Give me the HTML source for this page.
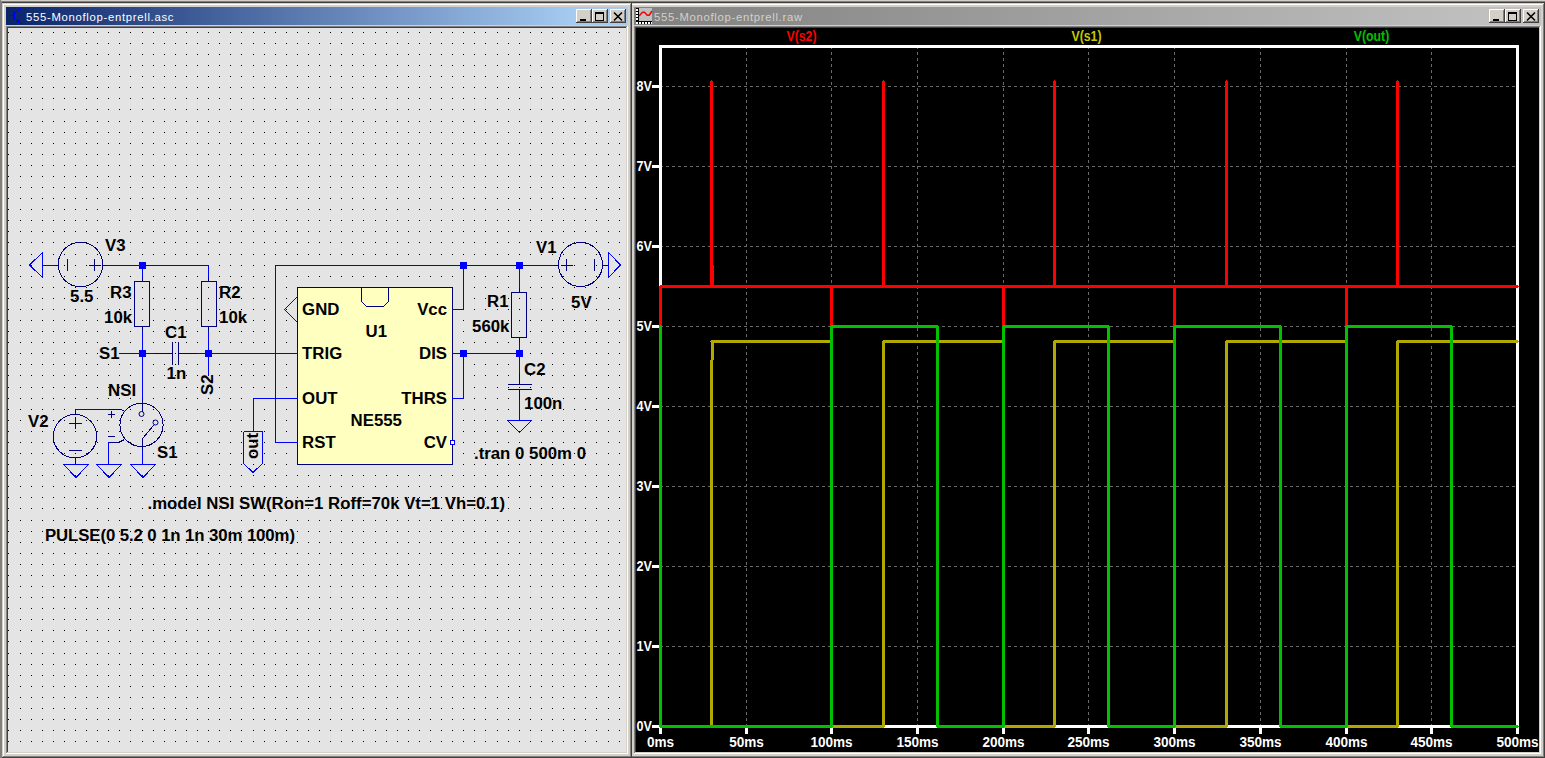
<!DOCTYPE html>
<html><head><meta charset="utf-8"><title>LTspice</title>
<style>html,body{margin:0;padding:0;background:#d4d0c8;overflow:hidden}svg{display:block}text{font-family:"Liberation Sans",sans-serif}</style>
</head><body>
<svg width="1545" height="758" viewBox="0 0 1545 758"><defs></defs><rect x="0" y="0" width="1545" height="758" fill="#d4d0c8"/><rect x="0" y="1" width="1545" height="1" fill="#808080"/><rect x="0" y="2" width="1545" height="1" fill="#404040"/><rect x="0" y="0" width="1" height="758" fill="#808080"/><rect x="1" y="1" width="1" height="757" fill="#808080"/><rect x="630" y="3" width="915" height="755" fill="#d4d0c8"/><rect x="630" y="3" width="915" height="1" fill="#d4d0c8"/><rect x="630" y="3" width="1" height="755" fill="#d4d0c8"/><rect x="631" y="4" width="913" height="1" fill="#ffffff"/><rect x="631" y="4" width="1" height="753" fill="#ffffff"/><rect x="630" y="757" width="915" height="1" fill="#404040"/><rect x="1544" y="3" width="1" height="755" fill="#404040"/><rect x="631" y="756" width="913" height="1" fill="#808080"/><rect x="1543" y="4" width="1" height="753" fill="#808080"/><linearGradient id="gi" gradientUnits="userSpaceOnUse" x1="634" x2="1487" y1="0" y2="0"><stop offset="0" stop-color="#808080"/><stop offset="1" stop-color="#c0c0c0"/></linearGradient><rect x="634" y="7" width="907" height="18" fill="url(#gi)"/><rect x="634" y="26" width="907" height="1" fill="#808080"/><rect x="634" y="26" width="1" height="728" fill="#808080"/><rect x="635" y="27" width="905" height="1" fill="#404040"/><rect x="635" y="27" width="1" height="726" fill="#404040"/><rect x="634" y="753" width="907" height="1" fill="#ffffff"/><rect x="1540" y="26" width="1" height="728" fill="#ffffff"/><rect x="635" y="752" width="905" height="1" fill="#d4d0c8"/><rect x="1539" y="27" width="1" height="726" fill="#d4d0c8"/><rect x="636" y="28" width="903" height="724" fill="#000000"/><rect x="1523" y="9" width="16" height="14" fill="#d4d0c8"/><rect x="1523" y="9" width="16" height="1" fill="#ffffff"/><rect x="1523" y="9" width="1" height="14" fill="#ffffff"/><rect x="1523" y="22" width="16" height="1" fill="#404040"/><rect x="1538" y="9" width="1" height="14" fill="#404040"/><rect x="1524" y="21" width="14" height="1" fill="#808080"/><rect x="1537" y="10" width="1" height="12" fill="#808080"/><path d="M1527,12.5 L1535,20.5 M1535,12.5 L1527,20.5" stroke="#000" stroke-width="1.6" fill="none"/><rect x="1505" y="9" width="16" height="14" fill="#d4d0c8"/><rect x="1505" y="9" width="16" height="1" fill="#ffffff"/><rect x="1505" y="9" width="1" height="14" fill="#ffffff"/><rect x="1505" y="22" width="16" height="1" fill="#404040"/><rect x="1520" y="9" width="1" height="14" fill="#404040"/><rect x="1506" y="21" width="14" height="1" fill="#808080"/><rect x="1519" y="10" width="1" height="12" fill="#808080"/><rect x="1508" y="12" width="9" height="2" fill="#000"/><rect x="1508" y="12" width="1" height="9" fill="#000"/><rect x="1516" y="12" width="1" height="9" fill="#000"/><rect x="1508" y="20" width="9" height="1" fill="#000"/><rect x="1489" y="9" width="16" height="14" fill="#d4d0c8"/><rect x="1489" y="9" width="16" height="1" fill="#ffffff"/><rect x="1489" y="9" width="1" height="14" fill="#ffffff"/><rect x="1489" y="22" width="16" height="1" fill="#404040"/><rect x="1504" y="9" width="1" height="14" fill="#404040"/><rect x="1490" y="21" width="14" height="1" fill="#808080"/><rect x="1503" y="10" width="1" height="12" fill="#808080"/><rect x="1493" y="19" width="6" height="2" fill="#000"/><rect x="2" y="3" width="630" height="755" fill="#d4d0c8"/><rect x="2" y="3" width="630" height="1" fill="#d4d0c8"/><rect x="2" y="3" width="1" height="755" fill="#d4d0c8"/><rect x="3" y="4" width="628" height="1" fill="#ffffff"/><rect x="3" y="4" width="1" height="753" fill="#ffffff"/><rect x="2" y="757" width="630" height="1" fill="#404040"/><rect x="631" y="3" width="1" height="755" fill="#404040"/><rect x="3" y="756" width="628" height="1" fill="#808080"/><rect x="630" y="4" width="1" height="753" fill="#808080"/><linearGradient id="ga" gradientUnits="userSpaceOnUse" x1="6" x2="574" y1="0" y2="0"><stop offset="0" stop-color="#0a246a"/><stop offset="1" stop-color="#a6caf0"/></linearGradient><rect x="6" y="7" width="622" height="18" fill="url(#ga)"/><rect x="6" y="26" width="622" height="1" fill="#808080"/><rect x="6" y="26" width="1" height="728" fill="#808080"/><rect x="7" y="27" width="620" height="1" fill="#404040"/><rect x="7" y="27" width="1" height="726" fill="#404040"/><rect x="6" y="753" width="622" height="1" fill="#ffffff"/><rect x="627" y="26" width="1" height="728" fill="#ffffff"/><rect x="7" y="752" width="620" height="1" fill="#d4d0c8"/><rect x="626" y="27" width="1" height="726" fill="#d4d0c8"/><rect x="8" y="28" width="618" height="724" fill="#e4e4e4"/><rect x="610" y="9" width="16" height="14" fill="#d4d0c8"/><rect x="610" y="9" width="16" height="1" fill="#ffffff"/><rect x="610" y="9" width="1" height="14" fill="#ffffff"/><rect x="610" y="22" width="16" height="1" fill="#404040"/><rect x="625" y="9" width="1" height="14" fill="#404040"/><rect x="611" y="21" width="14" height="1" fill="#808080"/><rect x="624" y="10" width="1" height="12" fill="#808080"/><path d="M614,12.5 L622,20.5 M622,12.5 L614,20.5" stroke="#000" stroke-width="1.6" fill="none"/><rect x="592" y="9" width="16" height="14" fill="#d4d0c8"/><rect x="592" y="9" width="16" height="1" fill="#ffffff"/><rect x="592" y="9" width="1" height="14" fill="#ffffff"/><rect x="592" y="22" width="16" height="1" fill="#404040"/><rect x="607" y="9" width="1" height="14" fill="#404040"/><rect x="593" y="21" width="14" height="1" fill="#808080"/><rect x="606" y="10" width="1" height="12" fill="#808080"/><rect x="595" y="12" width="9" height="2" fill="#000"/><rect x="595" y="12" width="1" height="9" fill="#000"/><rect x="603" y="12" width="1" height="9" fill="#000"/><rect x="595" y="20" width="9" height="1" fill="#000"/><rect x="576" y="9" width="16" height="14" fill="#d4d0c8"/><rect x="576" y="9" width="16" height="1" fill="#ffffff"/><rect x="576" y="9" width="1" height="14" fill="#ffffff"/><rect x="576" y="22" width="16" height="1" fill="#404040"/><rect x="591" y="9" width="1" height="14" fill="#404040"/><rect x="577" y="21" width="14" height="1" fill="#808080"/><rect x="590" y="10" width="1" height="12" fill="#808080"/><rect x="580" y="19" width="6" height="2" fill="#000"/><path d="M8 32h1v1h-1zM20 32h1v1h-1zM31 32h1v1h-1zM42 32h1v1h-1zM53 32h1v1h-1zM64 32h1v1h-1zM75 32h1v1h-1zM86 32h1v1h-1zM97 32h1v1h-1zM108 32h1v1h-1zM119 32h1v1h-1zM130 32h1v1h-1zM142 32h1v1h-1zM153 32h1v1h-1zM164 32h1v1h-1zM175 32h1v1h-1zM186 32h1v1h-1zM197 32h1v1h-1zM208 32h1v1h-1zM219 32h1v1h-1zM230 32h1v1h-1zM241 32h1v1h-1zM253 32h1v1h-1zM264 32h1v1h-1zM275 32h1v1h-1zM286 32h1v1h-1zM297 32h1v1h-1zM308 32h1v1h-1zM319 32h1v1h-1zM330 32h1v1h-1zM341 32h1v1h-1zM352 32h1v1h-1zM363 32h1v1h-1zM375 32h1v1h-1zM386 32h1v1h-1zM397 32h1v1h-1zM408 32h1v1h-1zM419 32h1v1h-1zM430 32h1v1h-1zM441 32h1v1h-1zM452 32h1v1h-1zM463 32h1v1h-1zM474 32h1v1h-1zM485 32h1v1h-1zM497 32h1v1h-1zM508 32h1v1h-1zM519 32h1v1h-1zM530 32h1v1h-1zM541 32h1v1h-1zM552 32h1v1h-1zM563 32h1v1h-1zM574 32h1v1h-1zM585 32h1v1h-1zM596 32h1v1h-1zM608 32h1v1h-1zM619 32h1v1h-1zM8 43h1v1h-1zM20 43h1v1h-1zM31 43h1v1h-1zM42 43h1v1h-1zM53 43h1v1h-1zM64 43h1v1h-1zM75 43h1v1h-1zM86 43h1v1h-1zM97 43h1v1h-1zM108 43h1v1h-1zM119 43h1v1h-1zM130 43h1v1h-1zM142 43h1v1h-1zM153 43h1v1h-1zM164 43h1v1h-1zM175 43h1v1h-1zM186 43h1v1h-1zM197 43h1v1h-1zM208 43h1v1h-1zM219 43h1v1h-1zM230 43h1v1h-1zM241 43h1v1h-1zM253 43h1v1h-1zM264 43h1v1h-1zM275 43h1v1h-1zM286 43h1v1h-1zM297 43h1v1h-1zM308 43h1v1h-1zM319 43h1v1h-1zM330 43h1v1h-1zM341 43h1v1h-1zM352 43h1v1h-1zM363 43h1v1h-1zM375 43h1v1h-1zM386 43h1v1h-1zM397 43h1v1h-1zM408 43h1v1h-1zM419 43h1v1h-1zM430 43h1v1h-1zM441 43h1v1h-1zM452 43h1v1h-1zM463 43h1v1h-1zM474 43h1v1h-1zM485 43h1v1h-1zM497 43h1v1h-1zM508 43h1v1h-1zM519 43h1v1h-1zM530 43h1v1h-1zM541 43h1v1h-1zM552 43h1v1h-1zM563 43h1v1h-1zM574 43h1v1h-1zM585 43h1v1h-1zM596 43h1v1h-1zM608 43h1v1h-1zM619 43h1v1h-1zM8 54h1v1h-1zM20 54h1v1h-1zM31 54h1v1h-1zM42 54h1v1h-1zM53 54h1v1h-1zM64 54h1v1h-1zM75 54h1v1h-1zM86 54h1v1h-1zM97 54h1v1h-1zM108 54h1v1h-1zM119 54h1v1h-1zM130 54h1v1h-1zM142 54h1v1h-1zM153 54h1v1h-1zM164 54h1v1h-1zM175 54h1v1h-1zM186 54h1v1h-1zM197 54h1v1h-1zM208 54h1v1h-1zM219 54h1v1h-1zM230 54h1v1h-1zM241 54h1v1h-1zM253 54h1v1h-1zM264 54h1v1h-1zM275 54h1v1h-1zM286 54h1v1h-1zM297 54h1v1h-1zM308 54h1v1h-1zM319 54h1v1h-1zM330 54h1v1h-1zM341 54h1v1h-1zM352 54h1v1h-1zM363 54h1v1h-1zM375 54h1v1h-1zM386 54h1v1h-1zM397 54h1v1h-1zM408 54h1v1h-1zM419 54h1v1h-1zM430 54h1v1h-1zM441 54h1v1h-1zM452 54h1v1h-1zM463 54h1v1h-1zM474 54h1v1h-1zM485 54h1v1h-1zM497 54h1v1h-1zM508 54h1v1h-1zM519 54h1v1h-1zM530 54h1v1h-1zM541 54h1v1h-1zM552 54h1v1h-1zM563 54h1v1h-1zM574 54h1v1h-1zM585 54h1v1h-1zM596 54h1v1h-1zM608 54h1v1h-1zM619 54h1v1h-1zM8 65h1v1h-1zM20 65h1v1h-1zM31 65h1v1h-1zM42 65h1v1h-1zM53 65h1v1h-1zM64 65h1v1h-1zM75 65h1v1h-1zM86 65h1v1h-1zM97 65h1v1h-1zM108 65h1v1h-1zM119 65h1v1h-1zM130 65h1v1h-1zM142 65h1v1h-1zM153 65h1v1h-1zM164 65h1v1h-1zM175 65h1v1h-1zM186 65h1v1h-1zM197 65h1v1h-1zM208 65h1v1h-1zM219 65h1v1h-1zM230 65h1v1h-1zM241 65h1v1h-1zM253 65h1v1h-1zM264 65h1v1h-1zM275 65h1v1h-1zM286 65h1v1h-1zM297 65h1v1h-1zM308 65h1v1h-1zM319 65h1v1h-1zM330 65h1v1h-1zM341 65h1v1h-1zM352 65h1v1h-1zM363 65h1v1h-1zM375 65h1v1h-1zM386 65h1v1h-1zM397 65h1v1h-1zM408 65h1v1h-1zM419 65h1v1h-1zM430 65h1v1h-1zM441 65h1v1h-1zM452 65h1v1h-1zM463 65h1v1h-1zM474 65h1v1h-1zM485 65h1v1h-1zM497 65h1v1h-1zM508 65h1v1h-1zM519 65h1v1h-1zM530 65h1v1h-1zM541 65h1v1h-1zM552 65h1v1h-1zM563 65h1v1h-1zM574 65h1v1h-1zM585 65h1v1h-1zM596 65h1v1h-1zM608 65h1v1h-1zM619 65h1v1h-1zM8 76h1v1h-1zM20 76h1v1h-1zM31 76h1v1h-1zM42 76h1v1h-1zM53 76h1v1h-1zM64 76h1v1h-1zM75 76h1v1h-1zM86 76h1v1h-1zM97 76h1v1h-1zM108 76h1v1h-1zM119 76h1v1h-1zM130 76h1v1h-1zM142 76h1v1h-1zM153 76h1v1h-1zM164 76h1v1h-1zM175 76h1v1h-1zM186 76h1v1h-1zM197 76h1v1h-1zM208 76h1v1h-1zM219 76h1v1h-1zM230 76h1v1h-1zM241 76h1v1h-1zM253 76h1v1h-1zM264 76h1v1h-1zM275 76h1v1h-1zM286 76h1v1h-1zM297 76h1v1h-1zM308 76h1v1h-1zM319 76h1v1h-1zM330 76h1v1h-1zM341 76h1v1h-1zM352 76h1v1h-1zM363 76h1v1h-1zM375 76h1v1h-1zM386 76h1v1h-1zM397 76h1v1h-1zM408 76h1v1h-1zM419 76h1v1h-1zM430 76h1v1h-1zM441 76h1v1h-1zM452 76h1v1h-1zM463 76h1v1h-1zM474 76h1v1h-1zM485 76h1v1h-1zM497 76h1v1h-1zM508 76h1v1h-1zM519 76h1v1h-1zM530 76h1v1h-1zM541 76h1v1h-1zM552 76h1v1h-1zM563 76h1v1h-1zM574 76h1v1h-1zM585 76h1v1h-1zM596 76h1v1h-1zM608 76h1v1h-1zM619 76h1v1h-1zM8 87h1v1h-1zM20 87h1v1h-1zM31 87h1v1h-1zM42 87h1v1h-1zM53 87h1v1h-1zM64 87h1v1h-1zM75 87h1v1h-1zM86 87h1v1h-1zM97 87h1v1h-1zM108 87h1v1h-1zM119 87h1v1h-1zM130 87h1v1h-1zM142 87h1v1h-1zM153 87h1v1h-1zM164 87h1v1h-1zM175 87h1v1h-1zM186 87h1v1h-1zM197 87h1v1h-1zM208 87h1v1h-1zM219 87h1v1h-1zM230 87h1v1h-1zM241 87h1v1h-1zM253 87h1v1h-1zM264 87h1v1h-1zM275 87h1v1h-1zM286 87h1v1h-1zM297 87h1v1h-1zM308 87h1v1h-1zM319 87h1v1h-1zM330 87h1v1h-1zM341 87h1v1h-1zM352 87h1v1h-1zM363 87h1v1h-1zM375 87h1v1h-1zM386 87h1v1h-1zM397 87h1v1h-1zM408 87h1v1h-1zM419 87h1v1h-1zM430 87h1v1h-1zM441 87h1v1h-1zM452 87h1v1h-1zM463 87h1v1h-1zM474 87h1v1h-1zM485 87h1v1h-1zM497 87h1v1h-1zM508 87h1v1h-1zM519 87h1v1h-1zM530 87h1v1h-1zM541 87h1v1h-1zM552 87h1v1h-1zM563 87h1v1h-1zM574 87h1v1h-1zM585 87h1v1h-1zM596 87h1v1h-1zM608 87h1v1h-1zM619 87h1v1h-1zM8 98h1v1h-1zM20 98h1v1h-1zM31 98h1v1h-1zM42 98h1v1h-1zM53 98h1v1h-1zM64 98h1v1h-1zM75 98h1v1h-1zM86 98h1v1h-1zM97 98h1v1h-1zM108 98h1v1h-1zM119 98h1v1h-1zM130 98h1v1h-1zM142 98h1v1h-1zM153 98h1v1h-1zM164 98h1v1h-1zM175 98h1v1h-1zM186 98h1v1h-1zM197 98h1v1h-1zM208 98h1v1h-1zM219 98h1v1h-1zM230 98h1v1h-1zM241 98h1v1h-1zM253 98h1v1h-1zM264 98h1v1h-1zM275 98h1v1h-1zM286 98h1v1h-1zM297 98h1v1h-1zM308 98h1v1h-1zM319 98h1v1h-1zM330 98h1v1h-1zM341 98h1v1h-1zM352 98h1v1h-1zM363 98h1v1h-1zM375 98h1v1h-1zM386 98h1v1h-1zM397 98h1v1h-1zM408 98h1v1h-1zM419 98h1v1h-1zM430 98h1v1h-1zM441 98h1v1h-1zM452 98h1v1h-1zM463 98h1v1h-1zM474 98h1v1h-1zM485 98h1v1h-1zM497 98h1v1h-1zM508 98h1v1h-1zM519 98h1v1h-1zM530 98h1v1h-1zM541 98h1v1h-1zM552 98h1v1h-1zM563 98h1v1h-1zM574 98h1v1h-1zM585 98h1v1h-1zM596 98h1v1h-1zM608 98h1v1h-1zM619 98h1v1h-1zM8 109h1v1h-1zM20 109h1v1h-1zM31 109h1v1h-1zM42 109h1v1h-1zM53 109h1v1h-1zM64 109h1v1h-1zM75 109h1v1h-1zM86 109h1v1h-1zM97 109h1v1h-1zM108 109h1v1h-1zM119 109h1v1h-1zM130 109h1v1h-1zM142 109h1v1h-1zM153 109h1v1h-1zM164 109h1v1h-1zM175 109h1v1h-1zM186 109h1v1h-1zM197 109h1v1h-1zM208 109h1v1h-1zM219 109h1v1h-1zM230 109h1v1h-1zM241 109h1v1h-1zM253 109h1v1h-1zM264 109h1v1h-1zM275 109h1v1h-1zM286 109h1v1h-1zM297 109h1v1h-1zM308 109h1v1h-1zM319 109h1v1h-1zM330 109h1v1h-1zM341 109h1v1h-1zM352 109h1v1h-1zM363 109h1v1h-1zM375 109h1v1h-1zM386 109h1v1h-1zM397 109h1v1h-1zM408 109h1v1h-1zM419 109h1v1h-1zM430 109h1v1h-1zM441 109h1v1h-1zM452 109h1v1h-1zM463 109h1v1h-1zM474 109h1v1h-1zM485 109h1v1h-1zM497 109h1v1h-1zM508 109h1v1h-1zM519 109h1v1h-1zM530 109h1v1h-1zM541 109h1v1h-1zM552 109h1v1h-1zM563 109h1v1h-1zM574 109h1v1h-1zM585 109h1v1h-1zM596 109h1v1h-1zM608 109h1v1h-1zM619 109h1v1h-1zM8 121h1v1h-1zM20 121h1v1h-1zM31 121h1v1h-1zM42 121h1v1h-1zM53 121h1v1h-1zM64 121h1v1h-1zM75 121h1v1h-1zM86 121h1v1h-1zM97 121h1v1h-1zM108 121h1v1h-1zM119 121h1v1h-1zM130 121h1v1h-1zM142 121h1v1h-1zM153 121h1v1h-1zM164 121h1v1h-1zM175 121h1v1h-1zM186 121h1v1h-1zM197 121h1v1h-1zM208 121h1v1h-1zM219 121h1v1h-1zM230 121h1v1h-1zM241 121h1v1h-1zM253 121h1v1h-1zM264 121h1v1h-1zM275 121h1v1h-1zM286 121h1v1h-1zM297 121h1v1h-1zM308 121h1v1h-1zM319 121h1v1h-1zM330 121h1v1h-1zM341 121h1v1h-1zM352 121h1v1h-1zM363 121h1v1h-1zM375 121h1v1h-1zM386 121h1v1h-1zM397 121h1v1h-1zM408 121h1v1h-1zM419 121h1v1h-1zM430 121h1v1h-1zM441 121h1v1h-1zM452 121h1v1h-1zM463 121h1v1h-1zM474 121h1v1h-1zM485 121h1v1h-1zM497 121h1v1h-1zM508 121h1v1h-1zM519 121h1v1h-1zM530 121h1v1h-1zM541 121h1v1h-1zM552 121h1v1h-1zM563 121h1v1h-1zM574 121h1v1h-1zM585 121h1v1h-1zM596 121h1v1h-1zM608 121h1v1h-1zM619 121h1v1h-1zM8 132h1v1h-1zM20 132h1v1h-1zM31 132h1v1h-1zM42 132h1v1h-1zM53 132h1v1h-1zM64 132h1v1h-1zM75 132h1v1h-1zM86 132h1v1h-1zM97 132h1v1h-1zM108 132h1v1h-1zM119 132h1v1h-1zM130 132h1v1h-1zM142 132h1v1h-1zM153 132h1v1h-1zM164 132h1v1h-1zM175 132h1v1h-1zM186 132h1v1h-1zM197 132h1v1h-1zM208 132h1v1h-1zM219 132h1v1h-1zM230 132h1v1h-1zM241 132h1v1h-1zM253 132h1v1h-1zM264 132h1v1h-1zM275 132h1v1h-1zM286 132h1v1h-1zM297 132h1v1h-1zM308 132h1v1h-1zM319 132h1v1h-1zM330 132h1v1h-1zM341 132h1v1h-1zM352 132h1v1h-1zM363 132h1v1h-1zM375 132h1v1h-1zM386 132h1v1h-1zM397 132h1v1h-1zM408 132h1v1h-1zM419 132h1v1h-1zM430 132h1v1h-1zM441 132h1v1h-1zM452 132h1v1h-1zM463 132h1v1h-1zM474 132h1v1h-1zM485 132h1v1h-1zM497 132h1v1h-1zM508 132h1v1h-1zM519 132h1v1h-1zM530 132h1v1h-1zM541 132h1v1h-1zM552 132h1v1h-1zM563 132h1v1h-1zM574 132h1v1h-1zM585 132h1v1h-1zM596 132h1v1h-1zM608 132h1v1h-1zM619 132h1v1h-1zM8 143h1v1h-1zM20 143h1v1h-1zM31 143h1v1h-1zM42 143h1v1h-1zM53 143h1v1h-1zM64 143h1v1h-1zM75 143h1v1h-1zM86 143h1v1h-1zM97 143h1v1h-1zM108 143h1v1h-1zM119 143h1v1h-1zM130 143h1v1h-1zM142 143h1v1h-1zM153 143h1v1h-1zM164 143h1v1h-1zM175 143h1v1h-1zM186 143h1v1h-1zM197 143h1v1h-1zM208 143h1v1h-1zM219 143h1v1h-1zM230 143h1v1h-1zM241 143h1v1h-1zM253 143h1v1h-1zM264 143h1v1h-1zM275 143h1v1h-1zM286 143h1v1h-1zM297 143h1v1h-1zM308 143h1v1h-1zM319 143h1v1h-1zM330 143h1v1h-1zM341 143h1v1h-1zM352 143h1v1h-1zM363 143h1v1h-1zM375 143h1v1h-1zM386 143h1v1h-1zM397 143h1v1h-1zM408 143h1v1h-1zM419 143h1v1h-1zM430 143h1v1h-1zM441 143h1v1h-1zM452 143h1v1h-1zM463 143h1v1h-1zM474 143h1v1h-1zM485 143h1v1h-1zM497 143h1v1h-1zM508 143h1v1h-1zM519 143h1v1h-1zM530 143h1v1h-1zM541 143h1v1h-1zM552 143h1v1h-1zM563 143h1v1h-1zM574 143h1v1h-1zM585 143h1v1h-1zM596 143h1v1h-1zM608 143h1v1h-1zM619 143h1v1h-1zM8 154h1v1h-1zM20 154h1v1h-1zM31 154h1v1h-1zM42 154h1v1h-1zM53 154h1v1h-1zM64 154h1v1h-1zM75 154h1v1h-1zM86 154h1v1h-1zM97 154h1v1h-1zM108 154h1v1h-1zM119 154h1v1h-1zM130 154h1v1h-1zM142 154h1v1h-1zM153 154h1v1h-1zM164 154h1v1h-1zM175 154h1v1h-1zM186 154h1v1h-1zM197 154h1v1h-1zM208 154h1v1h-1zM219 154h1v1h-1zM230 154h1v1h-1zM241 154h1v1h-1zM253 154h1v1h-1zM264 154h1v1h-1zM275 154h1v1h-1zM286 154h1v1h-1zM297 154h1v1h-1zM308 154h1v1h-1zM319 154h1v1h-1zM330 154h1v1h-1zM341 154h1v1h-1zM352 154h1v1h-1zM363 154h1v1h-1zM375 154h1v1h-1zM386 154h1v1h-1zM397 154h1v1h-1zM408 154h1v1h-1zM419 154h1v1h-1zM430 154h1v1h-1zM441 154h1v1h-1zM452 154h1v1h-1zM463 154h1v1h-1zM474 154h1v1h-1zM485 154h1v1h-1zM497 154h1v1h-1zM508 154h1v1h-1zM519 154h1v1h-1zM530 154h1v1h-1zM541 154h1v1h-1zM552 154h1v1h-1zM563 154h1v1h-1zM574 154h1v1h-1zM585 154h1v1h-1zM596 154h1v1h-1zM608 154h1v1h-1zM619 154h1v1h-1zM8 165h1v1h-1zM20 165h1v1h-1zM31 165h1v1h-1zM42 165h1v1h-1zM53 165h1v1h-1zM64 165h1v1h-1zM75 165h1v1h-1zM86 165h1v1h-1zM97 165h1v1h-1zM108 165h1v1h-1zM119 165h1v1h-1zM130 165h1v1h-1zM142 165h1v1h-1zM153 165h1v1h-1zM164 165h1v1h-1zM175 165h1v1h-1zM186 165h1v1h-1zM197 165h1v1h-1zM208 165h1v1h-1zM219 165h1v1h-1zM230 165h1v1h-1zM241 165h1v1h-1zM253 165h1v1h-1zM264 165h1v1h-1zM275 165h1v1h-1zM286 165h1v1h-1zM297 165h1v1h-1zM308 165h1v1h-1zM319 165h1v1h-1zM330 165h1v1h-1zM341 165h1v1h-1zM352 165h1v1h-1zM363 165h1v1h-1zM375 165h1v1h-1zM386 165h1v1h-1zM397 165h1v1h-1zM408 165h1v1h-1zM419 165h1v1h-1zM430 165h1v1h-1zM441 165h1v1h-1zM452 165h1v1h-1zM463 165h1v1h-1zM474 165h1v1h-1zM485 165h1v1h-1zM497 165h1v1h-1zM508 165h1v1h-1zM519 165h1v1h-1zM530 165h1v1h-1zM541 165h1v1h-1zM552 165h1v1h-1zM563 165h1v1h-1zM574 165h1v1h-1zM585 165h1v1h-1zM596 165h1v1h-1zM608 165h1v1h-1zM619 165h1v1h-1zM8 176h1v1h-1zM20 176h1v1h-1zM31 176h1v1h-1zM42 176h1v1h-1zM53 176h1v1h-1zM64 176h1v1h-1zM75 176h1v1h-1zM86 176h1v1h-1zM97 176h1v1h-1zM108 176h1v1h-1zM119 176h1v1h-1zM130 176h1v1h-1zM142 176h1v1h-1zM153 176h1v1h-1zM164 176h1v1h-1zM175 176h1v1h-1zM186 176h1v1h-1zM197 176h1v1h-1zM208 176h1v1h-1zM219 176h1v1h-1zM230 176h1v1h-1zM241 176h1v1h-1zM253 176h1v1h-1zM264 176h1v1h-1zM275 176h1v1h-1zM286 176h1v1h-1zM297 176h1v1h-1zM308 176h1v1h-1zM319 176h1v1h-1zM330 176h1v1h-1zM341 176h1v1h-1zM352 176h1v1h-1zM363 176h1v1h-1zM375 176h1v1h-1zM386 176h1v1h-1zM397 176h1v1h-1zM408 176h1v1h-1zM419 176h1v1h-1zM430 176h1v1h-1zM441 176h1v1h-1zM452 176h1v1h-1zM463 176h1v1h-1zM474 176h1v1h-1zM485 176h1v1h-1zM497 176h1v1h-1zM508 176h1v1h-1zM519 176h1v1h-1zM530 176h1v1h-1zM541 176h1v1h-1zM552 176h1v1h-1zM563 176h1v1h-1zM574 176h1v1h-1zM585 176h1v1h-1zM596 176h1v1h-1zM608 176h1v1h-1zM619 176h1v1h-1zM8 187h1v1h-1zM20 187h1v1h-1zM31 187h1v1h-1zM42 187h1v1h-1zM53 187h1v1h-1zM64 187h1v1h-1zM75 187h1v1h-1zM86 187h1v1h-1zM97 187h1v1h-1zM108 187h1v1h-1zM119 187h1v1h-1zM130 187h1v1h-1zM142 187h1v1h-1zM153 187h1v1h-1zM164 187h1v1h-1zM175 187h1v1h-1zM186 187h1v1h-1zM197 187h1v1h-1zM208 187h1v1h-1zM219 187h1v1h-1zM230 187h1v1h-1zM241 187h1v1h-1zM253 187h1v1h-1zM264 187h1v1h-1zM275 187h1v1h-1zM286 187h1v1h-1zM297 187h1v1h-1zM308 187h1v1h-1zM319 187h1v1h-1zM330 187h1v1h-1zM341 187h1v1h-1zM352 187h1v1h-1zM363 187h1v1h-1zM375 187h1v1h-1zM386 187h1v1h-1zM397 187h1v1h-1zM408 187h1v1h-1zM419 187h1v1h-1zM430 187h1v1h-1zM441 187h1v1h-1zM452 187h1v1h-1zM463 187h1v1h-1zM474 187h1v1h-1zM485 187h1v1h-1zM497 187h1v1h-1zM508 187h1v1h-1zM519 187h1v1h-1zM530 187h1v1h-1zM541 187h1v1h-1zM552 187h1v1h-1zM563 187h1v1h-1zM574 187h1v1h-1zM585 187h1v1h-1zM596 187h1v1h-1zM608 187h1v1h-1zM619 187h1v1h-1zM8 198h1v1h-1zM20 198h1v1h-1zM31 198h1v1h-1zM42 198h1v1h-1zM53 198h1v1h-1zM64 198h1v1h-1zM75 198h1v1h-1zM86 198h1v1h-1zM97 198h1v1h-1zM108 198h1v1h-1zM119 198h1v1h-1zM130 198h1v1h-1zM142 198h1v1h-1zM153 198h1v1h-1zM164 198h1v1h-1zM175 198h1v1h-1zM186 198h1v1h-1zM197 198h1v1h-1zM208 198h1v1h-1zM219 198h1v1h-1zM230 198h1v1h-1zM241 198h1v1h-1zM253 198h1v1h-1zM264 198h1v1h-1zM275 198h1v1h-1zM286 198h1v1h-1zM297 198h1v1h-1zM308 198h1v1h-1zM319 198h1v1h-1zM330 198h1v1h-1zM341 198h1v1h-1zM352 198h1v1h-1zM363 198h1v1h-1zM375 198h1v1h-1zM386 198h1v1h-1zM397 198h1v1h-1zM408 198h1v1h-1zM419 198h1v1h-1zM430 198h1v1h-1zM441 198h1v1h-1zM452 198h1v1h-1zM463 198h1v1h-1zM474 198h1v1h-1zM485 198h1v1h-1zM497 198h1v1h-1zM508 198h1v1h-1zM519 198h1v1h-1zM530 198h1v1h-1zM541 198h1v1h-1zM552 198h1v1h-1zM563 198h1v1h-1zM574 198h1v1h-1zM585 198h1v1h-1zM596 198h1v1h-1zM608 198h1v1h-1zM619 198h1v1h-1zM8 209h1v1h-1zM20 209h1v1h-1zM31 209h1v1h-1zM42 209h1v1h-1zM53 209h1v1h-1zM64 209h1v1h-1zM75 209h1v1h-1zM86 209h1v1h-1zM97 209h1v1h-1zM108 209h1v1h-1zM119 209h1v1h-1zM130 209h1v1h-1zM142 209h1v1h-1zM153 209h1v1h-1zM164 209h1v1h-1zM175 209h1v1h-1zM186 209h1v1h-1zM197 209h1v1h-1zM208 209h1v1h-1zM219 209h1v1h-1zM230 209h1v1h-1zM241 209h1v1h-1zM253 209h1v1h-1zM264 209h1v1h-1zM275 209h1v1h-1zM286 209h1v1h-1zM297 209h1v1h-1zM308 209h1v1h-1zM319 209h1v1h-1zM330 209h1v1h-1zM341 209h1v1h-1zM352 209h1v1h-1zM363 209h1v1h-1zM375 209h1v1h-1zM386 209h1v1h-1zM397 209h1v1h-1zM408 209h1v1h-1zM419 209h1v1h-1zM430 209h1v1h-1zM441 209h1v1h-1zM452 209h1v1h-1zM463 209h1v1h-1zM474 209h1v1h-1zM485 209h1v1h-1zM497 209h1v1h-1zM508 209h1v1h-1zM519 209h1v1h-1zM530 209h1v1h-1zM541 209h1v1h-1zM552 209h1v1h-1zM563 209h1v1h-1zM574 209h1v1h-1zM585 209h1v1h-1zM596 209h1v1h-1zM608 209h1v1h-1zM619 209h1v1h-1zM8 220h1v1h-1zM20 220h1v1h-1zM31 220h1v1h-1zM42 220h1v1h-1zM53 220h1v1h-1zM64 220h1v1h-1zM75 220h1v1h-1zM86 220h1v1h-1zM97 220h1v1h-1zM108 220h1v1h-1zM119 220h1v1h-1zM130 220h1v1h-1zM142 220h1v1h-1zM153 220h1v1h-1zM164 220h1v1h-1zM175 220h1v1h-1zM186 220h1v1h-1zM197 220h1v1h-1zM208 220h1v1h-1zM219 220h1v1h-1zM230 220h1v1h-1zM241 220h1v1h-1zM253 220h1v1h-1zM264 220h1v1h-1zM275 220h1v1h-1zM286 220h1v1h-1zM297 220h1v1h-1zM308 220h1v1h-1zM319 220h1v1h-1zM330 220h1v1h-1zM341 220h1v1h-1zM352 220h1v1h-1zM363 220h1v1h-1zM375 220h1v1h-1zM386 220h1v1h-1zM397 220h1v1h-1zM408 220h1v1h-1zM419 220h1v1h-1zM430 220h1v1h-1zM441 220h1v1h-1zM452 220h1v1h-1zM463 220h1v1h-1zM474 220h1v1h-1zM485 220h1v1h-1zM497 220h1v1h-1zM508 220h1v1h-1zM519 220h1v1h-1zM530 220h1v1h-1zM541 220h1v1h-1zM552 220h1v1h-1zM563 220h1v1h-1zM574 220h1v1h-1zM585 220h1v1h-1zM596 220h1v1h-1zM608 220h1v1h-1zM619 220h1v1h-1zM8 231h1v1h-1zM20 231h1v1h-1zM31 231h1v1h-1zM42 231h1v1h-1zM53 231h1v1h-1zM64 231h1v1h-1zM75 231h1v1h-1zM86 231h1v1h-1zM97 231h1v1h-1zM108 231h1v1h-1zM119 231h1v1h-1zM130 231h1v1h-1zM142 231h1v1h-1zM153 231h1v1h-1zM164 231h1v1h-1zM175 231h1v1h-1zM186 231h1v1h-1zM197 231h1v1h-1zM208 231h1v1h-1zM219 231h1v1h-1zM230 231h1v1h-1zM241 231h1v1h-1zM253 231h1v1h-1zM264 231h1v1h-1zM275 231h1v1h-1zM286 231h1v1h-1zM297 231h1v1h-1zM308 231h1v1h-1zM319 231h1v1h-1zM330 231h1v1h-1zM341 231h1v1h-1zM352 231h1v1h-1zM363 231h1v1h-1zM375 231h1v1h-1zM386 231h1v1h-1zM397 231h1v1h-1zM408 231h1v1h-1zM419 231h1v1h-1zM430 231h1v1h-1zM441 231h1v1h-1zM452 231h1v1h-1zM463 231h1v1h-1zM474 231h1v1h-1zM485 231h1v1h-1zM497 231h1v1h-1zM508 231h1v1h-1zM519 231h1v1h-1zM530 231h1v1h-1zM541 231h1v1h-1zM552 231h1v1h-1zM563 231h1v1h-1zM574 231h1v1h-1zM585 231h1v1h-1zM596 231h1v1h-1zM608 231h1v1h-1zM619 231h1v1h-1zM8 242h1v1h-1zM20 242h1v1h-1zM31 242h1v1h-1zM42 242h1v1h-1zM53 242h1v1h-1zM64 242h1v1h-1zM75 242h1v1h-1zM86 242h1v1h-1zM97 242h1v1h-1zM108 242h1v1h-1zM119 242h1v1h-1zM130 242h1v1h-1zM142 242h1v1h-1zM153 242h1v1h-1zM164 242h1v1h-1zM175 242h1v1h-1zM186 242h1v1h-1zM197 242h1v1h-1zM208 242h1v1h-1zM219 242h1v1h-1zM230 242h1v1h-1zM241 242h1v1h-1zM253 242h1v1h-1zM264 242h1v1h-1zM275 242h1v1h-1zM286 242h1v1h-1zM297 242h1v1h-1zM308 242h1v1h-1zM319 242h1v1h-1zM330 242h1v1h-1zM341 242h1v1h-1zM352 242h1v1h-1zM363 242h1v1h-1zM375 242h1v1h-1zM386 242h1v1h-1zM397 242h1v1h-1zM408 242h1v1h-1zM419 242h1v1h-1zM430 242h1v1h-1zM441 242h1v1h-1zM452 242h1v1h-1zM463 242h1v1h-1zM474 242h1v1h-1zM485 242h1v1h-1zM497 242h1v1h-1zM508 242h1v1h-1zM519 242h1v1h-1zM530 242h1v1h-1zM541 242h1v1h-1zM552 242h1v1h-1zM563 242h1v1h-1zM574 242h1v1h-1zM585 242h1v1h-1zM596 242h1v1h-1zM608 242h1v1h-1zM619 242h1v1h-1zM8 254h1v1h-1zM20 254h1v1h-1zM31 254h1v1h-1zM42 254h1v1h-1zM53 254h1v1h-1zM64 254h1v1h-1zM75 254h1v1h-1zM86 254h1v1h-1zM97 254h1v1h-1zM108 254h1v1h-1zM119 254h1v1h-1zM130 254h1v1h-1zM142 254h1v1h-1zM153 254h1v1h-1zM164 254h1v1h-1zM175 254h1v1h-1zM186 254h1v1h-1zM197 254h1v1h-1zM208 254h1v1h-1zM219 254h1v1h-1zM230 254h1v1h-1zM241 254h1v1h-1zM253 254h1v1h-1zM264 254h1v1h-1zM275 254h1v1h-1zM286 254h1v1h-1zM297 254h1v1h-1zM308 254h1v1h-1zM319 254h1v1h-1zM330 254h1v1h-1zM341 254h1v1h-1zM352 254h1v1h-1zM363 254h1v1h-1zM375 254h1v1h-1zM386 254h1v1h-1zM397 254h1v1h-1zM408 254h1v1h-1zM419 254h1v1h-1zM430 254h1v1h-1zM441 254h1v1h-1zM452 254h1v1h-1zM463 254h1v1h-1zM474 254h1v1h-1zM485 254h1v1h-1zM497 254h1v1h-1zM508 254h1v1h-1zM519 254h1v1h-1zM530 254h1v1h-1zM541 254h1v1h-1zM552 254h1v1h-1zM563 254h1v1h-1zM574 254h1v1h-1zM585 254h1v1h-1zM596 254h1v1h-1zM608 254h1v1h-1zM619 254h1v1h-1zM8 265h1v1h-1zM20 265h1v1h-1zM31 265h1v1h-1zM42 265h1v1h-1zM53 265h1v1h-1zM64 265h1v1h-1zM75 265h1v1h-1zM86 265h1v1h-1zM97 265h1v1h-1zM108 265h1v1h-1zM119 265h1v1h-1zM130 265h1v1h-1zM142 265h1v1h-1zM153 265h1v1h-1zM164 265h1v1h-1zM175 265h1v1h-1zM186 265h1v1h-1zM197 265h1v1h-1zM208 265h1v1h-1zM219 265h1v1h-1zM230 265h1v1h-1zM241 265h1v1h-1zM253 265h1v1h-1zM264 265h1v1h-1zM275 265h1v1h-1zM286 265h1v1h-1zM297 265h1v1h-1zM308 265h1v1h-1zM319 265h1v1h-1zM330 265h1v1h-1zM341 265h1v1h-1zM352 265h1v1h-1zM363 265h1v1h-1zM375 265h1v1h-1zM386 265h1v1h-1zM397 265h1v1h-1zM408 265h1v1h-1zM419 265h1v1h-1zM430 265h1v1h-1zM441 265h1v1h-1zM452 265h1v1h-1zM463 265h1v1h-1zM474 265h1v1h-1zM485 265h1v1h-1zM497 265h1v1h-1zM508 265h1v1h-1zM519 265h1v1h-1zM530 265h1v1h-1zM541 265h1v1h-1zM552 265h1v1h-1zM563 265h1v1h-1zM574 265h1v1h-1zM585 265h1v1h-1zM596 265h1v1h-1zM608 265h1v1h-1zM619 265h1v1h-1zM8 276h1v1h-1zM20 276h1v1h-1zM31 276h1v1h-1zM42 276h1v1h-1zM53 276h1v1h-1zM64 276h1v1h-1zM75 276h1v1h-1zM86 276h1v1h-1zM97 276h1v1h-1zM108 276h1v1h-1zM119 276h1v1h-1zM130 276h1v1h-1zM142 276h1v1h-1zM153 276h1v1h-1zM164 276h1v1h-1zM175 276h1v1h-1zM186 276h1v1h-1zM197 276h1v1h-1zM208 276h1v1h-1zM219 276h1v1h-1zM230 276h1v1h-1zM241 276h1v1h-1zM253 276h1v1h-1zM264 276h1v1h-1zM275 276h1v1h-1zM286 276h1v1h-1zM297 276h1v1h-1zM308 276h1v1h-1zM319 276h1v1h-1zM330 276h1v1h-1zM341 276h1v1h-1zM352 276h1v1h-1zM363 276h1v1h-1zM375 276h1v1h-1zM386 276h1v1h-1zM397 276h1v1h-1zM408 276h1v1h-1zM419 276h1v1h-1zM430 276h1v1h-1zM441 276h1v1h-1zM452 276h1v1h-1zM463 276h1v1h-1zM474 276h1v1h-1zM485 276h1v1h-1zM497 276h1v1h-1zM508 276h1v1h-1zM519 276h1v1h-1zM530 276h1v1h-1zM541 276h1v1h-1zM552 276h1v1h-1zM563 276h1v1h-1zM574 276h1v1h-1zM585 276h1v1h-1zM596 276h1v1h-1zM608 276h1v1h-1zM619 276h1v1h-1zM8 287h1v1h-1zM20 287h1v1h-1zM31 287h1v1h-1zM42 287h1v1h-1zM53 287h1v1h-1zM64 287h1v1h-1zM75 287h1v1h-1zM86 287h1v1h-1zM97 287h1v1h-1zM108 287h1v1h-1zM119 287h1v1h-1zM130 287h1v1h-1zM142 287h1v1h-1zM153 287h1v1h-1zM164 287h1v1h-1zM175 287h1v1h-1zM186 287h1v1h-1zM197 287h1v1h-1zM208 287h1v1h-1zM219 287h1v1h-1zM230 287h1v1h-1zM241 287h1v1h-1zM253 287h1v1h-1zM264 287h1v1h-1zM275 287h1v1h-1zM286 287h1v1h-1zM297 287h1v1h-1zM308 287h1v1h-1zM319 287h1v1h-1zM330 287h1v1h-1zM341 287h1v1h-1zM352 287h1v1h-1zM363 287h1v1h-1zM375 287h1v1h-1zM386 287h1v1h-1zM397 287h1v1h-1zM408 287h1v1h-1zM419 287h1v1h-1zM430 287h1v1h-1zM441 287h1v1h-1zM452 287h1v1h-1zM463 287h1v1h-1zM474 287h1v1h-1zM485 287h1v1h-1zM497 287h1v1h-1zM508 287h1v1h-1zM519 287h1v1h-1zM530 287h1v1h-1zM541 287h1v1h-1zM552 287h1v1h-1zM563 287h1v1h-1zM574 287h1v1h-1zM585 287h1v1h-1zM596 287h1v1h-1zM608 287h1v1h-1zM619 287h1v1h-1zM8 298h1v1h-1zM20 298h1v1h-1zM31 298h1v1h-1zM42 298h1v1h-1zM53 298h1v1h-1zM64 298h1v1h-1zM75 298h1v1h-1zM86 298h1v1h-1zM97 298h1v1h-1zM108 298h1v1h-1zM119 298h1v1h-1zM130 298h1v1h-1zM142 298h1v1h-1zM153 298h1v1h-1zM164 298h1v1h-1zM175 298h1v1h-1zM186 298h1v1h-1zM197 298h1v1h-1zM208 298h1v1h-1zM219 298h1v1h-1zM230 298h1v1h-1zM241 298h1v1h-1zM253 298h1v1h-1zM264 298h1v1h-1zM275 298h1v1h-1zM286 298h1v1h-1zM297 298h1v1h-1zM308 298h1v1h-1zM319 298h1v1h-1zM330 298h1v1h-1zM341 298h1v1h-1zM352 298h1v1h-1zM363 298h1v1h-1zM375 298h1v1h-1zM386 298h1v1h-1zM397 298h1v1h-1zM408 298h1v1h-1zM419 298h1v1h-1zM430 298h1v1h-1zM441 298h1v1h-1zM452 298h1v1h-1zM463 298h1v1h-1zM474 298h1v1h-1zM485 298h1v1h-1zM497 298h1v1h-1zM508 298h1v1h-1zM519 298h1v1h-1zM530 298h1v1h-1zM541 298h1v1h-1zM552 298h1v1h-1zM563 298h1v1h-1zM574 298h1v1h-1zM585 298h1v1h-1zM596 298h1v1h-1zM608 298h1v1h-1zM619 298h1v1h-1zM8 309h1v1h-1zM20 309h1v1h-1zM31 309h1v1h-1zM42 309h1v1h-1zM53 309h1v1h-1zM64 309h1v1h-1zM75 309h1v1h-1zM86 309h1v1h-1zM97 309h1v1h-1zM108 309h1v1h-1zM119 309h1v1h-1zM130 309h1v1h-1zM142 309h1v1h-1zM153 309h1v1h-1zM164 309h1v1h-1zM175 309h1v1h-1zM186 309h1v1h-1zM197 309h1v1h-1zM208 309h1v1h-1zM219 309h1v1h-1zM230 309h1v1h-1zM241 309h1v1h-1zM253 309h1v1h-1zM264 309h1v1h-1zM275 309h1v1h-1zM286 309h1v1h-1zM297 309h1v1h-1zM308 309h1v1h-1zM319 309h1v1h-1zM330 309h1v1h-1zM341 309h1v1h-1zM352 309h1v1h-1zM363 309h1v1h-1zM375 309h1v1h-1zM386 309h1v1h-1zM397 309h1v1h-1zM408 309h1v1h-1zM419 309h1v1h-1zM430 309h1v1h-1zM441 309h1v1h-1zM452 309h1v1h-1zM463 309h1v1h-1zM474 309h1v1h-1zM485 309h1v1h-1zM497 309h1v1h-1zM508 309h1v1h-1zM519 309h1v1h-1zM530 309h1v1h-1zM541 309h1v1h-1zM552 309h1v1h-1zM563 309h1v1h-1zM574 309h1v1h-1zM585 309h1v1h-1zM596 309h1v1h-1zM608 309h1v1h-1zM619 309h1v1h-1zM8 320h1v1h-1zM20 320h1v1h-1zM31 320h1v1h-1zM42 320h1v1h-1zM53 320h1v1h-1zM64 320h1v1h-1zM75 320h1v1h-1zM86 320h1v1h-1zM97 320h1v1h-1zM108 320h1v1h-1zM119 320h1v1h-1zM130 320h1v1h-1zM142 320h1v1h-1zM153 320h1v1h-1zM164 320h1v1h-1zM175 320h1v1h-1zM186 320h1v1h-1zM197 320h1v1h-1zM208 320h1v1h-1zM219 320h1v1h-1zM230 320h1v1h-1zM241 320h1v1h-1zM253 320h1v1h-1zM264 320h1v1h-1zM275 320h1v1h-1zM286 320h1v1h-1zM297 320h1v1h-1zM308 320h1v1h-1zM319 320h1v1h-1zM330 320h1v1h-1zM341 320h1v1h-1zM352 320h1v1h-1zM363 320h1v1h-1zM375 320h1v1h-1zM386 320h1v1h-1zM397 320h1v1h-1zM408 320h1v1h-1zM419 320h1v1h-1zM430 320h1v1h-1zM441 320h1v1h-1zM452 320h1v1h-1zM463 320h1v1h-1zM474 320h1v1h-1zM485 320h1v1h-1zM497 320h1v1h-1zM508 320h1v1h-1zM519 320h1v1h-1zM530 320h1v1h-1zM541 320h1v1h-1zM552 320h1v1h-1zM563 320h1v1h-1zM574 320h1v1h-1zM585 320h1v1h-1zM596 320h1v1h-1zM608 320h1v1h-1zM619 320h1v1h-1zM8 331h1v1h-1zM20 331h1v1h-1zM31 331h1v1h-1zM42 331h1v1h-1zM53 331h1v1h-1zM64 331h1v1h-1zM75 331h1v1h-1zM86 331h1v1h-1zM97 331h1v1h-1zM108 331h1v1h-1zM119 331h1v1h-1zM130 331h1v1h-1zM142 331h1v1h-1zM153 331h1v1h-1zM164 331h1v1h-1zM175 331h1v1h-1zM186 331h1v1h-1zM197 331h1v1h-1zM208 331h1v1h-1zM219 331h1v1h-1zM230 331h1v1h-1zM241 331h1v1h-1zM253 331h1v1h-1zM264 331h1v1h-1zM275 331h1v1h-1zM286 331h1v1h-1zM297 331h1v1h-1zM308 331h1v1h-1zM319 331h1v1h-1zM330 331h1v1h-1zM341 331h1v1h-1zM352 331h1v1h-1zM363 331h1v1h-1zM375 331h1v1h-1zM386 331h1v1h-1zM397 331h1v1h-1zM408 331h1v1h-1zM419 331h1v1h-1zM430 331h1v1h-1zM441 331h1v1h-1zM452 331h1v1h-1zM463 331h1v1h-1zM474 331h1v1h-1zM485 331h1v1h-1zM497 331h1v1h-1zM508 331h1v1h-1zM519 331h1v1h-1zM530 331h1v1h-1zM541 331h1v1h-1zM552 331h1v1h-1zM563 331h1v1h-1zM574 331h1v1h-1zM585 331h1v1h-1zM596 331h1v1h-1zM608 331h1v1h-1zM619 331h1v1h-1zM8 342h1v1h-1zM20 342h1v1h-1zM31 342h1v1h-1zM42 342h1v1h-1zM53 342h1v1h-1zM64 342h1v1h-1zM75 342h1v1h-1zM86 342h1v1h-1zM97 342h1v1h-1zM108 342h1v1h-1zM119 342h1v1h-1zM130 342h1v1h-1zM142 342h1v1h-1zM153 342h1v1h-1zM164 342h1v1h-1zM175 342h1v1h-1zM186 342h1v1h-1zM197 342h1v1h-1zM208 342h1v1h-1zM219 342h1v1h-1zM230 342h1v1h-1zM241 342h1v1h-1zM253 342h1v1h-1zM264 342h1v1h-1zM275 342h1v1h-1zM286 342h1v1h-1zM297 342h1v1h-1zM308 342h1v1h-1zM319 342h1v1h-1zM330 342h1v1h-1zM341 342h1v1h-1zM352 342h1v1h-1zM363 342h1v1h-1zM375 342h1v1h-1zM386 342h1v1h-1zM397 342h1v1h-1zM408 342h1v1h-1zM419 342h1v1h-1zM430 342h1v1h-1zM441 342h1v1h-1zM452 342h1v1h-1zM463 342h1v1h-1zM474 342h1v1h-1zM485 342h1v1h-1zM497 342h1v1h-1zM508 342h1v1h-1zM519 342h1v1h-1zM530 342h1v1h-1zM541 342h1v1h-1zM552 342h1v1h-1zM563 342h1v1h-1zM574 342h1v1h-1zM585 342h1v1h-1zM596 342h1v1h-1zM608 342h1v1h-1zM619 342h1v1h-1zM8 353h1v1h-1zM20 353h1v1h-1zM31 353h1v1h-1zM42 353h1v1h-1zM53 353h1v1h-1zM64 353h1v1h-1zM75 353h1v1h-1zM86 353h1v1h-1zM97 353h1v1h-1zM108 353h1v1h-1zM119 353h1v1h-1zM130 353h1v1h-1zM142 353h1v1h-1zM153 353h1v1h-1zM164 353h1v1h-1zM175 353h1v1h-1zM186 353h1v1h-1zM197 353h1v1h-1zM208 353h1v1h-1zM219 353h1v1h-1zM230 353h1v1h-1zM241 353h1v1h-1zM253 353h1v1h-1zM264 353h1v1h-1zM275 353h1v1h-1zM286 353h1v1h-1zM297 353h1v1h-1zM308 353h1v1h-1zM319 353h1v1h-1zM330 353h1v1h-1zM341 353h1v1h-1zM352 353h1v1h-1zM363 353h1v1h-1zM375 353h1v1h-1zM386 353h1v1h-1zM397 353h1v1h-1zM408 353h1v1h-1zM419 353h1v1h-1zM430 353h1v1h-1zM441 353h1v1h-1zM452 353h1v1h-1zM463 353h1v1h-1zM474 353h1v1h-1zM485 353h1v1h-1zM497 353h1v1h-1zM508 353h1v1h-1zM519 353h1v1h-1zM530 353h1v1h-1zM541 353h1v1h-1zM552 353h1v1h-1zM563 353h1v1h-1zM574 353h1v1h-1zM585 353h1v1h-1zM596 353h1v1h-1zM608 353h1v1h-1zM619 353h1v1h-1zM8 364h1v1h-1zM20 364h1v1h-1zM31 364h1v1h-1zM42 364h1v1h-1zM53 364h1v1h-1zM64 364h1v1h-1zM75 364h1v1h-1zM86 364h1v1h-1zM97 364h1v1h-1zM108 364h1v1h-1zM119 364h1v1h-1zM130 364h1v1h-1zM142 364h1v1h-1zM153 364h1v1h-1zM164 364h1v1h-1zM175 364h1v1h-1zM186 364h1v1h-1zM197 364h1v1h-1zM208 364h1v1h-1zM219 364h1v1h-1zM230 364h1v1h-1zM241 364h1v1h-1zM253 364h1v1h-1zM264 364h1v1h-1zM275 364h1v1h-1zM286 364h1v1h-1zM297 364h1v1h-1zM308 364h1v1h-1zM319 364h1v1h-1zM330 364h1v1h-1zM341 364h1v1h-1zM352 364h1v1h-1zM363 364h1v1h-1zM375 364h1v1h-1zM386 364h1v1h-1zM397 364h1v1h-1zM408 364h1v1h-1zM419 364h1v1h-1zM430 364h1v1h-1zM441 364h1v1h-1zM452 364h1v1h-1zM463 364h1v1h-1zM474 364h1v1h-1zM485 364h1v1h-1zM497 364h1v1h-1zM508 364h1v1h-1zM519 364h1v1h-1zM530 364h1v1h-1zM541 364h1v1h-1zM552 364h1v1h-1zM563 364h1v1h-1zM574 364h1v1h-1zM585 364h1v1h-1zM596 364h1v1h-1zM608 364h1v1h-1zM619 364h1v1h-1zM8 375h1v1h-1zM20 375h1v1h-1zM31 375h1v1h-1zM42 375h1v1h-1zM53 375h1v1h-1zM64 375h1v1h-1zM75 375h1v1h-1zM86 375h1v1h-1zM97 375h1v1h-1zM108 375h1v1h-1zM119 375h1v1h-1zM130 375h1v1h-1zM142 375h1v1h-1zM153 375h1v1h-1zM164 375h1v1h-1zM175 375h1v1h-1zM186 375h1v1h-1zM197 375h1v1h-1zM208 375h1v1h-1zM219 375h1v1h-1zM230 375h1v1h-1zM241 375h1v1h-1zM253 375h1v1h-1zM264 375h1v1h-1zM275 375h1v1h-1zM286 375h1v1h-1zM297 375h1v1h-1zM308 375h1v1h-1zM319 375h1v1h-1zM330 375h1v1h-1zM341 375h1v1h-1zM352 375h1v1h-1zM363 375h1v1h-1zM375 375h1v1h-1zM386 375h1v1h-1zM397 375h1v1h-1zM408 375h1v1h-1zM419 375h1v1h-1zM430 375h1v1h-1zM441 375h1v1h-1zM452 375h1v1h-1zM463 375h1v1h-1zM474 375h1v1h-1zM485 375h1v1h-1zM497 375h1v1h-1zM508 375h1v1h-1zM519 375h1v1h-1zM530 375h1v1h-1zM541 375h1v1h-1zM552 375h1v1h-1zM563 375h1v1h-1zM574 375h1v1h-1zM585 375h1v1h-1zM596 375h1v1h-1zM608 375h1v1h-1zM619 375h1v1h-1zM8 387h1v1h-1zM20 387h1v1h-1zM31 387h1v1h-1zM42 387h1v1h-1zM53 387h1v1h-1zM64 387h1v1h-1zM75 387h1v1h-1zM86 387h1v1h-1zM97 387h1v1h-1zM108 387h1v1h-1zM119 387h1v1h-1zM130 387h1v1h-1zM142 387h1v1h-1zM153 387h1v1h-1zM164 387h1v1h-1zM175 387h1v1h-1zM186 387h1v1h-1zM197 387h1v1h-1zM208 387h1v1h-1zM219 387h1v1h-1zM230 387h1v1h-1zM241 387h1v1h-1zM253 387h1v1h-1zM264 387h1v1h-1zM275 387h1v1h-1zM286 387h1v1h-1zM297 387h1v1h-1zM308 387h1v1h-1zM319 387h1v1h-1zM330 387h1v1h-1zM341 387h1v1h-1zM352 387h1v1h-1zM363 387h1v1h-1zM375 387h1v1h-1zM386 387h1v1h-1zM397 387h1v1h-1zM408 387h1v1h-1zM419 387h1v1h-1zM430 387h1v1h-1zM441 387h1v1h-1zM452 387h1v1h-1zM463 387h1v1h-1zM474 387h1v1h-1zM485 387h1v1h-1zM497 387h1v1h-1zM508 387h1v1h-1zM519 387h1v1h-1zM530 387h1v1h-1zM541 387h1v1h-1zM552 387h1v1h-1zM563 387h1v1h-1zM574 387h1v1h-1zM585 387h1v1h-1zM596 387h1v1h-1zM608 387h1v1h-1zM619 387h1v1h-1zM8 398h1v1h-1zM20 398h1v1h-1zM31 398h1v1h-1zM42 398h1v1h-1zM53 398h1v1h-1zM64 398h1v1h-1zM75 398h1v1h-1zM86 398h1v1h-1zM97 398h1v1h-1zM108 398h1v1h-1zM119 398h1v1h-1zM130 398h1v1h-1zM142 398h1v1h-1zM153 398h1v1h-1zM164 398h1v1h-1zM175 398h1v1h-1zM186 398h1v1h-1zM197 398h1v1h-1zM208 398h1v1h-1zM219 398h1v1h-1zM230 398h1v1h-1zM241 398h1v1h-1zM253 398h1v1h-1zM264 398h1v1h-1zM275 398h1v1h-1zM286 398h1v1h-1zM297 398h1v1h-1zM308 398h1v1h-1zM319 398h1v1h-1zM330 398h1v1h-1zM341 398h1v1h-1zM352 398h1v1h-1zM363 398h1v1h-1zM375 398h1v1h-1zM386 398h1v1h-1zM397 398h1v1h-1zM408 398h1v1h-1zM419 398h1v1h-1zM430 398h1v1h-1zM441 398h1v1h-1zM452 398h1v1h-1zM463 398h1v1h-1zM474 398h1v1h-1zM485 398h1v1h-1zM497 398h1v1h-1zM508 398h1v1h-1zM519 398h1v1h-1zM530 398h1v1h-1zM541 398h1v1h-1zM552 398h1v1h-1zM563 398h1v1h-1zM574 398h1v1h-1zM585 398h1v1h-1zM596 398h1v1h-1zM608 398h1v1h-1zM619 398h1v1h-1zM8 409h1v1h-1zM20 409h1v1h-1zM31 409h1v1h-1zM42 409h1v1h-1zM53 409h1v1h-1zM64 409h1v1h-1zM75 409h1v1h-1zM86 409h1v1h-1zM97 409h1v1h-1zM108 409h1v1h-1zM119 409h1v1h-1zM130 409h1v1h-1zM142 409h1v1h-1zM153 409h1v1h-1zM164 409h1v1h-1zM175 409h1v1h-1zM186 409h1v1h-1zM197 409h1v1h-1zM208 409h1v1h-1zM219 409h1v1h-1zM230 409h1v1h-1zM241 409h1v1h-1zM253 409h1v1h-1zM264 409h1v1h-1zM275 409h1v1h-1zM286 409h1v1h-1zM297 409h1v1h-1zM308 409h1v1h-1zM319 409h1v1h-1zM330 409h1v1h-1zM341 409h1v1h-1zM352 409h1v1h-1zM363 409h1v1h-1zM375 409h1v1h-1zM386 409h1v1h-1zM397 409h1v1h-1zM408 409h1v1h-1zM419 409h1v1h-1zM430 409h1v1h-1zM441 409h1v1h-1zM452 409h1v1h-1zM463 409h1v1h-1zM474 409h1v1h-1zM485 409h1v1h-1zM497 409h1v1h-1zM508 409h1v1h-1zM519 409h1v1h-1zM530 409h1v1h-1zM541 409h1v1h-1zM552 409h1v1h-1zM563 409h1v1h-1zM574 409h1v1h-1zM585 409h1v1h-1zM596 409h1v1h-1zM608 409h1v1h-1zM619 409h1v1h-1zM8 420h1v1h-1zM20 420h1v1h-1zM31 420h1v1h-1zM42 420h1v1h-1zM53 420h1v1h-1zM64 420h1v1h-1zM75 420h1v1h-1zM86 420h1v1h-1zM97 420h1v1h-1zM108 420h1v1h-1zM119 420h1v1h-1zM130 420h1v1h-1zM142 420h1v1h-1zM153 420h1v1h-1zM164 420h1v1h-1zM175 420h1v1h-1zM186 420h1v1h-1zM197 420h1v1h-1zM208 420h1v1h-1zM219 420h1v1h-1zM230 420h1v1h-1zM241 420h1v1h-1zM253 420h1v1h-1zM264 420h1v1h-1zM275 420h1v1h-1zM286 420h1v1h-1zM297 420h1v1h-1zM308 420h1v1h-1zM319 420h1v1h-1zM330 420h1v1h-1zM341 420h1v1h-1zM352 420h1v1h-1zM363 420h1v1h-1zM375 420h1v1h-1zM386 420h1v1h-1zM397 420h1v1h-1zM408 420h1v1h-1zM419 420h1v1h-1zM430 420h1v1h-1zM441 420h1v1h-1zM452 420h1v1h-1zM463 420h1v1h-1zM474 420h1v1h-1zM485 420h1v1h-1zM497 420h1v1h-1zM508 420h1v1h-1zM519 420h1v1h-1zM530 420h1v1h-1zM541 420h1v1h-1zM552 420h1v1h-1zM563 420h1v1h-1zM574 420h1v1h-1zM585 420h1v1h-1zM596 420h1v1h-1zM608 420h1v1h-1zM619 420h1v1h-1zM8 431h1v1h-1zM20 431h1v1h-1zM31 431h1v1h-1zM42 431h1v1h-1zM53 431h1v1h-1zM64 431h1v1h-1zM75 431h1v1h-1zM86 431h1v1h-1zM97 431h1v1h-1zM108 431h1v1h-1zM119 431h1v1h-1zM130 431h1v1h-1zM142 431h1v1h-1zM153 431h1v1h-1zM164 431h1v1h-1zM175 431h1v1h-1zM186 431h1v1h-1zM197 431h1v1h-1zM208 431h1v1h-1zM219 431h1v1h-1zM230 431h1v1h-1zM241 431h1v1h-1zM253 431h1v1h-1zM264 431h1v1h-1zM275 431h1v1h-1zM286 431h1v1h-1zM297 431h1v1h-1zM308 431h1v1h-1zM319 431h1v1h-1zM330 431h1v1h-1zM341 431h1v1h-1zM352 431h1v1h-1zM363 431h1v1h-1zM375 431h1v1h-1zM386 431h1v1h-1zM397 431h1v1h-1zM408 431h1v1h-1zM419 431h1v1h-1zM430 431h1v1h-1zM441 431h1v1h-1zM452 431h1v1h-1zM463 431h1v1h-1zM474 431h1v1h-1zM485 431h1v1h-1zM497 431h1v1h-1zM508 431h1v1h-1zM519 431h1v1h-1zM530 431h1v1h-1zM541 431h1v1h-1zM552 431h1v1h-1zM563 431h1v1h-1zM574 431h1v1h-1zM585 431h1v1h-1zM596 431h1v1h-1zM608 431h1v1h-1zM619 431h1v1h-1zM8 442h1v1h-1zM20 442h1v1h-1zM31 442h1v1h-1zM42 442h1v1h-1zM53 442h1v1h-1zM64 442h1v1h-1zM75 442h1v1h-1zM86 442h1v1h-1zM97 442h1v1h-1zM108 442h1v1h-1zM119 442h1v1h-1zM130 442h1v1h-1zM142 442h1v1h-1zM153 442h1v1h-1zM164 442h1v1h-1zM175 442h1v1h-1zM186 442h1v1h-1zM197 442h1v1h-1zM208 442h1v1h-1zM219 442h1v1h-1zM230 442h1v1h-1zM241 442h1v1h-1zM253 442h1v1h-1zM264 442h1v1h-1zM275 442h1v1h-1zM286 442h1v1h-1zM297 442h1v1h-1zM308 442h1v1h-1zM319 442h1v1h-1zM330 442h1v1h-1zM341 442h1v1h-1zM352 442h1v1h-1zM363 442h1v1h-1zM375 442h1v1h-1zM386 442h1v1h-1zM397 442h1v1h-1zM408 442h1v1h-1zM419 442h1v1h-1zM430 442h1v1h-1zM441 442h1v1h-1zM452 442h1v1h-1zM463 442h1v1h-1zM474 442h1v1h-1zM485 442h1v1h-1zM497 442h1v1h-1zM508 442h1v1h-1zM519 442h1v1h-1zM530 442h1v1h-1zM541 442h1v1h-1zM552 442h1v1h-1zM563 442h1v1h-1zM574 442h1v1h-1zM585 442h1v1h-1zM596 442h1v1h-1zM608 442h1v1h-1zM619 442h1v1h-1zM8 453h1v1h-1zM20 453h1v1h-1zM31 453h1v1h-1zM42 453h1v1h-1zM53 453h1v1h-1zM64 453h1v1h-1zM75 453h1v1h-1zM86 453h1v1h-1zM97 453h1v1h-1zM108 453h1v1h-1zM119 453h1v1h-1zM130 453h1v1h-1zM142 453h1v1h-1zM153 453h1v1h-1zM164 453h1v1h-1zM175 453h1v1h-1zM186 453h1v1h-1zM197 453h1v1h-1zM208 453h1v1h-1zM219 453h1v1h-1zM230 453h1v1h-1zM241 453h1v1h-1zM253 453h1v1h-1zM264 453h1v1h-1zM275 453h1v1h-1zM286 453h1v1h-1zM297 453h1v1h-1zM308 453h1v1h-1zM319 453h1v1h-1zM330 453h1v1h-1zM341 453h1v1h-1zM352 453h1v1h-1zM363 453h1v1h-1zM375 453h1v1h-1zM386 453h1v1h-1zM397 453h1v1h-1zM408 453h1v1h-1zM419 453h1v1h-1zM430 453h1v1h-1zM441 453h1v1h-1zM452 453h1v1h-1zM463 453h1v1h-1zM474 453h1v1h-1zM485 453h1v1h-1zM497 453h1v1h-1zM508 453h1v1h-1zM519 453h1v1h-1zM530 453h1v1h-1zM541 453h1v1h-1zM552 453h1v1h-1zM563 453h1v1h-1zM574 453h1v1h-1zM585 453h1v1h-1zM596 453h1v1h-1zM608 453h1v1h-1zM619 453h1v1h-1zM8 464h1v1h-1zM20 464h1v1h-1zM31 464h1v1h-1zM42 464h1v1h-1zM53 464h1v1h-1zM64 464h1v1h-1zM75 464h1v1h-1zM86 464h1v1h-1zM97 464h1v1h-1zM108 464h1v1h-1zM119 464h1v1h-1zM130 464h1v1h-1zM142 464h1v1h-1zM153 464h1v1h-1zM164 464h1v1h-1zM175 464h1v1h-1zM186 464h1v1h-1zM197 464h1v1h-1zM208 464h1v1h-1zM219 464h1v1h-1zM230 464h1v1h-1zM241 464h1v1h-1zM253 464h1v1h-1zM264 464h1v1h-1zM275 464h1v1h-1zM286 464h1v1h-1zM297 464h1v1h-1zM308 464h1v1h-1zM319 464h1v1h-1zM330 464h1v1h-1zM341 464h1v1h-1zM352 464h1v1h-1zM363 464h1v1h-1zM375 464h1v1h-1zM386 464h1v1h-1zM397 464h1v1h-1zM408 464h1v1h-1zM419 464h1v1h-1zM430 464h1v1h-1zM441 464h1v1h-1zM452 464h1v1h-1zM463 464h1v1h-1zM474 464h1v1h-1zM485 464h1v1h-1zM497 464h1v1h-1zM508 464h1v1h-1zM519 464h1v1h-1zM530 464h1v1h-1zM541 464h1v1h-1zM552 464h1v1h-1zM563 464h1v1h-1zM574 464h1v1h-1zM585 464h1v1h-1zM596 464h1v1h-1zM608 464h1v1h-1zM619 464h1v1h-1zM8 475h1v1h-1zM20 475h1v1h-1zM31 475h1v1h-1zM42 475h1v1h-1zM53 475h1v1h-1zM64 475h1v1h-1zM75 475h1v1h-1zM86 475h1v1h-1zM97 475h1v1h-1zM108 475h1v1h-1zM119 475h1v1h-1zM130 475h1v1h-1zM142 475h1v1h-1zM153 475h1v1h-1zM164 475h1v1h-1zM175 475h1v1h-1zM186 475h1v1h-1zM197 475h1v1h-1zM208 475h1v1h-1zM219 475h1v1h-1zM230 475h1v1h-1zM241 475h1v1h-1zM253 475h1v1h-1zM264 475h1v1h-1zM275 475h1v1h-1zM286 475h1v1h-1zM297 475h1v1h-1zM308 475h1v1h-1zM319 475h1v1h-1zM330 475h1v1h-1zM341 475h1v1h-1zM352 475h1v1h-1zM363 475h1v1h-1zM375 475h1v1h-1zM386 475h1v1h-1zM397 475h1v1h-1zM408 475h1v1h-1zM419 475h1v1h-1zM430 475h1v1h-1zM441 475h1v1h-1zM452 475h1v1h-1zM463 475h1v1h-1zM474 475h1v1h-1zM485 475h1v1h-1zM497 475h1v1h-1zM508 475h1v1h-1zM519 475h1v1h-1zM530 475h1v1h-1zM541 475h1v1h-1zM552 475h1v1h-1zM563 475h1v1h-1zM574 475h1v1h-1zM585 475h1v1h-1zM596 475h1v1h-1zM608 475h1v1h-1zM619 475h1v1h-1zM8 486h1v1h-1zM20 486h1v1h-1zM31 486h1v1h-1zM42 486h1v1h-1zM53 486h1v1h-1zM64 486h1v1h-1zM75 486h1v1h-1zM86 486h1v1h-1zM97 486h1v1h-1zM108 486h1v1h-1zM119 486h1v1h-1zM130 486h1v1h-1zM142 486h1v1h-1zM153 486h1v1h-1zM164 486h1v1h-1zM175 486h1v1h-1zM186 486h1v1h-1zM197 486h1v1h-1zM208 486h1v1h-1zM219 486h1v1h-1zM230 486h1v1h-1zM241 486h1v1h-1zM253 486h1v1h-1zM264 486h1v1h-1zM275 486h1v1h-1zM286 486h1v1h-1zM297 486h1v1h-1zM308 486h1v1h-1zM319 486h1v1h-1zM330 486h1v1h-1zM341 486h1v1h-1zM352 486h1v1h-1zM363 486h1v1h-1zM375 486h1v1h-1zM386 486h1v1h-1zM397 486h1v1h-1zM408 486h1v1h-1zM419 486h1v1h-1zM430 486h1v1h-1zM441 486h1v1h-1zM452 486h1v1h-1zM463 486h1v1h-1zM474 486h1v1h-1zM485 486h1v1h-1zM497 486h1v1h-1zM508 486h1v1h-1zM519 486h1v1h-1zM530 486h1v1h-1zM541 486h1v1h-1zM552 486h1v1h-1zM563 486h1v1h-1zM574 486h1v1h-1zM585 486h1v1h-1zM596 486h1v1h-1zM608 486h1v1h-1zM619 486h1v1h-1zM8 497h1v1h-1zM20 497h1v1h-1zM31 497h1v1h-1zM42 497h1v1h-1zM53 497h1v1h-1zM64 497h1v1h-1zM75 497h1v1h-1zM86 497h1v1h-1zM97 497h1v1h-1zM108 497h1v1h-1zM119 497h1v1h-1zM130 497h1v1h-1zM142 497h1v1h-1zM153 497h1v1h-1zM164 497h1v1h-1zM175 497h1v1h-1zM186 497h1v1h-1zM197 497h1v1h-1zM208 497h1v1h-1zM219 497h1v1h-1zM230 497h1v1h-1zM241 497h1v1h-1zM253 497h1v1h-1zM264 497h1v1h-1zM275 497h1v1h-1zM286 497h1v1h-1zM297 497h1v1h-1zM308 497h1v1h-1zM319 497h1v1h-1zM330 497h1v1h-1zM341 497h1v1h-1zM352 497h1v1h-1zM363 497h1v1h-1zM375 497h1v1h-1zM386 497h1v1h-1zM397 497h1v1h-1zM408 497h1v1h-1zM419 497h1v1h-1zM430 497h1v1h-1zM441 497h1v1h-1zM452 497h1v1h-1zM463 497h1v1h-1zM474 497h1v1h-1zM485 497h1v1h-1zM497 497h1v1h-1zM508 497h1v1h-1zM519 497h1v1h-1zM530 497h1v1h-1zM541 497h1v1h-1zM552 497h1v1h-1zM563 497h1v1h-1zM574 497h1v1h-1zM585 497h1v1h-1zM596 497h1v1h-1zM608 497h1v1h-1zM619 497h1v1h-1zM8 508h1v1h-1zM20 508h1v1h-1zM31 508h1v1h-1zM42 508h1v1h-1zM53 508h1v1h-1zM64 508h1v1h-1zM75 508h1v1h-1zM86 508h1v1h-1zM97 508h1v1h-1zM108 508h1v1h-1zM119 508h1v1h-1zM130 508h1v1h-1zM142 508h1v1h-1zM153 508h1v1h-1zM164 508h1v1h-1zM175 508h1v1h-1zM186 508h1v1h-1zM197 508h1v1h-1zM208 508h1v1h-1zM219 508h1v1h-1zM230 508h1v1h-1zM241 508h1v1h-1zM253 508h1v1h-1zM264 508h1v1h-1zM275 508h1v1h-1zM286 508h1v1h-1zM297 508h1v1h-1zM308 508h1v1h-1zM319 508h1v1h-1zM330 508h1v1h-1zM341 508h1v1h-1zM352 508h1v1h-1zM363 508h1v1h-1zM375 508h1v1h-1zM386 508h1v1h-1zM397 508h1v1h-1zM408 508h1v1h-1zM419 508h1v1h-1zM430 508h1v1h-1zM441 508h1v1h-1zM452 508h1v1h-1zM463 508h1v1h-1zM474 508h1v1h-1zM485 508h1v1h-1zM497 508h1v1h-1zM508 508h1v1h-1zM519 508h1v1h-1zM530 508h1v1h-1zM541 508h1v1h-1zM552 508h1v1h-1zM563 508h1v1h-1zM574 508h1v1h-1zM585 508h1v1h-1zM596 508h1v1h-1zM608 508h1v1h-1zM619 508h1v1h-1zM8 520h1v1h-1zM20 520h1v1h-1zM31 520h1v1h-1zM42 520h1v1h-1zM53 520h1v1h-1zM64 520h1v1h-1zM75 520h1v1h-1zM86 520h1v1h-1zM97 520h1v1h-1zM108 520h1v1h-1zM119 520h1v1h-1zM130 520h1v1h-1zM142 520h1v1h-1zM153 520h1v1h-1zM164 520h1v1h-1zM175 520h1v1h-1zM186 520h1v1h-1zM197 520h1v1h-1zM208 520h1v1h-1zM219 520h1v1h-1zM230 520h1v1h-1zM241 520h1v1h-1zM253 520h1v1h-1zM264 520h1v1h-1zM275 520h1v1h-1zM286 520h1v1h-1zM297 520h1v1h-1zM308 520h1v1h-1zM319 520h1v1h-1zM330 520h1v1h-1zM341 520h1v1h-1zM352 520h1v1h-1zM363 520h1v1h-1zM375 520h1v1h-1zM386 520h1v1h-1zM397 520h1v1h-1zM408 520h1v1h-1zM419 520h1v1h-1zM430 520h1v1h-1zM441 520h1v1h-1zM452 520h1v1h-1zM463 520h1v1h-1zM474 520h1v1h-1zM485 520h1v1h-1zM497 520h1v1h-1zM508 520h1v1h-1zM519 520h1v1h-1zM530 520h1v1h-1zM541 520h1v1h-1zM552 520h1v1h-1zM563 520h1v1h-1zM574 520h1v1h-1zM585 520h1v1h-1zM596 520h1v1h-1zM608 520h1v1h-1zM619 520h1v1h-1zM8 531h1v1h-1zM20 531h1v1h-1zM31 531h1v1h-1zM42 531h1v1h-1zM53 531h1v1h-1zM64 531h1v1h-1zM75 531h1v1h-1zM86 531h1v1h-1zM97 531h1v1h-1zM108 531h1v1h-1zM119 531h1v1h-1zM130 531h1v1h-1zM142 531h1v1h-1zM153 531h1v1h-1zM164 531h1v1h-1zM175 531h1v1h-1zM186 531h1v1h-1zM197 531h1v1h-1zM208 531h1v1h-1zM219 531h1v1h-1zM230 531h1v1h-1zM241 531h1v1h-1zM253 531h1v1h-1zM264 531h1v1h-1zM275 531h1v1h-1zM286 531h1v1h-1zM297 531h1v1h-1zM308 531h1v1h-1zM319 531h1v1h-1zM330 531h1v1h-1zM341 531h1v1h-1zM352 531h1v1h-1zM363 531h1v1h-1zM375 531h1v1h-1zM386 531h1v1h-1zM397 531h1v1h-1zM408 531h1v1h-1zM419 531h1v1h-1zM430 531h1v1h-1zM441 531h1v1h-1zM452 531h1v1h-1zM463 531h1v1h-1zM474 531h1v1h-1zM485 531h1v1h-1zM497 531h1v1h-1zM508 531h1v1h-1zM519 531h1v1h-1zM530 531h1v1h-1zM541 531h1v1h-1zM552 531h1v1h-1zM563 531h1v1h-1zM574 531h1v1h-1zM585 531h1v1h-1zM596 531h1v1h-1zM608 531h1v1h-1zM619 531h1v1h-1zM8 542h1v1h-1zM20 542h1v1h-1zM31 542h1v1h-1zM42 542h1v1h-1zM53 542h1v1h-1zM64 542h1v1h-1zM75 542h1v1h-1zM86 542h1v1h-1zM97 542h1v1h-1zM108 542h1v1h-1zM119 542h1v1h-1zM130 542h1v1h-1zM142 542h1v1h-1zM153 542h1v1h-1zM164 542h1v1h-1zM175 542h1v1h-1zM186 542h1v1h-1zM197 542h1v1h-1zM208 542h1v1h-1zM219 542h1v1h-1zM230 542h1v1h-1zM241 542h1v1h-1zM253 542h1v1h-1zM264 542h1v1h-1zM275 542h1v1h-1zM286 542h1v1h-1zM297 542h1v1h-1zM308 542h1v1h-1zM319 542h1v1h-1zM330 542h1v1h-1zM341 542h1v1h-1zM352 542h1v1h-1zM363 542h1v1h-1zM375 542h1v1h-1zM386 542h1v1h-1zM397 542h1v1h-1zM408 542h1v1h-1zM419 542h1v1h-1zM430 542h1v1h-1zM441 542h1v1h-1zM452 542h1v1h-1zM463 542h1v1h-1zM474 542h1v1h-1zM485 542h1v1h-1zM497 542h1v1h-1zM508 542h1v1h-1zM519 542h1v1h-1zM530 542h1v1h-1zM541 542h1v1h-1zM552 542h1v1h-1zM563 542h1v1h-1zM574 542h1v1h-1zM585 542h1v1h-1zM596 542h1v1h-1zM608 542h1v1h-1zM619 542h1v1h-1zM8 553h1v1h-1zM20 553h1v1h-1zM31 553h1v1h-1zM42 553h1v1h-1zM53 553h1v1h-1zM64 553h1v1h-1zM75 553h1v1h-1zM86 553h1v1h-1zM97 553h1v1h-1zM108 553h1v1h-1zM119 553h1v1h-1zM130 553h1v1h-1zM142 553h1v1h-1zM153 553h1v1h-1zM164 553h1v1h-1zM175 553h1v1h-1zM186 553h1v1h-1zM197 553h1v1h-1zM208 553h1v1h-1zM219 553h1v1h-1zM230 553h1v1h-1zM241 553h1v1h-1zM253 553h1v1h-1zM264 553h1v1h-1zM275 553h1v1h-1zM286 553h1v1h-1zM297 553h1v1h-1zM308 553h1v1h-1zM319 553h1v1h-1zM330 553h1v1h-1zM341 553h1v1h-1zM352 553h1v1h-1zM363 553h1v1h-1zM375 553h1v1h-1zM386 553h1v1h-1zM397 553h1v1h-1zM408 553h1v1h-1zM419 553h1v1h-1zM430 553h1v1h-1zM441 553h1v1h-1zM452 553h1v1h-1zM463 553h1v1h-1zM474 553h1v1h-1zM485 553h1v1h-1zM497 553h1v1h-1zM508 553h1v1h-1zM519 553h1v1h-1zM530 553h1v1h-1zM541 553h1v1h-1zM552 553h1v1h-1zM563 553h1v1h-1zM574 553h1v1h-1zM585 553h1v1h-1zM596 553h1v1h-1zM608 553h1v1h-1zM619 553h1v1h-1zM8 564h1v1h-1zM20 564h1v1h-1zM31 564h1v1h-1zM42 564h1v1h-1zM53 564h1v1h-1zM64 564h1v1h-1zM75 564h1v1h-1zM86 564h1v1h-1zM97 564h1v1h-1zM108 564h1v1h-1zM119 564h1v1h-1zM130 564h1v1h-1zM142 564h1v1h-1zM153 564h1v1h-1zM164 564h1v1h-1zM175 564h1v1h-1zM186 564h1v1h-1zM197 564h1v1h-1zM208 564h1v1h-1zM219 564h1v1h-1zM230 564h1v1h-1zM241 564h1v1h-1zM253 564h1v1h-1zM264 564h1v1h-1zM275 564h1v1h-1zM286 564h1v1h-1zM297 564h1v1h-1zM308 564h1v1h-1zM319 564h1v1h-1zM330 564h1v1h-1zM341 564h1v1h-1zM352 564h1v1h-1zM363 564h1v1h-1zM375 564h1v1h-1zM386 564h1v1h-1zM397 564h1v1h-1zM408 564h1v1h-1zM419 564h1v1h-1zM430 564h1v1h-1zM441 564h1v1h-1zM452 564h1v1h-1zM463 564h1v1h-1zM474 564h1v1h-1zM485 564h1v1h-1zM497 564h1v1h-1zM508 564h1v1h-1zM519 564h1v1h-1zM530 564h1v1h-1zM541 564h1v1h-1zM552 564h1v1h-1zM563 564h1v1h-1zM574 564h1v1h-1zM585 564h1v1h-1zM596 564h1v1h-1zM608 564h1v1h-1zM619 564h1v1h-1zM8 575h1v1h-1zM20 575h1v1h-1zM31 575h1v1h-1zM42 575h1v1h-1zM53 575h1v1h-1zM64 575h1v1h-1zM75 575h1v1h-1zM86 575h1v1h-1zM97 575h1v1h-1zM108 575h1v1h-1zM119 575h1v1h-1zM130 575h1v1h-1zM142 575h1v1h-1zM153 575h1v1h-1zM164 575h1v1h-1zM175 575h1v1h-1zM186 575h1v1h-1zM197 575h1v1h-1zM208 575h1v1h-1zM219 575h1v1h-1zM230 575h1v1h-1zM241 575h1v1h-1zM253 575h1v1h-1zM264 575h1v1h-1zM275 575h1v1h-1zM286 575h1v1h-1zM297 575h1v1h-1zM308 575h1v1h-1zM319 575h1v1h-1zM330 575h1v1h-1zM341 575h1v1h-1zM352 575h1v1h-1zM363 575h1v1h-1zM375 575h1v1h-1zM386 575h1v1h-1zM397 575h1v1h-1zM408 575h1v1h-1zM419 575h1v1h-1zM430 575h1v1h-1zM441 575h1v1h-1zM452 575h1v1h-1zM463 575h1v1h-1zM474 575h1v1h-1zM485 575h1v1h-1zM497 575h1v1h-1zM508 575h1v1h-1zM519 575h1v1h-1zM530 575h1v1h-1zM541 575h1v1h-1zM552 575h1v1h-1zM563 575h1v1h-1zM574 575h1v1h-1zM585 575h1v1h-1zM596 575h1v1h-1zM608 575h1v1h-1zM619 575h1v1h-1zM8 586h1v1h-1zM20 586h1v1h-1zM31 586h1v1h-1zM42 586h1v1h-1zM53 586h1v1h-1zM64 586h1v1h-1zM75 586h1v1h-1zM86 586h1v1h-1zM97 586h1v1h-1zM108 586h1v1h-1zM119 586h1v1h-1zM130 586h1v1h-1zM142 586h1v1h-1zM153 586h1v1h-1zM164 586h1v1h-1zM175 586h1v1h-1zM186 586h1v1h-1zM197 586h1v1h-1zM208 586h1v1h-1zM219 586h1v1h-1zM230 586h1v1h-1zM241 586h1v1h-1zM253 586h1v1h-1zM264 586h1v1h-1zM275 586h1v1h-1zM286 586h1v1h-1zM297 586h1v1h-1zM308 586h1v1h-1zM319 586h1v1h-1zM330 586h1v1h-1zM341 586h1v1h-1zM352 586h1v1h-1zM363 586h1v1h-1zM375 586h1v1h-1zM386 586h1v1h-1zM397 586h1v1h-1zM408 586h1v1h-1zM419 586h1v1h-1zM430 586h1v1h-1zM441 586h1v1h-1zM452 586h1v1h-1zM463 586h1v1h-1zM474 586h1v1h-1zM485 586h1v1h-1zM497 586h1v1h-1zM508 586h1v1h-1zM519 586h1v1h-1zM530 586h1v1h-1zM541 586h1v1h-1zM552 586h1v1h-1zM563 586h1v1h-1zM574 586h1v1h-1zM585 586h1v1h-1zM596 586h1v1h-1zM608 586h1v1h-1zM619 586h1v1h-1zM8 597h1v1h-1zM20 597h1v1h-1zM31 597h1v1h-1zM42 597h1v1h-1zM53 597h1v1h-1zM64 597h1v1h-1zM75 597h1v1h-1zM86 597h1v1h-1zM97 597h1v1h-1zM108 597h1v1h-1zM119 597h1v1h-1zM130 597h1v1h-1zM142 597h1v1h-1zM153 597h1v1h-1zM164 597h1v1h-1zM175 597h1v1h-1zM186 597h1v1h-1zM197 597h1v1h-1zM208 597h1v1h-1zM219 597h1v1h-1zM230 597h1v1h-1zM241 597h1v1h-1zM253 597h1v1h-1zM264 597h1v1h-1zM275 597h1v1h-1zM286 597h1v1h-1zM297 597h1v1h-1zM308 597h1v1h-1zM319 597h1v1h-1zM330 597h1v1h-1zM341 597h1v1h-1zM352 597h1v1h-1zM363 597h1v1h-1zM375 597h1v1h-1zM386 597h1v1h-1zM397 597h1v1h-1zM408 597h1v1h-1zM419 597h1v1h-1zM430 597h1v1h-1zM441 597h1v1h-1zM452 597h1v1h-1zM463 597h1v1h-1zM474 597h1v1h-1zM485 597h1v1h-1zM497 597h1v1h-1zM508 597h1v1h-1zM519 597h1v1h-1zM530 597h1v1h-1zM541 597h1v1h-1zM552 597h1v1h-1zM563 597h1v1h-1zM574 597h1v1h-1zM585 597h1v1h-1zM596 597h1v1h-1zM608 597h1v1h-1zM619 597h1v1h-1zM8 608h1v1h-1zM20 608h1v1h-1zM31 608h1v1h-1zM42 608h1v1h-1zM53 608h1v1h-1zM64 608h1v1h-1zM75 608h1v1h-1zM86 608h1v1h-1zM97 608h1v1h-1zM108 608h1v1h-1zM119 608h1v1h-1zM130 608h1v1h-1zM142 608h1v1h-1zM153 608h1v1h-1zM164 608h1v1h-1zM175 608h1v1h-1zM186 608h1v1h-1zM197 608h1v1h-1zM208 608h1v1h-1zM219 608h1v1h-1zM230 608h1v1h-1zM241 608h1v1h-1zM253 608h1v1h-1zM264 608h1v1h-1zM275 608h1v1h-1zM286 608h1v1h-1zM297 608h1v1h-1zM308 608h1v1h-1zM319 608h1v1h-1zM330 608h1v1h-1zM341 608h1v1h-1zM352 608h1v1h-1zM363 608h1v1h-1zM375 608h1v1h-1zM386 608h1v1h-1zM397 608h1v1h-1zM408 608h1v1h-1zM419 608h1v1h-1zM430 608h1v1h-1zM441 608h1v1h-1zM452 608h1v1h-1zM463 608h1v1h-1zM474 608h1v1h-1zM485 608h1v1h-1zM497 608h1v1h-1zM508 608h1v1h-1zM519 608h1v1h-1zM530 608h1v1h-1zM541 608h1v1h-1zM552 608h1v1h-1zM563 608h1v1h-1zM574 608h1v1h-1zM585 608h1v1h-1zM596 608h1v1h-1zM608 608h1v1h-1zM619 608h1v1h-1zM8 619h1v1h-1zM20 619h1v1h-1zM31 619h1v1h-1zM42 619h1v1h-1zM53 619h1v1h-1zM64 619h1v1h-1zM75 619h1v1h-1zM86 619h1v1h-1zM97 619h1v1h-1zM108 619h1v1h-1zM119 619h1v1h-1zM130 619h1v1h-1zM142 619h1v1h-1zM153 619h1v1h-1zM164 619h1v1h-1zM175 619h1v1h-1zM186 619h1v1h-1zM197 619h1v1h-1zM208 619h1v1h-1zM219 619h1v1h-1zM230 619h1v1h-1zM241 619h1v1h-1zM253 619h1v1h-1zM264 619h1v1h-1zM275 619h1v1h-1zM286 619h1v1h-1zM297 619h1v1h-1zM308 619h1v1h-1zM319 619h1v1h-1zM330 619h1v1h-1zM341 619h1v1h-1zM352 619h1v1h-1zM363 619h1v1h-1zM375 619h1v1h-1zM386 619h1v1h-1zM397 619h1v1h-1zM408 619h1v1h-1zM419 619h1v1h-1zM430 619h1v1h-1zM441 619h1v1h-1zM452 619h1v1h-1zM463 619h1v1h-1zM474 619h1v1h-1zM485 619h1v1h-1zM497 619h1v1h-1zM508 619h1v1h-1zM519 619h1v1h-1zM530 619h1v1h-1zM541 619h1v1h-1zM552 619h1v1h-1zM563 619h1v1h-1zM574 619h1v1h-1zM585 619h1v1h-1zM596 619h1v1h-1zM608 619h1v1h-1zM619 619h1v1h-1zM8 630h1v1h-1zM20 630h1v1h-1zM31 630h1v1h-1zM42 630h1v1h-1zM53 630h1v1h-1zM64 630h1v1h-1zM75 630h1v1h-1zM86 630h1v1h-1zM97 630h1v1h-1zM108 630h1v1h-1zM119 630h1v1h-1zM130 630h1v1h-1zM142 630h1v1h-1zM153 630h1v1h-1zM164 630h1v1h-1zM175 630h1v1h-1zM186 630h1v1h-1zM197 630h1v1h-1zM208 630h1v1h-1zM219 630h1v1h-1zM230 630h1v1h-1zM241 630h1v1h-1zM253 630h1v1h-1zM264 630h1v1h-1zM275 630h1v1h-1zM286 630h1v1h-1zM297 630h1v1h-1zM308 630h1v1h-1zM319 630h1v1h-1zM330 630h1v1h-1zM341 630h1v1h-1zM352 630h1v1h-1zM363 630h1v1h-1zM375 630h1v1h-1zM386 630h1v1h-1zM397 630h1v1h-1zM408 630h1v1h-1zM419 630h1v1h-1zM430 630h1v1h-1zM441 630h1v1h-1zM452 630h1v1h-1zM463 630h1v1h-1zM474 630h1v1h-1zM485 630h1v1h-1zM497 630h1v1h-1zM508 630h1v1h-1zM519 630h1v1h-1zM530 630h1v1h-1zM541 630h1v1h-1zM552 630h1v1h-1zM563 630h1v1h-1zM574 630h1v1h-1zM585 630h1v1h-1zM596 630h1v1h-1zM608 630h1v1h-1zM619 630h1v1h-1zM8 641h1v1h-1zM20 641h1v1h-1zM31 641h1v1h-1zM42 641h1v1h-1zM53 641h1v1h-1zM64 641h1v1h-1zM75 641h1v1h-1zM86 641h1v1h-1zM97 641h1v1h-1zM108 641h1v1h-1zM119 641h1v1h-1zM130 641h1v1h-1zM142 641h1v1h-1zM153 641h1v1h-1zM164 641h1v1h-1zM175 641h1v1h-1zM186 641h1v1h-1zM197 641h1v1h-1zM208 641h1v1h-1zM219 641h1v1h-1zM230 641h1v1h-1zM241 641h1v1h-1zM253 641h1v1h-1zM264 641h1v1h-1zM275 641h1v1h-1zM286 641h1v1h-1zM297 641h1v1h-1zM308 641h1v1h-1zM319 641h1v1h-1zM330 641h1v1h-1zM341 641h1v1h-1zM352 641h1v1h-1zM363 641h1v1h-1zM375 641h1v1h-1zM386 641h1v1h-1zM397 641h1v1h-1zM408 641h1v1h-1zM419 641h1v1h-1zM430 641h1v1h-1zM441 641h1v1h-1zM452 641h1v1h-1zM463 641h1v1h-1zM474 641h1v1h-1zM485 641h1v1h-1zM497 641h1v1h-1zM508 641h1v1h-1zM519 641h1v1h-1zM530 641h1v1h-1zM541 641h1v1h-1zM552 641h1v1h-1zM563 641h1v1h-1zM574 641h1v1h-1zM585 641h1v1h-1zM596 641h1v1h-1zM608 641h1v1h-1zM619 641h1v1h-1zM8 653h1v1h-1zM20 653h1v1h-1zM31 653h1v1h-1zM42 653h1v1h-1zM53 653h1v1h-1zM64 653h1v1h-1zM75 653h1v1h-1zM86 653h1v1h-1zM97 653h1v1h-1zM108 653h1v1h-1zM119 653h1v1h-1zM130 653h1v1h-1zM142 653h1v1h-1zM153 653h1v1h-1zM164 653h1v1h-1zM175 653h1v1h-1zM186 653h1v1h-1zM197 653h1v1h-1zM208 653h1v1h-1zM219 653h1v1h-1zM230 653h1v1h-1zM241 653h1v1h-1zM253 653h1v1h-1zM264 653h1v1h-1zM275 653h1v1h-1zM286 653h1v1h-1zM297 653h1v1h-1zM308 653h1v1h-1zM319 653h1v1h-1zM330 653h1v1h-1zM341 653h1v1h-1zM352 653h1v1h-1zM363 653h1v1h-1zM375 653h1v1h-1zM386 653h1v1h-1zM397 653h1v1h-1zM408 653h1v1h-1zM419 653h1v1h-1zM430 653h1v1h-1zM441 653h1v1h-1zM452 653h1v1h-1zM463 653h1v1h-1zM474 653h1v1h-1zM485 653h1v1h-1zM497 653h1v1h-1zM508 653h1v1h-1zM519 653h1v1h-1zM530 653h1v1h-1zM541 653h1v1h-1zM552 653h1v1h-1zM563 653h1v1h-1zM574 653h1v1h-1zM585 653h1v1h-1zM596 653h1v1h-1zM608 653h1v1h-1zM619 653h1v1h-1zM8 664h1v1h-1zM20 664h1v1h-1zM31 664h1v1h-1zM42 664h1v1h-1zM53 664h1v1h-1zM64 664h1v1h-1zM75 664h1v1h-1zM86 664h1v1h-1zM97 664h1v1h-1zM108 664h1v1h-1zM119 664h1v1h-1zM130 664h1v1h-1zM142 664h1v1h-1zM153 664h1v1h-1zM164 664h1v1h-1zM175 664h1v1h-1zM186 664h1v1h-1zM197 664h1v1h-1zM208 664h1v1h-1zM219 664h1v1h-1zM230 664h1v1h-1zM241 664h1v1h-1zM253 664h1v1h-1zM264 664h1v1h-1zM275 664h1v1h-1zM286 664h1v1h-1zM297 664h1v1h-1zM308 664h1v1h-1zM319 664h1v1h-1zM330 664h1v1h-1zM341 664h1v1h-1zM352 664h1v1h-1zM363 664h1v1h-1zM375 664h1v1h-1zM386 664h1v1h-1zM397 664h1v1h-1zM408 664h1v1h-1zM419 664h1v1h-1zM430 664h1v1h-1zM441 664h1v1h-1zM452 664h1v1h-1zM463 664h1v1h-1zM474 664h1v1h-1zM485 664h1v1h-1zM497 664h1v1h-1zM508 664h1v1h-1zM519 664h1v1h-1zM530 664h1v1h-1zM541 664h1v1h-1zM552 664h1v1h-1zM563 664h1v1h-1zM574 664h1v1h-1zM585 664h1v1h-1zM596 664h1v1h-1zM608 664h1v1h-1zM619 664h1v1h-1zM8 675h1v1h-1zM20 675h1v1h-1zM31 675h1v1h-1zM42 675h1v1h-1zM53 675h1v1h-1zM64 675h1v1h-1zM75 675h1v1h-1zM86 675h1v1h-1zM97 675h1v1h-1zM108 675h1v1h-1zM119 675h1v1h-1zM130 675h1v1h-1zM142 675h1v1h-1zM153 675h1v1h-1zM164 675h1v1h-1zM175 675h1v1h-1zM186 675h1v1h-1zM197 675h1v1h-1zM208 675h1v1h-1zM219 675h1v1h-1zM230 675h1v1h-1zM241 675h1v1h-1zM253 675h1v1h-1zM264 675h1v1h-1zM275 675h1v1h-1zM286 675h1v1h-1zM297 675h1v1h-1zM308 675h1v1h-1zM319 675h1v1h-1zM330 675h1v1h-1zM341 675h1v1h-1zM352 675h1v1h-1zM363 675h1v1h-1zM375 675h1v1h-1zM386 675h1v1h-1zM397 675h1v1h-1zM408 675h1v1h-1zM419 675h1v1h-1zM430 675h1v1h-1zM441 675h1v1h-1zM452 675h1v1h-1zM463 675h1v1h-1zM474 675h1v1h-1zM485 675h1v1h-1zM497 675h1v1h-1zM508 675h1v1h-1zM519 675h1v1h-1zM530 675h1v1h-1zM541 675h1v1h-1zM552 675h1v1h-1zM563 675h1v1h-1zM574 675h1v1h-1zM585 675h1v1h-1zM596 675h1v1h-1zM608 675h1v1h-1zM619 675h1v1h-1zM8 686h1v1h-1zM20 686h1v1h-1zM31 686h1v1h-1zM42 686h1v1h-1zM53 686h1v1h-1zM64 686h1v1h-1zM75 686h1v1h-1zM86 686h1v1h-1zM97 686h1v1h-1zM108 686h1v1h-1zM119 686h1v1h-1zM130 686h1v1h-1zM142 686h1v1h-1zM153 686h1v1h-1zM164 686h1v1h-1zM175 686h1v1h-1zM186 686h1v1h-1zM197 686h1v1h-1zM208 686h1v1h-1zM219 686h1v1h-1zM230 686h1v1h-1zM241 686h1v1h-1zM253 686h1v1h-1zM264 686h1v1h-1zM275 686h1v1h-1zM286 686h1v1h-1zM297 686h1v1h-1zM308 686h1v1h-1zM319 686h1v1h-1zM330 686h1v1h-1zM341 686h1v1h-1zM352 686h1v1h-1zM363 686h1v1h-1zM375 686h1v1h-1zM386 686h1v1h-1zM397 686h1v1h-1zM408 686h1v1h-1zM419 686h1v1h-1zM430 686h1v1h-1zM441 686h1v1h-1zM452 686h1v1h-1zM463 686h1v1h-1zM474 686h1v1h-1zM485 686h1v1h-1zM497 686h1v1h-1zM508 686h1v1h-1zM519 686h1v1h-1zM530 686h1v1h-1zM541 686h1v1h-1zM552 686h1v1h-1zM563 686h1v1h-1zM574 686h1v1h-1zM585 686h1v1h-1zM596 686h1v1h-1zM608 686h1v1h-1zM619 686h1v1h-1zM8 697h1v1h-1zM20 697h1v1h-1zM31 697h1v1h-1zM42 697h1v1h-1zM53 697h1v1h-1zM64 697h1v1h-1zM75 697h1v1h-1zM86 697h1v1h-1zM97 697h1v1h-1zM108 697h1v1h-1zM119 697h1v1h-1zM130 697h1v1h-1zM142 697h1v1h-1zM153 697h1v1h-1zM164 697h1v1h-1zM175 697h1v1h-1zM186 697h1v1h-1zM197 697h1v1h-1zM208 697h1v1h-1zM219 697h1v1h-1zM230 697h1v1h-1zM241 697h1v1h-1zM253 697h1v1h-1zM264 697h1v1h-1zM275 697h1v1h-1zM286 697h1v1h-1zM297 697h1v1h-1zM308 697h1v1h-1zM319 697h1v1h-1zM330 697h1v1h-1zM341 697h1v1h-1zM352 697h1v1h-1zM363 697h1v1h-1zM375 697h1v1h-1zM386 697h1v1h-1zM397 697h1v1h-1zM408 697h1v1h-1zM419 697h1v1h-1zM430 697h1v1h-1zM441 697h1v1h-1zM452 697h1v1h-1zM463 697h1v1h-1zM474 697h1v1h-1zM485 697h1v1h-1zM497 697h1v1h-1zM508 697h1v1h-1zM519 697h1v1h-1zM530 697h1v1h-1zM541 697h1v1h-1zM552 697h1v1h-1zM563 697h1v1h-1zM574 697h1v1h-1zM585 697h1v1h-1zM596 697h1v1h-1zM608 697h1v1h-1zM619 697h1v1h-1zM8 708h1v1h-1zM20 708h1v1h-1zM31 708h1v1h-1zM42 708h1v1h-1zM53 708h1v1h-1zM64 708h1v1h-1zM75 708h1v1h-1zM86 708h1v1h-1zM97 708h1v1h-1zM108 708h1v1h-1zM119 708h1v1h-1zM130 708h1v1h-1zM142 708h1v1h-1zM153 708h1v1h-1zM164 708h1v1h-1zM175 708h1v1h-1zM186 708h1v1h-1zM197 708h1v1h-1zM208 708h1v1h-1zM219 708h1v1h-1zM230 708h1v1h-1zM241 708h1v1h-1zM253 708h1v1h-1zM264 708h1v1h-1zM275 708h1v1h-1zM286 708h1v1h-1zM297 708h1v1h-1zM308 708h1v1h-1zM319 708h1v1h-1zM330 708h1v1h-1zM341 708h1v1h-1zM352 708h1v1h-1zM363 708h1v1h-1zM375 708h1v1h-1zM386 708h1v1h-1zM397 708h1v1h-1zM408 708h1v1h-1zM419 708h1v1h-1zM430 708h1v1h-1zM441 708h1v1h-1zM452 708h1v1h-1zM463 708h1v1h-1zM474 708h1v1h-1zM485 708h1v1h-1zM497 708h1v1h-1zM508 708h1v1h-1zM519 708h1v1h-1zM530 708h1v1h-1zM541 708h1v1h-1zM552 708h1v1h-1zM563 708h1v1h-1zM574 708h1v1h-1zM585 708h1v1h-1zM596 708h1v1h-1zM608 708h1v1h-1zM619 708h1v1h-1zM8 719h1v1h-1zM20 719h1v1h-1zM31 719h1v1h-1zM42 719h1v1h-1zM53 719h1v1h-1zM64 719h1v1h-1zM75 719h1v1h-1zM86 719h1v1h-1zM97 719h1v1h-1zM108 719h1v1h-1zM119 719h1v1h-1zM130 719h1v1h-1zM142 719h1v1h-1zM153 719h1v1h-1zM164 719h1v1h-1zM175 719h1v1h-1zM186 719h1v1h-1zM197 719h1v1h-1zM208 719h1v1h-1zM219 719h1v1h-1zM230 719h1v1h-1zM241 719h1v1h-1zM253 719h1v1h-1zM264 719h1v1h-1zM275 719h1v1h-1zM286 719h1v1h-1zM297 719h1v1h-1zM308 719h1v1h-1zM319 719h1v1h-1zM330 719h1v1h-1zM341 719h1v1h-1zM352 719h1v1h-1zM363 719h1v1h-1zM375 719h1v1h-1zM386 719h1v1h-1zM397 719h1v1h-1zM408 719h1v1h-1zM419 719h1v1h-1zM430 719h1v1h-1zM441 719h1v1h-1zM452 719h1v1h-1zM463 719h1v1h-1zM474 719h1v1h-1zM485 719h1v1h-1zM497 719h1v1h-1zM508 719h1v1h-1zM519 719h1v1h-1zM530 719h1v1h-1zM541 719h1v1h-1zM552 719h1v1h-1zM563 719h1v1h-1zM574 719h1v1h-1zM585 719h1v1h-1zM596 719h1v1h-1zM608 719h1v1h-1zM619 719h1v1h-1zM8 730h1v1h-1zM20 730h1v1h-1zM31 730h1v1h-1zM42 730h1v1h-1zM53 730h1v1h-1zM64 730h1v1h-1zM75 730h1v1h-1zM86 730h1v1h-1zM97 730h1v1h-1zM108 730h1v1h-1zM119 730h1v1h-1zM130 730h1v1h-1zM142 730h1v1h-1zM153 730h1v1h-1zM164 730h1v1h-1zM175 730h1v1h-1zM186 730h1v1h-1zM197 730h1v1h-1zM208 730h1v1h-1zM219 730h1v1h-1zM230 730h1v1h-1zM241 730h1v1h-1zM253 730h1v1h-1zM264 730h1v1h-1zM275 730h1v1h-1zM286 730h1v1h-1zM297 730h1v1h-1zM308 730h1v1h-1zM319 730h1v1h-1zM330 730h1v1h-1zM341 730h1v1h-1zM352 730h1v1h-1zM363 730h1v1h-1zM375 730h1v1h-1zM386 730h1v1h-1zM397 730h1v1h-1zM408 730h1v1h-1zM419 730h1v1h-1zM430 730h1v1h-1zM441 730h1v1h-1zM452 730h1v1h-1zM463 730h1v1h-1zM474 730h1v1h-1zM485 730h1v1h-1zM497 730h1v1h-1zM508 730h1v1h-1zM519 730h1v1h-1zM530 730h1v1h-1zM541 730h1v1h-1zM552 730h1v1h-1zM563 730h1v1h-1zM574 730h1v1h-1zM585 730h1v1h-1zM596 730h1v1h-1zM608 730h1v1h-1zM619 730h1v1h-1zM8 741h1v1h-1zM20 741h1v1h-1zM31 741h1v1h-1zM42 741h1v1h-1zM53 741h1v1h-1zM64 741h1v1h-1zM75 741h1v1h-1zM86 741h1v1h-1zM97 741h1v1h-1zM108 741h1v1h-1zM119 741h1v1h-1zM130 741h1v1h-1zM142 741h1v1h-1zM153 741h1v1h-1zM164 741h1v1h-1zM175 741h1v1h-1zM186 741h1v1h-1zM197 741h1v1h-1zM208 741h1v1h-1zM219 741h1v1h-1zM230 741h1v1h-1zM241 741h1v1h-1zM253 741h1v1h-1zM264 741h1v1h-1zM275 741h1v1h-1zM286 741h1v1h-1zM297 741h1v1h-1zM308 741h1v1h-1zM319 741h1v1h-1zM330 741h1v1h-1zM341 741h1v1h-1zM352 741h1v1h-1zM363 741h1v1h-1zM375 741h1v1h-1zM386 741h1v1h-1zM397 741h1v1h-1zM408 741h1v1h-1zM419 741h1v1h-1zM430 741h1v1h-1zM441 741h1v1h-1zM452 741h1v1h-1zM463 741h1v1h-1zM474 741h1v1h-1zM485 741h1v1h-1zM497 741h1v1h-1zM508 741h1v1h-1zM519 741h1v1h-1zM530 741h1v1h-1zM541 741h1v1h-1zM552 741h1v1h-1zM563 741h1v1h-1zM574 741h1v1h-1zM585 741h1v1h-1zM596 741h1v1h-1zM608 741h1v1h-1zM619 741h1v1h-1z" fill="#000"/><g shape-rendering="crispEdges"><rect x="297.5" y="287.5" width="155" height="177" fill="#ffffc0" stroke="#000080" stroke-width="1"/><path d="M361.5,287.5 V301.5 L366.5,306.5 H383.5 L388.5,301.5 V287.5" stroke="#000080" stroke-width="1" fill="none"/><path d="M29.5,265 L42.5,252.5 L42.5,277.5 L29.5,265" stroke="#0000ff" stroke-width="1" fill="none"/><rect x="42" y="265" width="14" height="1" fill="#0000ff"/><rect x="55" y="265" width="4" height="1" fill="#000080"/><circle cx="80.5" cy="264.5" r="22.3" stroke="#000080" stroke-width="1" fill="none"/><rect x="67" y="259" width="1" height="12" fill="#000080"/><rect x="89" y="265" width="12" height="1" fill="#000080"/><rect x="94" y="259" width="1" height="12" fill="#000080"/><rect x="102" y="265" width="5" height="1" fill="#000080"/><rect x="106" y="265" width="103" height="1" fill="#0000ff"/><rect x="275" y="265" width="284" height="1" fill="#0000ff"/><rect x="139" y="262" width="7" height="7" fill="#0000ff"/><rect x="460" y="262" width="7" height="7" fill="#0000ff"/><rect x="516" y="262" width="7" height="7" fill="#0000ff"/><rect x="142" y="265" width="1" height="13" fill="#0000ff"/><rect x="142" y="277" width="1" height="5" fill="#000080"/><rect x="134.5" y="281.5" width="15" height="45" stroke="#000080" fill="none"/><rect x="142" y="326" width="1" height="6" fill="#000080"/><rect x="142" y="331" width="1" height="23" fill="#0000ff"/><rect x="208" y="265" width="1" height="13" fill="#0000ff"/><rect x="208" y="277" width="1" height="5" fill="#000080"/><rect x="201.5" y="281.5" width="15" height="45" stroke="#000080" fill="none"/><rect x="208" y="326" width="1" height="6" fill="#000080"/><rect x="208" y="331" width="1" height="23" fill="#0000ff"/><rect x="119" y="353" width="36" height="1" fill="#0000ff"/><rect x="154" y="353" width="19" height="1" fill="#000080"/><rect x="172" y="342" width="1" height="23" fill="#000080"/><rect x="178" y="342" width="1" height="23" fill="#000080"/><rect x="178" y="353" width="20" height="1" fill="#000080"/><rect x="197" y="353" width="101" height="1" fill="#0000ff"/><rect x="139" y="350" width="7" height="7" fill="#0000ff"/><rect x="205" y="350" width="7" height="7" fill="#0000ff"/><rect x="208" y="353" width="1" height="23" fill="#0000ff"/><rect x="275" y="265" width="1" height="178" fill="#0000ff"/><rect x="275" y="442" width="23" height="1" fill="#0000ff"/><path d="M297.5,296.5 L284.5,309.5 L297.5,322.5" stroke="#0000ff" stroke-width="1" fill="none"/><rect x="452" y="309" width="12" height="1" fill="#0000ff"/><rect x="463" y="265" width="1" height="45" fill="#0000ff"/><rect x="519" y="265" width="1" height="24" fill="#0000ff"/><rect x="519" y="288" width="1" height="5" fill="#000080"/><rect x="511.5" y="292.5" width="15" height="45" stroke="#000080" fill="none"/><rect x="519" y="337" width="1" height="6" fill="#000080"/><rect x="519" y="342" width="1" height="12" fill="#0000ff"/><rect x="452" y="353" width="68" height="1" fill="#0000ff"/><rect x="460" y="350" width="7" height="7" fill="#0000ff"/><rect x="516" y="350" width="7" height="7" fill="#0000ff"/><rect x="452" y="398" width="12" height="1" fill="#0000ff"/><rect x="463" y="353" width="1" height="46" fill="#0000ff"/><rect x="519" y="353" width="1" height="21" fill="#0000ff"/><rect x="519" y="373" width="1" height="12" fill="#000080"/><rect x="508" y="384" width="24" height="1" fill="#000080"/><rect x="508" y="389" width="24" height="1" fill="#000080"/><rect x="519" y="389" width="1" height="12" fill="#000080"/><rect x="519" y="400" width="1" height="21" fill="#0000ff"/><path d="M507.5,420.5 L531.5,420.5 L519.5,432.5 L507.5,420.5" stroke="#0000ff" stroke-width="1" fill="none"/><rect x="554" y="265" width="5" height="1" fill="#000080"/><circle cx="580.5" cy="264.5" r="22" stroke="#000080" stroke-width="1" fill="none"/><rect x="561" y="265" width="12" height="1" fill="#000080"/><rect x="566" y="259" width="1" height="12" fill="#000080"/><rect x="594" y="259" width="1" height="12" fill="#000080"/><rect x="602" y="265" width="7" height="1" fill="#000080"/><path d="M608.5,252.5 L620.5,265 L608.5,277.5 L608.5,252.5" stroke="#0000ff" stroke-width="1" fill="none"/><rect x="450.5" y="440.5" width="4" height="4" stroke="#0000ff" fill="#ffffff"/><rect x="253" y="398" width="45" height="1" fill="#0000ff"/><rect x="253" y="398" width="1" height="34" fill="#0000ff"/><path d="M243.5,431.5 L262.5,431.5 L262.5,463.5 L253,472.5 L243.5,463.5 L243.5,431.5" stroke="#0000ff" stroke-width="1" fill="none"/><rect x="142" y="353" width="1" height="47" fill="#0000ff"/><rect x="142" y="399" width="1" height="13" fill="#000080"/><circle cx="141.5" cy="424.9" r="21.6" stroke="#000080" stroke-width="1" fill="none"/><g shape-rendering="geometricPrecision"><circle cx="141.5" cy="414" r="2.5" stroke="#000080" stroke-width="1" fill="none"/><circle cx="155.5" cy="422.5" r="2.5" stroke="#000080" stroke-width="1" fill="none"/></g><path d="M153.5,425.5 L142.5,438.5" stroke="#000080" stroke-width="1" fill="none"/><rect x="142" y="438" width="1" height="13" fill="#000080"/><rect x="142" y="450" width="1" height="15" fill="#0000ff"/><path d="M130.5,464.5 L155.5,464.5 L143,477.5 L130.5,464.5" stroke="#0000ff" stroke-width="1" fill="none"/><rect x="75" y="409" width="35" height="1" fill="#0000ff"/><rect x="109" y="409" width="13" height="1" fill="#000080"/><path d="M121.5,409.5 L124.5,411.5" stroke="#000080" stroke-width="1" fill="none"/><rect x="75" y="409" width="1" height="6" fill="#000080"/><rect x="108" y="414" width="7" height="1" fill="#000080"/><rect x="111" y="411" width="1" height="7" fill="#000080"/><rect x="108" y="436" width="7" height="1" fill="#000080"/><path d="M124.5,439.5 L118.5,442.5" stroke="#000080" stroke-width="1" fill="none"/><rect x="108" y="442" width="11" height="1" fill="#000080"/><rect x="108" y="442" width="1" height="23" fill="#0000ff"/><path d="M96.5,464.5 L121.5,464.5 L109,477.5 L96.5,464.5" stroke="#0000ff" stroke-width="1" fill="none"/><circle cx="75" cy="436.2" r="21.7" stroke="#000080" stroke-width="1" fill="none"/><rect x="69" y="423" width="13" height="1" fill="#000080"/><rect x="75" y="417" width="1" height="12" fill="#000080"/><rect x="69" y="450" width="13" height="1" fill="#000080"/><rect x="75" y="458" width="1" height="7" fill="#000080"/><path d="M63.5,464.5 L88.5,464.5 L76,477.5 L63.5,464.5" stroke="#0000ff" stroke-width="1" fill="none"/><g font-family="Liberation Sans" font-weight="700" fill="#000"><text x="105.1" y="251" font-size="16.8" text-anchor="start">V3</text><text x="70.1" y="301.5" font-size="16.8" text-anchor="start">5.5</text><text x="110.1" y="298" font-size="16.8" text-anchor="start">R3</text><text x="104.1" y="323" font-size="16.8" text-anchor="start">10k</text><text x="219.1" y="298" font-size="16.8" text-anchor="start">R2</text><text x="219.1" y="323" font-size="16.8" text-anchor="start">10k</text><text x="165.1" y="338" font-size="16.8" text-anchor="start">C1</text><text x="166.6" y="378.5" font-size="16.8" text-anchor="start">1n</text><text x="99.1" y="358.5" font-size="16.8" text-anchor="start">S1</text><text x="302.1" y="315" font-size="16.8" text-anchor="start">GND</text><text x="365.6" y="337" font-size="16.8" text-anchor="start">U1</text><text x="487.1" y="306.5" font-size="16.8" text-anchor="start">R1</text><text x="472.1" y="331.5" font-size="16.8" text-anchor="start">560k</text><text x="536.1" y="252.5" font-size="16.8" text-anchor="start">V1</text><text x="571.1" y="307.5" font-size="16.8" text-anchor="start">5V</text><text x="524.1" y="375" font-size="16.8" text-anchor="start">C2</text><text x="524.1" y="409" font-size="16.8" text-anchor="start">100n</text><text x="302.1" y="359" font-size="16.8" text-anchor="start">TRIG</text><text x="302.1" y="404" font-size="16.8" text-anchor="start">OUT</text><text x="302.1" y="448" font-size="16.8" text-anchor="start">RST</text><text x="350.6" y="426" font-size="16.8" text-anchor="start">NE555</text><text x="28.1" y="426.5" font-size="16.8" text-anchor="start">V2</text><text x="108.1" y="395.5" font-size="16.8" text-anchor="start">NSI</text><text x="157.1" y="457.5" font-size="16.8" text-anchor="start">S1</text><text x="447" y="315" font-size="16.8" text-anchor="end">Vcc</text><text x="447" y="358.5" font-size="16.8" text-anchor="end">DIS</text><text x="447" y="403.5" font-size="16.8" text-anchor="end">THRS</text><text x="447" y="448" font-size="16.8" text-anchor="end">CV</text><text x="474" y="459" font-size="16.8" text-anchor="start" textLength="112" lengthAdjust="spacing">.tran 0 500m 0</text><text x="147.5" y="509" font-size="16.8" text-anchor="start" textLength="357.5" lengthAdjust="spacing">.model NSI SW(Ron=1 Roff=70k Vt=1 Vh=0.1)</text><text x="45" y="541" font-size="16.8" text-anchor="start" textLength="250" lengthAdjust="spacing">PULSE(0 5.2 0 1n 1n 30m 100m)</text><text x="0" y="0" transform="translate(213,395) rotate(-90)" font-size="16.8" text-anchor="start">S2</text><text x="0" y="0" transform="translate(257.5,459) rotate(-90)" font-size="16.8" text-anchor="start">out</text></g></g><g shape-rendering="crispEdges"><path d="M746 48h1v1h-1zM746 52h1v3h-1zM746 58h1v3h-1zM746 64h1v3h-1zM746 70h1v3h-1zM746 76h1v3h-1zM746 82h1v3h-1zM746 88h1v3h-1zM746 94h1v3h-1zM746 100h1v3h-1zM746 106h1v3h-1zM746 112h1v3h-1zM746 118h1v3h-1zM746 124h1v3h-1zM746 130h1v3h-1zM746 136h1v3h-1zM746 142h1v3h-1zM746 148h1v3h-1zM746 154h1v3h-1zM746 160h1v3h-1zM746 166h1v3h-1zM746 172h1v3h-1zM746 178h1v3h-1zM746 184h1v3h-1zM746 190h1v3h-1zM746 196h1v3h-1zM746 202h1v3h-1zM746 208h1v3h-1zM746 214h1v3h-1zM746 220h1v3h-1zM746 226h1v3h-1zM746 232h1v3h-1zM746 238h1v3h-1zM746 244h1v3h-1zM746 250h1v3h-1zM746 256h1v3h-1zM746 262h1v3h-1zM746 268h1v3h-1zM746 274h1v3h-1zM746 280h1v3h-1zM746 286h1v3h-1zM746 292h1v3h-1zM746 298h1v3h-1zM746 304h1v3h-1zM746 310h1v3h-1zM746 316h1v3h-1zM746 322h1v3h-1zM746 328h1v3h-1zM746 334h1v3h-1zM746 340h1v3h-1zM746 346h1v3h-1zM746 352h1v3h-1zM746 358h1v3h-1zM746 364h1v3h-1zM746 370h1v3h-1zM746 376h1v3h-1zM746 382h1v3h-1zM746 388h1v3h-1zM746 394h1v3h-1zM746 400h1v3h-1zM746 406h1v3h-1zM746 412h1v3h-1zM746 418h1v3h-1zM746 424h1v3h-1zM746 430h1v3h-1zM746 436h1v3h-1zM746 442h1v3h-1zM746 448h1v3h-1zM746 454h1v3h-1zM746 460h1v3h-1zM746 466h1v3h-1zM746 472h1v3h-1zM746 478h1v3h-1zM746 484h1v3h-1zM746 490h1v3h-1zM746 496h1v3h-1zM746 502h1v3h-1zM746 508h1v3h-1zM746 514h1v3h-1zM746 520h1v3h-1zM746 526h1v3h-1zM746 532h1v3h-1zM746 538h1v3h-1zM746 544h1v3h-1zM746 550h1v3h-1zM746 556h1v3h-1zM746 562h1v3h-1zM746 568h1v3h-1zM746 574h1v3h-1zM746 580h1v3h-1zM746 586h1v3h-1zM746 592h1v3h-1zM746 598h1v3h-1zM746 604h1v3h-1zM746 610h1v3h-1zM746 616h1v3h-1zM746 622h1v3h-1zM746 628h1v3h-1zM746 634h1v3h-1zM746 640h1v3h-1zM746 646h1v3h-1zM746 652h1v3h-1zM746 658h1v3h-1zM746 664h1v3h-1zM746 670h1v3h-1zM746 676h1v3h-1zM746 682h1v3h-1zM746 688h1v3h-1zM746 694h1v3h-1zM746 700h1v3h-1zM746 706h1v3h-1zM746 712h1v3h-1zM746 718h1v3h-1zM746 724h1v1h-1zM831 48h1v1h-1zM831 52h1v3h-1zM831 58h1v3h-1zM831 64h1v3h-1zM831 70h1v3h-1zM831 76h1v3h-1zM831 82h1v3h-1zM831 88h1v3h-1zM831 94h1v3h-1zM831 100h1v3h-1zM831 106h1v3h-1zM831 112h1v3h-1zM831 118h1v3h-1zM831 124h1v3h-1zM831 130h1v3h-1zM831 136h1v3h-1zM831 142h1v3h-1zM831 148h1v3h-1zM831 154h1v3h-1zM831 160h1v3h-1zM831 166h1v3h-1zM831 172h1v3h-1zM831 178h1v3h-1zM831 184h1v3h-1zM831 190h1v3h-1zM831 196h1v3h-1zM831 202h1v3h-1zM831 208h1v3h-1zM831 214h1v3h-1zM831 220h1v3h-1zM831 226h1v3h-1zM831 232h1v3h-1zM831 238h1v3h-1zM831 244h1v3h-1zM831 250h1v3h-1zM831 256h1v3h-1zM831 262h1v3h-1zM831 268h1v3h-1zM831 274h1v3h-1zM831 280h1v3h-1zM831 286h1v3h-1zM831 292h1v3h-1zM831 298h1v3h-1zM831 304h1v3h-1zM831 310h1v3h-1zM831 316h1v3h-1zM831 322h1v3h-1zM831 328h1v3h-1zM831 334h1v3h-1zM831 340h1v3h-1zM831 346h1v3h-1zM831 352h1v3h-1zM831 358h1v3h-1zM831 364h1v3h-1zM831 370h1v3h-1zM831 376h1v3h-1zM831 382h1v3h-1zM831 388h1v3h-1zM831 394h1v3h-1zM831 400h1v3h-1zM831 406h1v3h-1zM831 412h1v3h-1zM831 418h1v3h-1zM831 424h1v3h-1zM831 430h1v3h-1zM831 436h1v3h-1zM831 442h1v3h-1zM831 448h1v3h-1zM831 454h1v3h-1zM831 460h1v3h-1zM831 466h1v3h-1zM831 472h1v3h-1zM831 478h1v3h-1zM831 484h1v3h-1zM831 490h1v3h-1zM831 496h1v3h-1zM831 502h1v3h-1zM831 508h1v3h-1zM831 514h1v3h-1zM831 520h1v3h-1zM831 526h1v3h-1zM831 532h1v3h-1zM831 538h1v3h-1zM831 544h1v3h-1zM831 550h1v3h-1zM831 556h1v3h-1zM831 562h1v3h-1zM831 568h1v3h-1zM831 574h1v3h-1zM831 580h1v3h-1zM831 586h1v3h-1zM831 592h1v3h-1zM831 598h1v3h-1zM831 604h1v3h-1zM831 610h1v3h-1zM831 616h1v3h-1zM831 622h1v3h-1zM831 628h1v3h-1zM831 634h1v3h-1zM831 640h1v3h-1zM831 646h1v3h-1zM831 652h1v3h-1zM831 658h1v3h-1zM831 664h1v3h-1zM831 670h1v3h-1zM831 676h1v3h-1zM831 682h1v3h-1zM831 688h1v3h-1zM831 694h1v3h-1zM831 700h1v3h-1zM831 706h1v3h-1zM831 712h1v3h-1zM831 718h1v3h-1zM831 724h1v1h-1zM917 48h1v1h-1zM917 52h1v3h-1zM917 58h1v3h-1zM917 64h1v3h-1zM917 70h1v3h-1zM917 76h1v3h-1zM917 82h1v3h-1zM917 88h1v3h-1zM917 94h1v3h-1zM917 100h1v3h-1zM917 106h1v3h-1zM917 112h1v3h-1zM917 118h1v3h-1zM917 124h1v3h-1zM917 130h1v3h-1zM917 136h1v3h-1zM917 142h1v3h-1zM917 148h1v3h-1zM917 154h1v3h-1zM917 160h1v3h-1zM917 166h1v3h-1zM917 172h1v3h-1zM917 178h1v3h-1zM917 184h1v3h-1zM917 190h1v3h-1zM917 196h1v3h-1zM917 202h1v3h-1zM917 208h1v3h-1zM917 214h1v3h-1zM917 220h1v3h-1zM917 226h1v3h-1zM917 232h1v3h-1zM917 238h1v3h-1zM917 244h1v3h-1zM917 250h1v3h-1zM917 256h1v3h-1zM917 262h1v3h-1zM917 268h1v3h-1zM917 274h1v3h-1zM917 280h1v3h-1zM917 286h1v3h-1zM917 292h1v3h-1zM917 298h1v3h-1zM917 304h1v3h-1zM917 310h1v3h-1zM917 316h1v3h-1zM917 322h1v3h-1zM917 328h1v3h-1zM917 334h1v3h-1zM917 340h1v3h-1zM917 346h1v3h-1zM917 352h1v3h-1zM917 358h1v3h-1zM917 364h1v3h-1zM917 370h1v3h-1zM917 376h1v3h-1zM917 382h1v3h-1zM917 388h1v3h-1zM917 394h1v3h-1zM917 400h1v3h-1zM917 406h1v3h-1zM917 412h1v3h-1zM917 418h1v3h-1zM917 424h1v3h-1zM917 430h1v3h-1zM917 436h1v3h-1zM917 442h1v3h-1zM917 448h1v3h-1zM917 454h1v3h-1zM917 460h1v3h-1zM917 466h1v3h-1zM917 472h1v3h-1zM917 478h1v3h-1zM917 484h1v3h-1zM917 490h1v3h-1zM917 496h1v3h-1zM917 502h1v3h-1zM917 508h1v3h-1zM917 514h1v3h-1zM917 520h1v3h-1zM917 526h1v3h-1zM917 532h1v3h-1zM917 538h1v3h-1zM917 544h1v3h-1zM917 550h1v3h-1zM917 556h1v3h-1zM917 562h1v3h-1zM917 568h1v3h-1zM917 574h1v3h-1zM917 580h1v3h-1zM917 586h1v3h-1zM917 592h1v3h-1zM917 598h1v3h-1zM917 604h1v3h-1zM917 610h1v3h-1zM917 616h1v3h-1zM917 622h1v3h-1zM917 628h1v3h-1zM917 634h1v3h-1zM917 640h1v3h-1zM917 646h1v3h-1zM917 652h1v3h-1zM917 658h1v3h-1zM917 664h1v3h-1zM917 670h1v3h-1zM917 676h1v3h-1zM917 682h1v3h-1zM917 688h1v3h-1zM917 694h1v3h-1zM917 700h1v3h-1zM917 706h1v3h-1zM917 712h1v3h-1zM917 718h1v3h-1zM917 724h1v1h-1zM1003 48h1v1h-1zM1003 52h1v3h-1zM1003 58h1v3h-1zM1003 64h1v3h-1zM1003 70h1v3h-1zM1003 76h1v3h-1zM1003 82h1v3h-1zM1003 88h1v3h-1zM1003 94h1v3h-1zM1003 100h1v3h-1zM1003 106h1v3h-1zM1003 112h1v3h-1zM1003 118h1v3h-1zM1003 124h1v3h-1zM1003 130h1v3h-1zM1003 136h1v3h-1zM1003 142h1v3h-1zM1003 148h1v3h-1zM1003 154h1v3h-1zM1003 160h1v3h-1zM1003 166h1v3h-1zM1003 172h1v3h-1zM1003 178h1v3h-1zM1003 184h1v3h-1zM1003 190h1v3h-1zM1003 196h1v3h-1zM1003 202h1v3h-1zM1003 208h1v3h-1zM1003 214h1v3h-1zM1003 220h1v3h-1zM1003 226h1v3h-1zM1003 232h1v3h-1zM1003 238h1v3h-1zM1003 244h1v3h-1zM1003 250h1v3h-1zM1003 256h1v3h-1zM1003 262h1v3h-1zM1003 268h1v3h-1zM1003 274h1v3h-1zM1003 280h1v3h-1zM1003 286h1v3h-1zM1003 292h1v3h-1zM1003 298h1v3h-1zM1003 304h1v3h-1zM1003 310h1v3h-1zM1003 316h1v3h-1zM1003 322h1v3h-1zM1003 328h1v3h-1zM1003 334h1v3h-1zM1003 340h1v3h-1zM1003 346h1v3h-1zM1003 352h1v3h-1zM1003 358h1v3h-1zM1003 364h1v3h-1zM1003 370h1v3h-1zM1003 376h1v3h-1zM1003 382h1v3h-1zM1003 388h1v3h-1zM1003 394h1v3h-1zM1003 400h1v3h-1zM1003 406h1v3h-1zM1003 412h1v3h-1zM1003 418h1v3h-1zM1003 424h1v3h-1zM1003 430h1v3h-1zM1003 436h1v3h-1zM1003 442h1v3h-1zM1003 448h1v3h-1zM1003 454h1v3h-1zM1003 460h1v3h-1zM1003 466h1v3h-1zM1003 472h1v3h-1zM1003 478h1v3h-1zM1003 484h1v3h-1zM1003 490h1v3h-1zM1003 496h1v3h-1zM1003 502h1v3h-1zM1003 508h1v3h-1zM1003 514h1v3h-1zM1003 520h1v3h-1zM1003 526h1v3h-1zM1003 532h1v3h-1zM1003 538h1v3h-1zM1003 544h1v3h-1zM1003 550h1v3h-1zM1003 556h1v3h-1zM1003 562h1v3h-1zM1003 568h1v3h-1zM1003 574h1v3h-1zM1003 580h1v3h-1zM1003 586h1v3h-1zM1003 592h1v3h-1zM1003 598h1v3h-1zM1003 604h1v3h-1zM1003 610h1v3h-1zM1003 616h1v3h-1zM1003 622h1v3h-1zM1003 628h1v3h-1zM1003 634h1v3h-1zM1003 640h1v3h-1zM1003 646h1v3h-1zM1003 652h1v3h-1zM1003 658h1v3h-1zM1003 664h1v3h-1zM1003 670h1v3h-1zM1003 676h1v3h-1zM1003 682h1v3h-1zM1003 688h1v3h-1zM1003 694h1v3h-1zM1003 700h1v3h-1zM1003 706h1v3h-1zM1003 712h1v3h-1zM1003 718h1v3h-1zM1003 724h1v1h-1zM1088 48h1v1h-1zM1088 52h1v3h-1zM1088 58h1v3h-1zM1088 64h1v3h-1zM1088 70h1v3h-1zM1088 76h1v3h-1zM1088 82h1v3h-1zM1088 88h1v3h-1zM1088 94h1v3h-1zM1088 100h1v3h-1zM1088 106h1v3h-1zM1088 112h1v3h-1zM1088 118h1v3h-1zM1088 124h1v3h-1zM1088 130h1v3h-1zM1088 136h1v3h-1zM1088 142h1v3h-1zM1088 148h1v3h-1zM1088 154h1v3h-1zM1088 160h1v3h-1zM1088 166h1v3h-1zM1088 172h1v3h-1zM1088 178h1v3h-1zM1088 184h1v3h-1zM1088 190h1v3h-1zM1088 196h1v3h-1zM1088 202h1v3h-1zM1088 208h1v3h-1zM1088 214h1v3h-1zM1088 220h1v3h-1zM1088 226h1v3h-1zM1088 232h1v3h-1zM1088 238h1v3h-1zM1088 244h1v3h-1zM1088 250h1v3h-1zM1088 256h1v3h-1zM1088 262h1v3h-1zM1088 268h1v3h-1zM1088 274h1v3h-1zM1088 280h1v3h-1zM1088 286h1v3h-1zM1088 292h1v3h-1zM1088 298h1v3h-1zM1088 304h1v3h-1zM1088 310h1v3h-1zM1088 316h1v3h-1zM1088 322h1v3h-1zM1088 328h1v3h-1zM1088 334h1v3h-1zM1088 340h1v3h-1zM1088 346h1v3h-1zM1088 352h1v3h-1zM1088 358h1v3h-1zM1088 364h1v3h-1zM1088 370h1v3h-1zM1088 376h1v3h-1zM1088 382h1v3h-1zM1088 388h1v3h-1zM1088 394h1v3h-1zM1088 400h1v3h-1zM1088 406h1v3h-1zM1088 412h1v3h-1zM1088 418h1v3h-1zM1088 424h1v3h-1zM1088 430h1v3h-1zM1088 436h1v3h-1zM1088 442h1v3h-1zM1088 448h1v3h-1zM1088 454h1v3h-1zM1088 460h1v3h-1zM1088 466h1v3h-1zM1088 472h1v3h-1zM1088 478h1v3h-1zM1088 484h1v3h-1zM1088 490h1v3h-1zM1088 496h1v3h-1zM1088 502h1v3h-1zM1088 508h1v3h-1zM1088 514h1v3h-1zM1088 520h1v3h-1zM1088 526h1v3h-1zM1088 532h1v3h-1zM1088 538h1v3h-1zM1088 544h1v3h-1zM1088 550h1v3h-1zM1088 556h1v3h-1zM1088 562h1v3h-1zM1088 568h1v3h-1zM1088 574h1v3h-1zM1088 580h1v3h-1zM1088 586h1v3h-1zM1088 592h1v3h-1zM1088 598h1v3h-1zM1088 604h1v3h-1zM1088 610h1v3h-1zM1088 616h1v3h-1zM1088 622h1v3h-1zM1088 628h1v3h-1zM1088 634h1v3h-1zM1088 640h1v3h-1zM1088 646h1v3h-1zM1088 652h1v3h-1zM1088 658h1v3h-1zM1088 664h1v3h-1zM1088 670h1v3h-1zM1088 676h1v3h-1zM1088 682h1v3h-1zM1088 688h1v3h-1zM1088 694h1v3h-1zM1088 700h1v3h-1zM1088 706h1v3h-1zM1088 712h1v3h-1zM1088 718h1v3h-1zM1088 724h1v1h-1zM1174 48h1v1h-1zM1174 52h1v3h-1zM1174 58h1v3h-1zM1174 64h1v3h-1zM1174 70h1v3h-1zM1174 76h1v3h-1zM1174 82h1v3h-1zM1174 88h1v3h-1zM1174 94h1v3h-1zM1174 100h1v3h-1zM1174 106h1v3h-1zM1174 112h1v3h-1zM1174 118h1v3h-1zM1174 124h1v3h-1zM1174 130h1v3h-1zM1174 136h1v3h-1zM1174 142h1v3h-1zM1174 148h1v3h-1zM1174 154h1v3h-1zM1174 160h1v3h-1zM1174 166h1v3h-1zM1174 172h1v3h-1zM1174 178h1v3h-1zM1174 184h1v3h-1zM1174 190h1v3h-1zM1174 196h1v3h-1zM1174 202h1v3h-1zM1174 208h1v3h-1zM1174 214h1v3h-1zM1174 220h1v3h-1zM1174 226h1v3h-1zM1174 232h1v3h-1zM1174 238h1v3h-1zM1174 244h1v3h-1zM1174 250h1v3h-1zM1174 256h1v3h-1zM1174 262h1v3h-1zM1174 268h1v3h-1zM1174 274h1v3h-1zM1174 280h1v3h-1zM1174 286h1v3h-1zM1174 292h1v3h-1zM1174 298h1v3h-1zM1174 304h1v3h-1zM1174 310h1v3h-1zM1174 316h1v3h-1zM1174 322h1v3h-1zM1174 328h1v3h-1zM1174 334h1v3h-1zM1174 340h1v3h-1zM1174 346h1v3h-1zM1174 352h1v3h-1zM1174 358h1v3h-1zM1174 364h1v3h-1zM1174 370h1v3h-1zM1174 376h1v3h-1zM1174 382h1v3h-1zM1174 388h1v3h-1zM1174 394h1v3h-1zM1174 400h1v3h-1zM1174 406h1v3h-1zM1174 412h1v3h-1zM1174 418h1v3h-1zM1174 424h1v3h-1zM1174 430h1v3h-1zM1174 436h1v3h-1zM1174 442h1v3h-1zM1174 448h1v3h-1zM1174 454h1v3h-1zM1174 460h1v3h-1zM1174 466h1v3h-1zM1174 472h1v3h-1zM1174 478h1v3h-1zM1174 484h1v3h-1zM1174 490h1v3h-1zM1174 496h1v3h-1zM1174 502h1v3h-1zM1174 508h1v3h-1zM1174 514h1v3h-1zM1174 520h1v3h-1zM1174 526h1v3h-1zM1174 532h1v3h-1zM1174 538h1v3h-1zM1174 544h1v3h-1zM1174 550h1v3h-1zM1174 556h1v3h-1zM1174 562h1v3h-1zM1174 568h1v3h-1zM1174 574h1v3h-1zM1174 580h1v3h-1zM1174 586h1v3h-1zM1174 592h1v3h-1zM1174 598h1v3h-1zM1174 604h1v3h-1zM1174 610h1v3h-1zM1174 616h1v3h-1zM1174 622h1v3h-1zM1174 628h1v3h-1zM1174 634h1v3h-1zM1174 640h1v3h-1zM1174 646h1v3h-1zM1174 652h1v3h-1zM1174 658h1v3h-1zM1174 664h1v3h-1zM1174 670h1v3h-1zM1174 676h1v3h-1zM1174 682h1v3h-1zM1174 688h1v3h-1zM1174 694h1v3h-1zM1174 700h1v3h-1zM1174 706h1v3h-1zM1174 712h1v3h-1zM1174 718h1v3h-1zM1174 724h1v1h-1zM1260 48h1v1h-1zM1260 52h1v3h-1zM1260 58h1v3h-1zM1260 64h1v3h-1zM1260 70h1v3h-1zM1260 76h1v3h-1zM1260 82h1v3h-1zM1260 88h1v3h-1zM1260 94h1v3h-1zM1260 100h1v3h-1zM1260 106h1v3h-1zM1260 112h1v3h-1zM1260 118h1v3h-1zM1260 124h1v3h-1zM1260 130h1v3h-1zM1260 136h1v3h-1zM1260 142h1v3h-1zM1260 148h1v3h-1zM1260 154h1v3h-1zM1260 160h1v3h-1zM1260 166h1v3h-1zM1260 172h1v3h-1zM1260 178h1v3h-1zM1260 184h1v3h-1zM1260 190h1v3h-1zM1260 196h1v3h-1zM1260 202h1v3h-1zM1260 208h1v3h-1zM1260 214h1v3h-1zM1260 220h1v3h-1zM1260 226h1v3h-1zM1260 232h1v3h-1zM1260 238h1v3h-1zM1260 244h1v3h-1zM1260 250h1v3h-1zM1260 256h1v3h-1zM1260 262h1v3h-1zM1260 268h1v3h-1zM1260 274h1v3h-1zM1260 280h1v3h-1zM1260 286h1v3h-1zM1260 292h1v3h-1zM1260 298h1v3h-1zM1260 304h1v3h-1zM1260 310h1v3h-1zM1260 316h1v3h-1zM1260 322h1v3h-1zM1260 328h1v3h-1zM1260 334h1v3h-1zM1260 340h1v3h-1zM1260 346h1v3h-1zM1260 352h1v3h-1zM1260 358h1v3h-1zM1260 364h1v3h-1zM1260 370h1v3h-1zM1260 376h1v3h-1zM1260 382h1v3h-1zM1260 388h1v3h-1zM1260 394h1v3h-1zM1260 400h1v3h-1zM1260 406h1v3h-1zM1260 412h1v3h-1zM1260 418h1v3h-1zM1260 424h1v3h-1zM1260 430h1v3h-1zM1260 436h1v3h-1zM1260 442h1v3h-1zM1260 448h1v3h-1zM1260 454h1v3h-1zM1260 460h1v3h-1zM1260 466h1v3h-1zM1260 472h1v3h-1zM1260 478h1v3h-1zM1260 484h1v3h-1zM1260 490h1v3h-1zM1260 496h1v3h-1zM1260 502h1v3h-1zM1260 508h1v3h-1zM1260 514h1v3h-1zM1260 520h1v3h-1zM1260 526h1v3h-1zM1260 532h1v3h-1zM1260 538h1v3h-1zM1260 544h1v3h-1zM1260 550h1v3h-1zM1260 556h1v3h-1zM1260 562h1v3h-1zM1260 568h1v3h-1zM1260 574h1v3h-1zM1260 580h1v3h-1zM1260 586h1v3h-1zM1260 592h1v3h-1zM1260 598h1v3h-1zM1260 604h1v3h-1zM1260 610h1v3h-1zM1260 616h1v3h-1zM1260 622h1v3h-1zM1260 628h1v3h-1zM1260 634h1v3h-1zM1260 640h1v3h-1zM1260 646h1v3h-1zM1260 652h1v3h-1zM1260 658h1v3h-1zM1260 664h1v3h-1zM1260 670h1v3h-1zM1260 676h1v3h-1zM1260 682h1v3h-1zM1260 688h1v3h-1zM1260 694h1v3h-1zM1260 700h1v3h-1zM1260 706h1v3h-1zM1260 712h1v3h-1zM1260 718h1v3h-1zM1260 724h1v1h-1zM1346 48h1v1h-1zM1346 52h1v3h-1zM1346 58h1v3h-1zM1346 64h1v3h-1zM1346 70h1v3h-1zM1346 76h1v3h-1zM1346 82h1v3h-1zM1346 88h1v3h-1zM1346 94h1v3h-1zM1346 100h1v3h-1zM1346 106h1v3h-1zM1346 112h1v3h-1zM1346 118h1v3h-1zM1346 124h1v3h-1zM1346 130h1v3h-1zM1346 136h1v3h-1zM1346 142h1v3h-1zM1346 148h1v3h-1zM1346 154h1v3h-1zM1346 160h1v3h-1zM1346 166h1v3h-1zM1346 172h1v3h-1zM1346 178h1v3h-1zM1346 184h1v3h-1zM1346 190h1v3h-1zM1346 196h1v3h-1zM1346 202h1v3h-1zM1346 208h1v3h-1zM1346 214h1v3h-1zM1346 220h1v3h-1zM1346 226h1v3h-1zM1346 232h1v3h-1zM1346 238h1v3h-1zM1346 244h1v3h-1zM1346 250h1v3h-1zM1346 256h1v3h-1zM1346 262h1v3h-1zM1346 268h1v3h-1zM1346 274h1v3h-1zM1346 280h1v3h-1zM1346 286h1v3h-1zM1346 292h1v3h-1zM1346 298h1v3h-1zM1346 304h1v3h-1zM1346 310h1v3h-1zM1346 316h1v3h-1zM1346 322h1v3h-1zM1346 328h1v3h-1zM1346 334h1v3h-1zM1346 340h1v3h-1zM1346 346h1v3h-1zM1346 352h1v3h-1zM1346 358h1v3h-1zM1346 364h1v3h-1zM1346 370h1v3h-1zM1346 376h1v3h-1zM1346 382h1v3h-1zM1346 388h1v3h-1zM1346 394h1v3h-1zM1346 400h1v3h-1zM1346 406h1v3h-1zM1346 412h1v3h-1zM1346 418h1v3h-1zM1346 424h1v3h-1zM1346 430h1v3h-1zM1346 436h1v3h-1zM1346 442h1v3h-1zM1346 448h1v3h-1zM1346 454h1v3h-1zM1346 460h1v3h-1zM1346 466h1v3h-1zM1346 472h1v3h-1zM1346 478h1v3h-1zM1346 484h1v3h-1zM1346 490h1v3h-1zM1346 496h1v3h-1zM1346 502h1v3h-1zM1346 508h1v3h-1zM1346 514h1v3h-1zM1346 520h1v3h-1zM1346 526h1v3h-1zM1346 532h1v3h-1zM1346 538h1v3h-1zM1346 544h1v3h-1zM1346 550h1v3h-1zM1346 556h1v3h-1zM1346 562h1v3h-1zM1346 568h1v3h-1zM1346 574h1v3h-1zM1346 580h1v3h-1zM1346 586h1v3h-1zM1346 592h1v3h-1zM1346 598h1v3h-1zM1346 604h1v3h-1zM1346 610h1v3h-1zM1346 616h1v3h-1zM1346 622h1v3h-1zM1346 628h1v3h-1zM1346 634h1v3h-1zM1346 640h1v3h-1zM1346 646h1v3h-1zM1346 652h1v3h-1zM1346 658h1v3h-1zM1346 664h1v3h-1zM1346 670h1v3h-1zM1346 676h1v3h-1zM1346 682h1v3h-1zM1346 688h1v3h-1zM1346 694h1v3h-1zM1346 700h1v3h-1zM1346 706h1v3h-1zM1346 712h1v3h-1zM1346 718h1v3h-1zM1346 724h1v1h-1zM1431 48h1v1h-1zM1431 52h1v3h-1zM1431 58h1v3h-1zM1431 64h1v3h-1zM1431 70h1v3h-1zM1431 76h1v3h-1zM1431 82h1v3h-1zM1431 88h1v3h-1zM1431 94h1v3h-1zM1431 100h1v3h-1zM1431 106h1v3h-1zM1431 112h1v3h-1zM1431 118h1v3h-1zM1431 124h1v3h-1zM1431 130h1v3h-1zM1431 136h1v3h-1zM1431 142h1v3h-1zM1431 148h1v3h-1zM1431 154h1v3h-1zM1431 160h1v3h-1zM1431 166h1v3h-1zM1431 172h1v3h-1zM1431 178h1v3h-1zM1431 184h1v3h-1zM1431 190h1v3h-1zM1431 196h1v3h-1zM1431 202h1v3h-1zM1431 208h1v3h-1zM1431 214h1v3h-1zM1431 220h1v3h-1zM1431 226h1v3h-1zM1431 232h1v3h-1zM1431 238h1v3h-1zM1431 244h1v3h-1zM1431 250h1v3h-1zM1431 256h1v3h-1zM1431 262h1v3h-1zM1431 268h1v3h-1zM1431 274h1v3h-1zM1431 280h1v3h-1zM1431 286h1v3h-1zM1431 292h1v3h-1zM1431 298h1v3h-1zM1431 304h1v3h-1zM1431 310h1v3h-1zM1431 316h1v3h-1zM1431 322h1v3h-1zM1431 328h1v3h-1zM1431 334h1v3h-1zM1431 340h1v3h-1zM1431 346h1v3h-1zM1431 352h1v3h-1zM1431 358h1v3h-1zM1431 364h1v3h-1zM1431 370h1v3h-1zM1431 376h1v3h-1zM1431 382h1v3h-1zM1431 388h1v3h-1zM1431 394h1v3h-1zM1431 400h1v3h-1zM1431 406h1v3h-1zM1431 412h1v3h-1zM1431 418h1v3h-1zM1431 424h1v3h-1zM1431 430h1v3h-1zM1431 436h1v3h-1zM1431 442h1v3h-1zM1431 448h1v3h-1zM1431 454h1v3h-1zM1431 460h1v3h-1zM1431 466h1v3h-1zM1431 472h1v3h-1zM1431 478h1v3h-1zM1431 484h1v3h-1zM1431 490h1v3h-1zM1431 496h1v3h-1zM1431 502h1v3h-1zM1431 508h1v3h-1zM1431 514h1v3h-1zM1431 520h1v3h-1zM1431 526h1v3h-1zM1431 532h1v3h-1zM1431 538h1v3h-1zM1431 544h1v3h-1zM1431 550h1v3h-1zM1431 556h1v3h-1zM1431 562h1v3h-1zM1431 568h1v3h-1zM1431 574h1v3h-1zM1431 580h1v3h-1zM1431 586h1v3h-1zM1431 592h1v3h-1zM1431 598h1v3h-1zM1431 604h1v3h-1zM1431 610h1v3h-1zM1431 616h1v3h-1zM1431 622h1v3h-1zM1431 628h1v3h-1zM1431 634h1v3h-1zM1431 640h1v3h-1zM1431 646h1v3h-1zM1431 652h1v3h-1zM1431 658h1v3h-1zM1431 664h1v3h-1zM1431 670h1v3h-1zM1431 676h1v3h-1zM1431 682h1v3h-1zM1431 688h1v3h-1zM1431 694h1v3h-1zM1431 700h1v3h-1zM1431 706h1v3h-1zM1431 712h1v3h-1zM1431 718h1v3h-1zM1431 724h1v1h-1zM662 646h1v1h-1zM666 646h3v1h-3zM672 646h3v1h-3zM678 646h3v1h-3zM684 646h3v1h-3zM690 646h3v1h-3zM696 646h3v1h-3zM702 646h3v1h-3zM708 646h3v1h-3zM714 646h3v1h-3zM720 646h3v1h-3zM726 646h3v1h-3zM732 646h3v1h-3zM738 646h3v1h-3zM744 646h3v1h-3zM750 646h3v1h-3zM756 646h3v1h-3zM762 646h3v1h-3zM768 646h3v1h-3zM774 646h3v1h-3zM780 646h3v1h-3zM786 646h3v1h-3zM792 646h3v1h-3zM798 646h3v1h-3zM804 646h3v1h-3zM810 646h3v1h-3zM816 646h3v1h-3zM822 646h3v1h-3zM828 646h3v1h-3zM834 646h3v1h-3zM840 646h3v1h-3zM846 646h3v1h-3zM852 646h3v1h-3zM858 646h3v1h-3zM864 646h3v1h-3zM870 646h3v1h-3zM876 646h3v1h-3zM882 646h3v1h-3zM888 646h3v1h-3zM894 646h3v1h-3zM900 646h3v1h-3zM906 646h3v1h-3zM912 646h3v1h-3zM918 646h3v1h-3zM924 646h3v1h-3zM930 646h3v1h-3zM936 646h3v1h-3zM942 646h3v1h-3zM948 646h3v1h-3zM954 646h3v1h-3zM960 646h3v1h-3zM966 646h3v1h-3zM972 646h3v1h-3zM978 646h3v1h-3zM984 646h3v1h-3zM990 646h3v1h-3zM996 646h3v1h-3zM1002 646h3v1h-3zM1008 646h3v1h-3zM1014 646h3v1h-3zM1020 646h3v1h-3zM1026 646h3v1h-3zM1032 646h3v1h-3zM1038 646h3v1h-3zM1044 646h3v1h-3zM1050 646h3v1h-3zM1056 646h3v1h-3zM1062 646h3v1h-3zM1068 646h3v1h-3zM1074 646h3v1h-3zM1080 646h3v1h-3zM1086 646h3v1h-3zM1092 646h3v1h-3zM1098 646h3v1h-3zM1104 646h3v1h-3zM1110 646h3v1h-3zM1116 646h3v1h-3zM1122 646h3v1h-3zM1128 646h3v1h-3zM1134 646h3v1h-3zM1140 646h3v1h-3zM1146 646h3v1h-3zM1152 646h3v1h-3zM1158 646h3v1h-3zM1164 646h3v1h-3zM1170 646h3v1h-3zM1176 646h3v1h-3zM1182 646h3v1h-3zM1188 646h3v1h-3zM1194 646h3v1h-3zM1200 646h3v1h-3zM1206 646h3v1h-3zM1212 646h3v1h-3zM1218 646h3v1h-3zM1224 646h3v1h-3zM1230 646h3v1h-3zM1236 646h3v1h-3zM1242 646h3v1h-3zM1248 646h3v1h-3zM1254 646h3v1h-3zM1260 646h3v1h-3zM1266 646h3v1h-3zM1272 646h3v1h-3zM1278 646h3v1h-3zM1284 646h3v1h-3zM1290 646h3v1h-3zM1296 646h3v1h-3zM1302 646h3v1h-3zM1308 646h3v1h-3zM1314 646h3v1h-3zM1320 646h3v1h-3zM1326 646h3v1h-3zM1332 646h3v1h-3zM1338 646h3v1h-3zM1344 646h3v1h-3zM1350 646h3v1h-3zM1356 646h3v1h-3zM1362 646h3v1h-3zM1368 646h3v1h-3zM1374 646h3v1h-3zM1380 646h3v1h-3zM1386 646h3v1h-3zM1392 646h3v1h-3zM1398 646h3v1h-3zM1404 646h3v1h-3zM1410 646h3v1h-3zM1416 646h3v1h-3zM1422 646h3v1h-3zM1428 646h3v1h-3zM1434 646h3v1h-3zM1440 646h3v1h-3zM1446 646h3v1h-3zM1452 646h3v1h-3zM1458 646h3v1h-3zM1464 646h3v1h-3zM1470 646h3v1h-3zM1476 646h3v1h-3zM1482 646h3v1h-3zM1488 646h3v1h-3zM1494 646h3v1h-3zM1500 646h3v1h-3zM1506 646h3v1h-3zM1512 646h3v1h-3zM662 566h1v1h-1zM666 566h3v1h-3zM672 566h3v1h-3zM678 566h3v1h-3zM684 566h3v1h-3zM690 566h3v1h-3zM696 566h3v1h-3zM702 566h3v1h-3zM708 566h3v1h-3zM714 566h3v1h-3zM720 566h3v1h-3zM726 566h3v1h-3zM732 566h3v1h-3zM738 566h3v1h-3zM744 566h3v1h-3zM750 566h3v1h-3zM756 566h3v1h-3zM762 566h3v1h-3zM768 566h3v1h-3zM774 566h3v1h-3zM780 566h3v1h-3zM786 566h3v1h-3zM792 566h3v1h-3zM798 566h3v1h-3zM804 566h3v1h-3zM810 566h3v1h-3zM816 566h3v1h-3zM822 566h3v1h-3zM828 566h3v1h-3zM834 566h3v1h-3zM840 566h3v1h-3zM846 566h3v1h-3zM852 566h3v1h-3zM858 566h3v1h-3zM864 566h3v1h-3zM870 566h3v1h-3zM876 566h3v1h-3zM882 566h3v1h-3zM888 566h3v1h-3zM894 566h3v1h-3zM900 566h3v1h-3zM906 566h3v1h-3zM912 566h3v1h-3zM918 566h3v1h-3zM924 566h3v1h-3zM930 566h3v1h-3zM936 566h3v1h-3zM942 566h3v1h-3zM948 566h3v1h-3zM954 566h3v1h-3zM960 566h3v1h-3zM966 566h3v1h-3zM972 566h3v1h-3zM978 566h3v1h-3zM984 566h3v1h-3zM990 566h3v1h-3zM996 566h3v1h-3zM1002 566h3v1h-3zM1008 566h3v1h-3zM1014 566h3v1h-3zM1020 566h3v1h-3zM1026 566h3v1h-3zM1032 566h3v1h-3zM1038 566h3v1h-3zM1044 566h3v1h-3zM1050 566h3v1h-3zM1056 566h3v1h-3zM1062 566h3v1h-3zM1068 566h3v1h-3zM1074 566h3v1h-3zM1080 566h3v1h-3zM1086 566h3v1h-3zM1092 566h3v1h-3zM1098 566h3v1h-3zM1104 566h3v1h-3zM1110 566h3v1h-3zM1116 566h3v1h-3zM1122 566h3v1h-3zM1128 566h3v1h-3zM1134 566h3v1h-3zM1140 566h3v1h-3zM1146 566h3v1h-3zM1152 566h3v1h-3zM1158 566h3v1h-3zM1164 566h3v1h-3zM1170 566h3v1h-3zM1176 566h3v1h-3zM1182 566h3v1h-3zM1188 566h3v1h-3zM1194 566h3v1h-3zM1200 566h3v1h-3zM1206 566h3v1h-3zM1212 566h3v1h-3zM1218 566h3v1h-3zM1224 566h3v1h-3zM1230 566h3v1h-3zM1236 566h3v1h-3zM1242 566h3v1h-3zM1248 566h3v1h-3zM1254 566h3v1h-3zM1260 566h3v1h-3zM1266 566h3v1h-3zM1272 566h3v1h-3zM1278 566h3v1h-3zM1284 566h3v1h-3zM1290 566h3v1h-3zM1296 566h3v1h-3zM1302 566h3v1h-3zM1308 566h3v1h-3zM1314 566h3v1h-3zM1320 566h3v1h-3zM1326 566h3v1h-3zM1332 566h3v1h-3zM1338 566h3v1h-3zM1344 566h3v1h-3zM1350 566h3v1h-3zM1356 566h3v1h-3zM1362 566h3v1h-3zM1368 566h3v1h-3zM1374 566h3v1h-3zM1380 566h3v1h-3zM1386 566h3v1h-3zM1392 566h3v1h-3zM1398 566h3v1h-3zM1404 566h3v1h-3zM1410 566h3v1h-3zM1416 566h3v1h-3zM1422 566h3v1h-3zM1428 566h3v1h-3zM1434 566h3v1h-3zM1440 566h3v1h-3zM1446 566h3v1h-3zM1452 566h3v1h-3zM1458 566h3v1h-3zM1464 566h3v1h-3zM1470 566h3v1h-3zM1476 566h3v1h-3zM1482 566h3v1h-3zM1488 566h3v1h-3zM1494 566h3v1h-3zM1500 566h3v1h-3zM1506 566h3v1h-3zM1512 566h3v1h-3zM662 486h1v1h-1zM666 486h3v1h-3zM672 486h3v1h-3zM678 486h3v1h-3zM684 486h3v1h-3zM690 486h3v1h-3zM696 486h3v1h-3zM702 486h3v1h-3zM708 486h3v1h-3zM714 486h3v1h-3zM720 486h3v1h-3zM726 486h3v1h-3zM732 486h3v1h-3zM738 486h3v1h-3zM744 486h3v1h-3zM750 486h3v1h-3zM756 486h3v1h-3zM762 486h3v1h-3zM768 486h3v1h-3zM774 486h3v1h-3zM780 486h3v1h-3zM786 486h3v1h-3zM792 486h3v1h-3zM798 486h3v1h-3zM804 486h3v1h-3zM810 486h3v1h-3zM816 486h3v1h-3zM822 486h3v1h-3zM828 486h3v1h-3zM834 486h3v1h-3zM840 486h3v1h-3zM846 486h3v1h-3zM852 486h3v1h-3zM858 486h3v1h-3zM864 486h3v1h-3zM870 486h3v1h-3zM876 486h3v1h-3zM882 486h3v1h-3zM888 486h3v1h-3zM894 486h3v1h-3zM900 486h3v1h-3zM906 486h3v1h-3zM912 486h3v1h-3zM918 486h3v1h-3zM924 486h3v1h-3zM930 486h3v1h-3zM936 486h3v1h-3zM942 486h3v1h-3zM948 486h3v1h-3zM954 486h3v1h-3zM960 486h3v1h-3zM966 486h3v1h-3zM972 486h3v1h-3zM978 486h3v1h-3zM984 486h3v1h-3zM990 486h3v1h-3zM996 486h3v1h-3zM1002 486h3v1h-3zM1008 486h3v1h-3zM1014 486h3v1h-3zM1020 486h3v1h-3zM1026 486h3v1h-3zM1032 486h3v1h-3zM1038 486h3v1h-3zM1044 486h3v1h-3zM1050 486h3v1h-3zM1056 486h3v1h-3zM1062 486h3v1h-3zM1068 486h3v1h-3zM1074 486h3v1h-3zM1080 486h3v1h-3zM1086 486h3v1h-3zM1092 486h3v1h-3zM1098 486h3v1h-3zM1104 486h3v1h-3zM1110 486h3v1h-3zM1116 486h3v1h-3zM1122 486h3v1h-3zM1128 486h3v1h-3zM1134 486h3v1h-3zM1140 486h3v1h-3zM1146 486h3v1h-3zM1152 486h3v1h-3zM1158 486h3v1h-3zM1164 486h3v1h-3zM1170 486h3v1h-3zM1176 486h3v1h-3zM1182 486h3v1h-3zM1188 486h3v1h-3zM1194 486h3v1h-3zM1200 486h3v1h-3zM1206 486h3v1h-3zM1212 486h3v1h-3zM1218 486h3v1h-3zM1224 486h3v1h-3zM1230 486h3v1h-3zM1236 486h3v1h-3zM1242 486h3v1h-3zM1248 486h3v1h-3zM1254 486h3v1h-3zM1260 486h3v1h-3zM1266 486h3v1h-3zM1272 486h3v1h-3zM1278 486h3v1h-3zM1284 486h3v1h-3zM1290 486h3v1h-3zM1296 486h3v1h-3zM1302 486h3v1h-3zM1308 486h3v1h-3zM1314 486h3v1h-3zM1320 486h3v1h-3zM1326 486h3v1h-3zM1332 486h3v1h-3zM1338 486h3v1h-3zM1344 486h3v1h-3zM1350 486h3v1h-3zM1356 486h3v1h-3zM1362 486h3v1h-3zM1368 486h3v1h-3zM1374 486h3v1h-3zM1380 486h3v1h-3zM1386 486h3v1h-3zM1392 486h3v1h-3zM1398 486h3v1h-3zM1404 486h3v1h-3zM1410 486h3v1h-3zM1416 486h3v1h-3zM1422 486h3v1h-3zM1428 486h3v1h-3zM1434 486h3v1h-3zM1440 486h3v1h-3zM1446 486h3v1h-3zM1452 486h3v1h-3zM1458 486h3v1h-3zM1464 486h3v1h-3zM1470 486h3v1h-3zM1476 486h3v1h-3zM1482 486h3v1h-3zM1488 486h3v1h-3zM1494 486h3v1h-3zM1500 486h3v1h-3zM1506 486h3v1h-3zM1512 486h3v1h-3zM662 406h1v1h-1zM666 406h3v1h-3zM672 406h3v1h-3zM678 406h3v1h-3zM684 406h3v1h-3zM690 406h3v1h-3zM696 406h3v1h-3zM702 406h3v1h-3zM708 406h3v1h-3zM714 406h3v1h-3zM720 406h3v1h-3zM726 406h3v1h-3zM732 406h3v1h-3zM738 406h3v1h-3zM744 406h3v1h-3zM750 406h3v1h-3zM756 406h3v1h-3zM762 406h3v1h-3zM768 406h3v1h-3zM774 406h3v1h-3zM780 406h3v1h-3zM786 406h3v1h-3zM792 406h3v1h-3zM798 406h3v1h-3zM804 406h3v1h-3zM810 406h3v1h-3zM816 406h3v1h-3zM822 406h3v1h-3zM828 406h3v1h-3zM834 406h3v1h-3zM840 406h3v1h-3zM846 406h3v1h-3zM852 406h3v1h-3zM858 406h3v1h-3zM864 406h3v1h-3zM870 406h3v1h-3zM876 406h3v1h-3zM882 406h3v1h-3zM888 406h3v1h-3zM894 406h3v1h-3zM900 406h3v1h-3zM906 406h3v1h-3zM912 406h3v1h-3zM918 406h3v1h-3zM924 406h3v1h-3zM930 406h3v1h-3zM936 406h3v1h-3zM942 406h3v1h-3zM948 406h3v1h-3zM954 406h3v1h-3zM960 406h3v1h-3zM966 406h3v1h-3zM972 406h3v1h-3zM978 406h3v1h-3zM984 406h3v1h-3zM990 406h3v1h-3zM996 406h3v1h-3zM1002 406h3v1h-3zM1008 406h3v1h-3zM1014 406h3v1h-3zM1020 406h3v1h-3zM1026 406h3v1h-3zM1032 406h3v1h-3zM1038 406h3v1h-3zM1044 406h3v1h-3zM1050 406h3v1h-3zM1056 406h3v1h-3zM1062 406h3v1h-3zM1068 406h3v1h-3zM1074 406h3v1h-3zM1080 406h3v1h-3zM1086 406h3v1h-3zM1092 406h3v1h-3zM1098 406h3v1h-3zM1104 406h3v1h-3zM1110 406h3v1h-3zM1116 406h3v1h-3zM1122 406h3v1h-3zM1128 406h3v1h-3zM1134 406h3v1h-3zM1140 406h3v1h-3zM1146 406h3v1h-3zM1152 406h3v1h-3zM1158 406h3v1h-3zM1164 406h3v1h-3zM1170 406h3v1h-3zM1176 406h3v1h-3zM1182 406h3v1h-3zM1188 406h3v1h-3zM1194 406h3v1h-3zM1200 406h3v1h-3zM1206 406h3v1h-3zM1212 406h3v1h-3zM1218 406h3v1h-3zM1224 406h3v1h-3zM1230 406h3v1h-3zM1236 406h3v1h-3zM1242 406h3v1h-3zM1248 406h3v1h-3zM1254 406h3v1h-3zM1260 406h3v1h-3zM1266 406h3v1h-3zM1272 406h3v1h-3zM1278 406h3v1h-3zM1284 406h3v1h-3zM1290 406h3v1h-3zM1296 406h3v1h-3zM1302 406h3v1h-3zM1308 406h3v1h-3zM1314 406h3v1h-3zM1320 406h3v1h-3zM1326 406h3v1h-3zM1332 406h3v1h-3zM1338 406h3v1h-3zM1344 406h3v1h-3zM1350 406h3v1h-3zM1356 406h3v1h-3zM1362 406h3v1h-3zM1368 406h3v1h-3zM1374 406h3v1h-3zM1380 406h3v1h-3zM1386 406h3v1h-3zM1392 406h3v1h-3zM1398 406h3v1h-3zM1404 406h3v1h-3zM1410 406h3v1h-3zM1416 406h3v1h-3zM1422 406h3v1h-3zM1428 406h3v1h-3zM1434 406h3v1h-3zM1440 406h3v1h-3zM1446 406h3v1h-3zM1452 406h3v1h-3zM1458 406h3v1h-3zM1464 406h3v1h-3zM1470 406h3v1h-3zM1476 406h3v1h-3zM1482 406h3v1h-3zM1488 406h3v1h-3zM1494 406h3v1h-3zM1500 406h3v1h-3zM1506 406h3v1h-3zM1512 406h3v1h-3zM662 326h1v1h-1zM666 326h3v1h-3zM672 326h3v1h-3zM678 326h3v1h-3zM684 326h3v1h-3zM690 326h3v1h-3zM696 326h3v1h-3zM702 326h3v1h-3zM708 326h3v1h-3zM714 326h3v1h-3zM720 326h3v1h-3zM726 326h3v1h-3zM732 326h3v1h-3zM738 326h3v1h-3zM744 326h3v1h-3zM750 326h3v1h-3zM756 326h3v1h-3zM762 326h3v1h-3zM768 326h3v1h-3zM774 326h3v1h-3zM780 326h3v1h-3zM786 326h3v1h-3zM792 326h3v1h-3zM798 326h3v1h-3zM804 326h3v1h-3zM810 326h3v1h-3zM816 326h3v1h-3zM822 326h3v1h-3zM828 326h3v1h-3zM834 326h3v1h-3zM840 326h3v1h-3zM846 326h3v1h-3zM852 326h3v1h-3zM858 326h3v1h-3zM864 326h3v1h-3zM870 326h3v1h-3zM876 326h3v1h-3zM882 326h3v1h-3zM888 326h3v1h-3zM894 326h3v1h-3zM900 326h3v1h-3zM906 326h3v1h-3zM912 326h3v1h-3zM918 326h3v1h-3zM924 326h3v1h-3zM930 326h3v1h-3zM936 326h3v1h-3zM942 326h3v1h-3zM948 326h3v1h-3zM954 326h3v1h-3zM960 326h3v1h-3zM966 326h3v1h-3zM972 326h3v1h-3zM978 326h3v1h-3zM984 326h3v1h-3zM990 326h3v1h-3zM996 326h3v1h-3zM1002 326h3v1h-3zM1008 326h3v1h-3zM1014 326h3v1h-3zM1020 326h3v1h-3zM1026 326h3v1h-3zM1032 326h3v1h-3zM1038 326h3v1h-3zM1044 326h3v1h-3zM1050 326h3v1h-3zM1056 326h3v1h-3zM1062 326h3v1h-3zM1068 326h3v1h-3zM1074 326h3v1h-3zM1080 326h3v1h-3zM1086 326h3v1h-3zM1092 326h3v1h-3zM1098 326h3v1h-3zM1104 326h3v1h-3zM1110 326h3v1h-3zM1116 326h3v1h-3zM1122 326h3v1h-3zM1128 326h3v1h-3zM1134 326h3v1h-3zM1140 326h3v1h-3zM1146 326h3v1h-3zM1152 326h3v1h-3zM1158 326h3v1h-3zM1164 326h3v1h-3zM1170 326h3v1h-3zM1176 326h3v1h-3zM1182 326h3v1h-3zM1188 326h3v1h-3zM1194 326h3v1h-3zM1200 326h3v1h-3zM1206 326h3v1h-3zM1212 326h3v1h-3zM1218 326h3v1h-3zM1224 326h3v1h-3zM1230 326h3v1h-3zM1236 326h3v1h-3zM1242 326h3v1h-3zM1248 326h3v1h-3zM1254 326h3v1h-3zM1260 326h3v1h-3zM1266 326h3v1h-3zM1272 326h3v1h-3zM1278 326h3v1h-3zM1284 326h3v1h-3zM1290 326h3v1h-3zM1296 326h3v1h-3zM1302 326h3v1h-3zM1308 326h3v1h-3zM1314 326h3v1h-3zM1320 326h3v1h-3zM1326 326h3v1h-3zM1332 326h3v1h-3zM1338 326h3v1h-3zM1344 326h3v1h-3zM1350 326h3v1h-3zM1356 326h3v1h-3zM1362 326h3v1h-3zM1368 326h3v1h-3zM1374 326h3v1h-3zM1380 326h3v1h-3zM1386 326h3v1h-3zM1392 326h3v1h-3zM1398 326h3v1h-3zM1404 326h3v1h-3zM1410 326h3v1h-3zM1416 326h3v1h-3zM1422 326h3v1h-3zM1428 326h3v1h-3zM1434 326h3v1h-3zM1440 326h3v1h-3zM1446 326h3v1h-3zM1452 326h3v1h-3zM1458 326h3v1h-3zM1464 326h3v1h-3zM1470 326h3v1h-3zM1476 326h3v1h-3zM1482 326h3v1h-3zM1488 326h3v1h-3zM1494 326h3v1h-3zM1500 326h3v1h-3zM1506 326h3v1h-3zM1512 326h3v1h-3zM662 246h1v1h-1zM666 246h3v1h-3zM672 246h3v1h-3zM678 246h3v1h-3zM684 246h3v1h-3zM690 246h3v1h-3zM696 246h3v1h-3zM702 246h3v1h-3zM708 246h3v1h-3zM714 246h3v1h-3zM720 246h3v1h-3zM726 246h3v1h-3zM732 246h3v1h-3zM738 246h3v1h-3zM744 246h3v1h-3zM750 246h3v1h-3zM756 246h3v1h-3zM762 246h3v1h-3zM768 246h3v1h-3zM774 246h3v1h-3zM780 246h3v1h-3zM786 246h3v1h-3zM792 246h3v1h-3zM798 246h3v1h-3zM804 246h3v1h-3zM810 246h3v1h-3zM816 246h3v1h-3zM822 246h3v1h-3zM828 246h3v1h-3zM834 246h3v1h-3zM840 246h3v1h-3zM846 246h3v1h-3zM852 246h3v1h-3zM858 246h3v1h-3zM864 246h3v1h-3zM870 246h3v1h-3zM876 246h3v1h-3zM882 246h3v1h-3zM888 246h3v1h-3zM894 246h3v1h-3zM900 246h3v1h-3zM906 246h3v1h-3zM912 246h3v1h-3zM918 246h3v1h-3zM924 246h3v1h-3zM930 246h3v1h-3zM936 246h3v1h-3zM942 246h3v1h-3zM948 246h3v1h-3zM954 246h3v1h-3zM960 246h3v1h-3zM966 246h3v1h-3zM972 246h3v1h-3zM978 246h3v1h-3zM984 246h3v1h-3zM990 246h3v1h-3zM996 246h3v1h-3zM1002 246h3v1h-3zM1008 246h3v1h-3zM1014 246h3v1h-3zM1020 246h3v1h-3zM1026 246h3v1h-3zM1032 246h3v1h-3zM1038 246h3v1h-3zM1044 246h3v1h-3zM1050 246h3v1h-3zM1056 246h3v1h-3zM1062 246h3v1h-3zM1068 246h3v1h-3zM1074 246h3v1h-3zM1080 246h3v1h-3zM1086 246h3v1h-3zM1092 246h3v1h-3zM1098 246h3v1h-3zM1104 246h3v1h-3zM1110 246h3v1h-3zM1116 246h3v1h-3zM1122 246h3v1h-3zM1128 246h3v1h-3zM1134 246h3v1h-3zM1140 246h3v1h-3zM1146 246h3v1h-3zM1152 246h3v1h-3zM1158 246h3v1h-3zM1164 246h3v1h-3zM1170 246h3v1h-3zM1176 246h3v1h-3zM1182 246h3v1h-3zM1188 246h3v1h-3zM1194 246h3v1h-3zM1200 246h3v1h-3zM1206 246h3v1h-3zM1212 246h3v1h-3zM1218 246h3v1h-3zM1224 246h3v1h-3zM1230 246h3v1h-3zM1236 246h3v1h-3zM1242 246h3v1h-3zM1248 246h3v1h-3zM1254 246h3v1h-3zM1260 246h3v1h-3zM1266 246h3v1h-3zM1272 246h3v1h-3zM1278 246h3v1h-3zM1284 246h3v1h-3zM1290 246h3v1h-3zM1296 246h3v1h-3zM1302 246h3v1h-3zM1308 246h3v1h-3zM1314 246h3v1h-3zM1320 246h3v1h-3zM1326 246h3v1h-3zM1332 246h3v1h-3zM1338 246h3v1h-3zM1344 246h3v1h-3zM1350 246h3v1h-3zM1356 246h3v1h-3zM1362 246h3v1h-3zM1368 246h3v1h-3zM1374 246h3v1h-3zM1380 246h3v1h-3zM1386 246h3v1h-3zM1392 246h3v1h-3zM1398 246h3v1h-3zM1404 246h3v1h-3zM1410 246h3v1h-3zM1416 246h3v1h-3zM1422 246h3v1h-3zM1428 246h3v1h-3zM1434 246h3v1h-3zM1440 246h3v1h-3zM1446 246h3v1h-3zM1452 246h3v1h-3zM1458 246h3v1h-3zM1464 246h3v1h-3zM1470 246h3v1h-3zM1476 246h3v1h-3zM1482 246h3v1h-3zM1488 246h3v1h-3zM1494 246h3v1h-3zM1500 246h3v1h-3zM1506 246h3v1h-3zM1512 246h3v1h-3zM662 166h1v1h-1zM666 166h3v1h-3zM672 166h3v1h-3zM678 166h3v1h-3zM684 166h3v1h-3zM690 166h3v1h-3zM696 166h3v1h-3zM702 166h3v1h-3zM708 166h3v1h-3zM714 166h3v1h-3zM720 166h3v1h-3zM726 166h3v1h-3zM732 166h3v1h-3zM738 166h3v1h-3zM744 166h3v1h-3zM750 166h3v1h-3zM756 166h3v1h-3zM762 166h3v1h-3zM768 166h3v1h-3zM774 166h3v1h-3zM780 166h3v1h-3zM786 166h3v1h-3zM792 166h3v1h-3zM798 166h3v1h-3zM804 166h3v1h-3zM810 166h3v1h-3zM816 166h3v1h-3zM822 166h3v1h-3zM828 166h3v1h-3zM834 166h3v1h-3zM840 166h3v1h-3zM846 166h3v1h-3zM852 166h3v1h-3zM858 166h3v1h-3zM864 166h3v1h-3zM870 166h3v1h-3zM876 166h3v1h-3zM882 166h3v1h-3zM888 166h3v1h-3zM894 166h3v1h-3zM900 166h3v1h-3zM906 166h3v1h-3zM912 166h3v1h-3zM918 166h3v1h-3zM924 166h3v1h-3zM930 166h3v1h-3zM936 166h3v1h-3zM942 166h3v1h-3zM948 166h3v1h-3zM954 166h3v1h-3zM960 166h3v1h-3zM966 166h3v1h-3zM972 166h3v1h-3zM978 166h3v1h-3zM984 166h3v1h-3zM990 166h3v1h-3zM996 166h3v1h-3zM1002 166h3v1h-3zM1008 166h3v1h-3zM1014 166h3v1h-3zM1020 166h3v1h-3zM1026 166h3v1h-3zM1032 166h3v1h-3zM1038 166h3v1h-3zM1044 166h3v1h-3zM1050 166h3v1h-3zM1056 166h3v1h-3zM1062 166h3v1h-3zM1068 166h3v1h-3zM1074 166h3v1h-3zM1080 166h3v1h-3zM1086 166h3v1h-3zM1092 166h3v1h-3zM1098 166h3v1h-3zM1104 166h3v1h-3zM1110 166h3v1h-3zM1116 166h3v1h-3zM1122 166h3v1h-3zM1128 166h3v1h-3zM1134 166h3v1h-3zM1140 166h3v1h-3zM1146 166h3v1h-3zM1152 166h3v1h-3zM1158 166h3v1h-3zM1164 166h3v1h-3zM1170 166h3v1h-3zM1176 166h3v1h-3zM1182 166h3v1h-3zM1188 166h3v1h-3zM1194 166h3v1h-3zM1200 166h3v1h-3zM1206 166h3v1h-3zM1212 166h3v1h-3zM1218 166h3v1h-3zM1224 166h3v1h-3zM1230 166h3v1h-3zM1236 166h3v1h-3zM1242 166h3v1h-3zM1248 166h3v1h-3zM1254 166h3v1h-3zM1260 166h3v1h-3zM1266 166h3v1h-3zM1272 166h3v1h-3zM1278 166h3v1h-3zM1284 166h3v1h-3zM1290 166h3v1h-3zM1296 166h3v1h-3zM1302 166h3v1h-3zM1308 166h3v1h-3zM1314 166h3v1h-3zM1320 166h3v1h-3zM1326 166h3v1h-3zM1332 166h3v1h-3zM1338 166h3v1h-3zM1344 166h3v1h-3zM1350 166h3v1h-3zM1356 166h3v1h-3zM1362 166h3v1h-3zM1368 166h3v1h-3zM1374 166h3v1h-3zM1380 166h3v1h-3zM1386 166h3v1h-3zM1392 166h3v1h-3zM1398 166h3v1h-3zM1404 166h3v1h-3zM1410 166h3v1h-3zM1416 166h3v1h-3zM1422 166h3v1h-3zM1428 166h3v1h-3zM1434 166h3v1h-3zM1440 166h3v1h-3zM1446 166h3v1h-3zM1452 166h3v1h-3zM1458 166h3v1h-3zM1464 166h3v1h-3zM1470 166h3v1h-3zM1476 166h3v1h-3zM1482 166h3v1h-3zM1488 166h3v1h-3zM1494 166h3v1h-3zM1500 166h3v1h-3zM1506 166h3v1h-3zM1512 166h3v1h-3zM662 86h1v1h-1zM666 86h3v1h-3zM672 86h3v1h-3zM678 86h3v1h-3zM684 86h3v1h-3zM690 86h3v1h-3zM696 86h3v1h-3zM702 86h3v1h-3zM708 86h3v1h-3zM714 86h3v1h-3zM720 86h3v1h-3zM726 86h3v1h-3zM732 86h3v1h-3zM738 86h3v1h-3zM744 86h3v1h-3zM750 86h3v1h-3zM756 86h3v1h-3zM762 86h3v1h-3zM768 86h3v1h-3zM774 86h3v1h-3zM780 86h3v1h-3zM786 86h3v1h-3zM792 86h3v1h-3zM798 86h3v1h-3zM804 86h3v1h-3zM810 86h3v1h-3zM816 86h3v1h-3zM822 86h3v1h-3zM828 86h3v1h-3zM834 86h3v1h-3zM840 86h3v1h-3zM846 86h3v1h-3zM852 86h3v1h-3zM858 86h3v1h-3zM864 86h3v1h-3zM870 86h3v1h-3zM876 86h3v1h-3zM882 86h3v1h-3zM888 86h3v1h-3zM894 86h3v1h-3zM900 86h3v1h-3zM906 86h3v1h-3zM912 86h3v1h-3zM918 86h3v1h-3zM924 86h3v1h-3zM930 86h3v1h-3zM936 86h3v1h-3zM942 86h3v1h-3zM948 86h3v1h-3zM954 86h3v1h-3zM960 86h3v1h-3zM966 86h3v1h-3zM972 86h3v1h-3zM978 86h3v1h-3zM984 86h3v1h-3zM990 86h3v1h-3zM996 86h3v1h-3zM1002 86h3v1h-3zM1008 86h3v1h-3zM1014 86h3v1h-3zM1020 86h3v1h-3zM1026 86h3v1h-3zM1032 86h3v1h-3zM1038 86h3v1h-3zM1044 86h3v1h-3zM1050 86h3v1h-3zM1056 86h3v1h-3zM1062 86h3v1h-3zM1068 86h3v1h-3zM1074 86h3v1h-3zM1080 86h3v1h-3zM1086 86h3v1h-3zM1092 86h3v1h-3zM1098 86h3v1h-3zM1104 86h3v1h-3zM1110 86h3v1h-3zM1116 86h3v1h-3zM1122 86h3v1h-3zM1128 86h3v1h-3zM1134 86h3v1h-3zM1140 86h3v1h-3zM1146 86h3v1h-3zM1152 86h3v1h-3zM1158 86h3v1h-3zM1164 86h3v1h-3zM1170 86h3v1h-3zM1176 86h3v1h-3zM1182 86h3v1h-3zM1188 86h3v1h-3zM1194 86h3v1h-3zM1200 86h3v1h-3zM1206 86h3v1h-3zM1212 86h3v1h-3zM1218 86h3v1h-3zM1224 86h3v1h-3zM1230 86h3v1h-3zM1236 86h3v1h-3zM1242 86h3v1h-3zM1248 86h3v1h-3zM1254 86h3v1h-3zM1260 86h3v1h-3zM1266 86h3v1h-3zM1272 86h3v1h-3zM1278 86h3v1h-3zM1284 86h3v1h-3zM1290 86h3v1h-3zM1296 86h3v1h-3zM1302 86h3v1h-3zM1308 86h3v1h-3zM1314 86h3v1h-3zM1320 86h3v1h-3zM1326 86h3v1h-3zM1332 86h3v1h-3zM1338 86h3v1h-3zM1344 86h3v1h-3zM1350 86h3v1h-3zM1356 86h3v1h-3zM1362 86h3v1h-3zM1368 86h3v1h-3zM1374 86h3v1h-3zM1380 86h3v1h-3zM1386 86h3v1h-3zM1392 86h3v1h-3zM1398 86h3v1h-3zM1404 86h3v1h-3zM1410 86h3v1h-3zM1416 86h3v1h-3zM1422 86h3v1h-3zM1428 86h3v1h-3zM1434 86h3v1h-3zM1440 86h3v1h-3zM1446 86h3v1h-3zM1452 86h3v1h-3zM1458 86h3v1h-3zM1464 86h3v1h-3zM1470 86h3v1h-3zM1476 86h3v1h-3zM1482 86h3v1h-3zM1488 86h3v1h-3zM1494 86h3v1h-3zM1500 86h3v1h-3zM1506 86h3v1h-3zM1512 86h3v1h-3z" fill="#6a6a6a"/><rect x="659" y="45" width="860" height="3" fill="#ffffff"/><rect x="659" y="725" width="860" height="3" fill="#ffffff"/><rect x="659" y="45" width="3" height="683" fill="#ffffff"/><rect x="1516" y="45" width="3" height="683" fill="#ffffff"/><rect x="652" y="725" width="7" height="3" fill="#ffffff"/><rect x="652" y="645" width="7" height="3" fill="#ffffff"/><rect x="652" y="565" width="7" height="3" fill="#ffffff"/><rect x="652" y="485" width="7" height="3" fill="#ffffff"/><rect x="652" y="405" width="7" height="3" fill="#ffffff"/><rect x="652" y="325" width="7" height="3" fill="#ffffff"/><rect x="652" y="245" width="7" height="3" fill="#ffffff"/><rect x="652" y="165" width="7" height="3" fill="#ffffff"/><rect x="652" y="85" width="7" height="3" fill="#ffffff"/><rect x="659" y="728" width="3" height="6" fill="#ffffff"/><rect x="745" y="728" width="3" height="6" fill="#ffffff"/><rect x="830" y="728" width="3" height="6" fill="#ffffff"/><rect x="916" y="728" width="3" height="6" fill="#ffffff"/><rect x="1002" y="728" width="3" height="6" fill="#ffffff"/><rect x="1087" y="728" width="3" height="6" fill="#ffffff"/><rect x="1173" y="728" width="3" height="6" fill="#ffffff"/><rect x="1259" y="728" width="3" height="6" fill="#ffffff"/><rect x="1345" y="728" width="3" height="6" fill="#ffffff"/><rect x="1430" y="728" width="3" height="6" fill="#ffffff"/><rect x="1516" y="728" width="3" height="6" fill="#ffffff"/><g font-family="Liberation Sans" font-weight="700" fill="#fff"><text transform="translate(652,731) scale(0.9,1)" font-size="14" text-anchor="end">0V</text><text transform="translate(652,651) scale(0.9,1)" font-size="14" text-anchor="end">1V</text><text transform="translate(652,571) scale(0.9,1)" font-size="14" text-anchor="end">2V</text><text transform="translate(652,491) scale(0.9,1)" font-size="14" text-anchor="end">3V</text><text transform="translate(652,411) scale(0.9,1)" font-size="14" text-anchor="end">4V</text><text transform="translate(652,331) scale(0.9,1)" font-size="14" text-anchor="end">5V</text><text transform="translate(652,251) scale(0.9,1)" font-size="14" text-anchor="end">6V</text><text transform="translate(652,171) scale(0.9,1)" font-size="14" text-anchor="end">7V</text><text transform="translate(652,91) scale(0.9,1)" font-size="14" text-anchor="end">8V</text><text transform="translate(660.5,747) scale(0.97,1)" font-size="14" text-anchor="middle">0ms</text><text transform="translate(746.5,747) scale(0.97,1)" font-size="14" text-anchor="middle">50ms</text><text transform="translate(831.5,747) scale(0.97,1)" font-size="14" text-anchor="middle">100ms</text><text transform="translate(917.5,747) scale(0.97,1)" font-size="14" text-anchor="middle">150ms</text><text transform="translate(1003.5,747) scale(0.97,1)" font-size="14" text-anchor="middle">200ms</text><text transform="translate(1088.5,747) scale(0.97,1)" font-size="14" text-anchor="middle">250ms</text><text transform="translate(1174.5,747) scale(0.97,1)" font-size="14" text-anchor="middle">300ms</text><text transform="translate(1260.5,747) scale(0.97,1)" font-size="14" text-anchor="middle">350ms</text><text transform="translate(1346.5,747) scale(0.97,1)" font-size="14" text-anchor="middle">400ms</text><text transform="translate(1431.5,747) scale(0.97,1)" font-size="14" text-anchor="middle">450ms</text><text transform="translate(1517.5,747) scale(0.97,1)" font-size="14" text-anchor="middle">500ms</text></g><g font-family="Liberation Sans" font-weight="700" font-size="14"><text transform="translate(801.5,41) scale(0.88,1)" text-anchor="middle" fill="#ff0000">V(s2)</text><text transform="translate(1086.5,41) scale(0.88,1)" text-anchor="middle" fill="#c8c800">V(s1)</text><text transform="translate(1371.5,41) scale(0.88,1)" text-anchor="middle" fill="#00c000">V(out)</text></g><rect x="660" y="285.0" width="858" height="3" fill="#ff0000"/><rect x="659" y="286.0" width="860" height="1" fill="#ff0000"/><rect x="659" y="286.0" width="3" height="41.0" fill="#ff0000"/><rect x="660" y="285.0" width="1" height="43.0" fill="#ff0000"/><rect x="710" y="81" width="3" height="207.0" fill="#ff0000"/><rect x="711" y="80" width="1" height="1" fill="#ff0000"/><rect x="713" y="265" width="1" height="21" fill="#ff0000"/><rect x="882" y="81" width="3" height="207.0" fill="#ff0000"/><rect x="883" y="80" width="1" height="1" fill="#ff0000"/><rect x="830" y="286.0" width="3" height="41.0" fill="#ff0000"/><rect x="831" y="285.0" width="1" height="43.0" fill="#ff0000"/><rect x="1053" y="81" width="3" height="207.0" fill="#ff0000"/><rect x="1054" y="80" width="1" height="1" fill="#ff0000"/><rect x="1002" y="286.0" width="3" height="41.0" fill="#ff0000"/><rect x="1003" y="285.0" width="1" height="43.0" fill="#ff0000"/><rect x="1225" y="81" width="3" height="207.0" fill="#ff0000"/><rect x="1226" y="80" width="1" height="1" fill="#ff0000"/><rect x="1173" y="286.0" width="3" height="41.0" fill="#ff0000"/><rect x="1174" y="285.0" width="1" height="43.0" fill="#ff0000"/><rect x="1396" y="81" width="3" height="207.0" fill="#ff0000"/><rect x="1397" y="80" width="1" height="1" fill="#ff0000"/><rect x="1345" y="286.0" width="3" height="41.0" fill="#ff0000"/><rect x="1346" y="285.0" width="1" height="43.0" fill="#ff0000"/><rect x="660" y="725" width="52" height="3" fill="#b1a900"/><rect x="659" y="726" width="54" height="1" fill="#b1a900"/><rect x="710" y="360" width="3" height="368" fill="#b1a900"/><rect x="711" y="340" width="3" height="20" fill="#b1a900"/><rect x="711" y="340" width="121" height="3" fill="#b1a900"/><rect x="710" y="341" width="123" height="1" fill="#b1a900"/><rect x="830" y="341" width="3" height="386" fill="#b1a900"/><rect x="831" y="340" width="1" height="388" fill="#b1a900"/><rect x="831" y="725" width="53" height="3" fill="#b1a900"/><rect x="830" y="726" width="55" height="1" fill="#b1a900"/><rect x="882" y="341" width="3" height="386" fill="#b1a900"/><rect x="883" y="340" width="1" height="388" fill="#b1a900"/><rect x="883" y="340" width="121" height="3" fill="#b1a900"/><rect x="882" y="341" width="123" height="1" fill="#b1a900"/><rect x="1002" y="341" width="3" height="386" fill="#b1a900"/><rect x="1003" y="340" width="1" height="388" fill="#b1a900"/><rect x="1003" y="725" width="52" height="3" fill="#b1a900"/><rect x="1002" y="726" width="54" height="1" fill="#b1a900"/><rect x="1053" y="341" width="3" height="386" fill="#b1a900"/><rect x="1054" y="340" width="1" height="388" fill="#b1a900"/><rect x="1054" y="340" width="121" height="3" fill="#b1a900"/><rect x="1053" y="341" width="123" height="1" fill="#b1a900"/><rect x="1173" y="341" width="3" height="386" fill="#b1a900"/><rect x="1174" y="340" width="1" height="388" fill="#b1a900"/><rect x="1174" y="725" width="53" height="3" fill="#b1a900"/><rect x="1173" y="726" width="55" height="1" fill="#b1a900"/><rect x="1225" y="341" width="3" height="386" fill="#b1a900"/><rect x="1226" y="340" width="1" height="388" fill="#b1a900"/><rect x="1226" y="340" width="121" height="3" fill="#b1a900"/><rect x="1225" y="341" width="123" height="1" fill="#b1a900"/><rect x="1345" y="341" width="3" height="386" fill="#b1a900"/><rect x="1346" y="340" width="1" height="388" fill="#b1a900"/><rect x="1346" y="725" width="52" height="3" fill="#b1a900"/><rect x="1345" y="726" width="54" height="1" fill="#b1a900"/><rect x="1396" y="341" width="3" height="386" fill="#b1a900"/><rect x="1397" y="340" width="1" height="388" fill="#b1a900"/><rect x="1397" y="340" width="121" height="3" fill="#b1a900"/><rect x="1396" y="341" width="123" height="1" fill="#b1a900"/><rect x="659" y="326" width="3" height="401" fill="#00c000"/><rect x="660" y="325" width="1" height="403" fill="#00c000"/><rect x="660" y="725" width="172" height="3" fill="#00c000"/><rect x="659" y="726" width="174" height="1" fill="#00c000"/><rect x="830" y="326" width="3" height="401" fill="#00c000"/><rect x="831" y="325" width="1" height="403" fill="#00c000"/><rect x="831" y="325" width="107" height="3" fill="#00c000"/><rect x="830" y="326" width="109" height="1" fill="#00c000"/><rect x="936" y="326" width="3" height="401" fill="#00c000"/><rect x="937" y="325" width="1" height="403" fill="#00c000"/><rect x="937" y="725" width="67" height="3" fill="#00c000"/><rect x="936" y="726" width="69" height="1" fill="#00c000"/><rect x="1002" y="326" width="3" height="401" fill="#00c000"/><rect x="1003" y="325" width="1" height="403" fill="#00c000"/><rect x="1003" y="325" width="106" height="3" fill="#00c000"/><rect x="1002" y="326" width="108" height="1" fill="#00c000"/><rect x="1107" y="326" width="3" height="401" fill="#00c000"/><rect x="1108" y="325" width="1" height="403" fill="#00c000"/><rect x="1108" y="725" width="67" height="3" fill="#00c000"/><rect x="1107" y="726" width="69" height="1" fill="#00c000"/><rect x="1173" y="326" width="3" height="401" fill="#00c000"/><rect x="1174" y="325" width="1" height="403" fill="#00c000"/><rect x="1174" y="325" width="107" height="3" fill="#00c000"/><rect x="1173" y="326" width="109" height="1" fill="#00c000"/><rect x="1279" y="326" width="3" height="401" fill="#00c000"/><rect x="1280" y="325" width="1" height="403" fill="#00c000"/><rect x="1280" y="725" width="67" height="3" fill="#00c000"/><rect x="1279" y="726" width="69" height="1" fill="#00c000"/><rect x="1345" y="326" width="3" height="401" fill="#00c000"/><rect x="1346" y="325" width="1" height="403" fill="#00c000"/><rect x="1346" y="325" width="106" height="3" fill="#00c000"/><rect x="1345" y="326" width="108" height="1" fill="#00c000"/><rect x="1450" y="326" width="3" height="401" fill="#00c000"/><rect x="1451" y="325" width="1" height="403" fill="#00c000"/><rect x="1451" y="725" width="67" height="3" fill="#00c000"/><rect x="1450" y="726" width="69" height="1" fill="#00c000"/></g><path d="M10 15h1v1h-1zM11 15h1v1h-1zM12 15h1v1h-1zM15 12h1v1h-1zM16 11h1v1h-1zM17 10h1v1h-1zM18 10h1v1h-1zM19 9h1v1h-1zM20 8h1v1h-1zM15 18h1v1h-1zM16 19h1v1h-1zM17 20h1v1h-1zM18 21h1v1h-1zM19 22h1v1h-1zM20 23h1v1h-1zM21 23h1v1h-1zM16 21h1v1h-1zM17 21h1v1h-1zM18 20h1v1h-1zM17 22h1v1h-1zM18 22h1v1h-1zM19 21h1v1h-1zM18 19h1v1h-1z" fill="#0000ff" shape-rendering="crispEdges"/><rect x="13" y="11" width="2" height="9" fill="#0000ff"/><text x="26" y="21" font-family="Liberation Sans" font-size="11.3" letter-spacing="0.7" fill="#ffffff">555-Monoflop-entprell.asc</text><rect x="639" y="8" width="13" height="13" fill="#c0c0c0"/><rect x="636" y="8" width="3" height="16" fill="#000"/><rect x="636" y="21" width="16" height="3" fill="#000"/><rect x="636" y="9" width="2" height="2" fill="#fff"/><rect x="636" y="12" width="2" height="2" fill="#fff"/><rect x="636" y="15" width="2" height="2" fill="#fff"/><rect x="636" y="18" width="2" height="2" fill="#fff"/><rect x="636" y="22" width="2" height="2" fill="#fff"/><rect x="639" y="22" width="2" height="2" fill="#fff"/><rect x="642" y="22" width="2" height="2" fill="#fff"/><rect x="645" y="22" width="2" height="2" fill="#fff"/><rect x="648" y="22" width="2" height="2" fill="#fff"/><rect x="651" y="22" width="1" height="2" fill="#fff"/><path d="M639,16 L642.5,12.3 L644.5,12.3 L647.3,15.2 L649.2,15.2 L652,11" stroke="#ff0000" stroke-width="1.6" fill="none"/><text x="654" y="21" font-family="Liberation Sans" font-size="11.3" letter-spacing="0.7" fill="#d4d0c8">555-Monoflop-entprell.raw</text></svg>
</body></html>
